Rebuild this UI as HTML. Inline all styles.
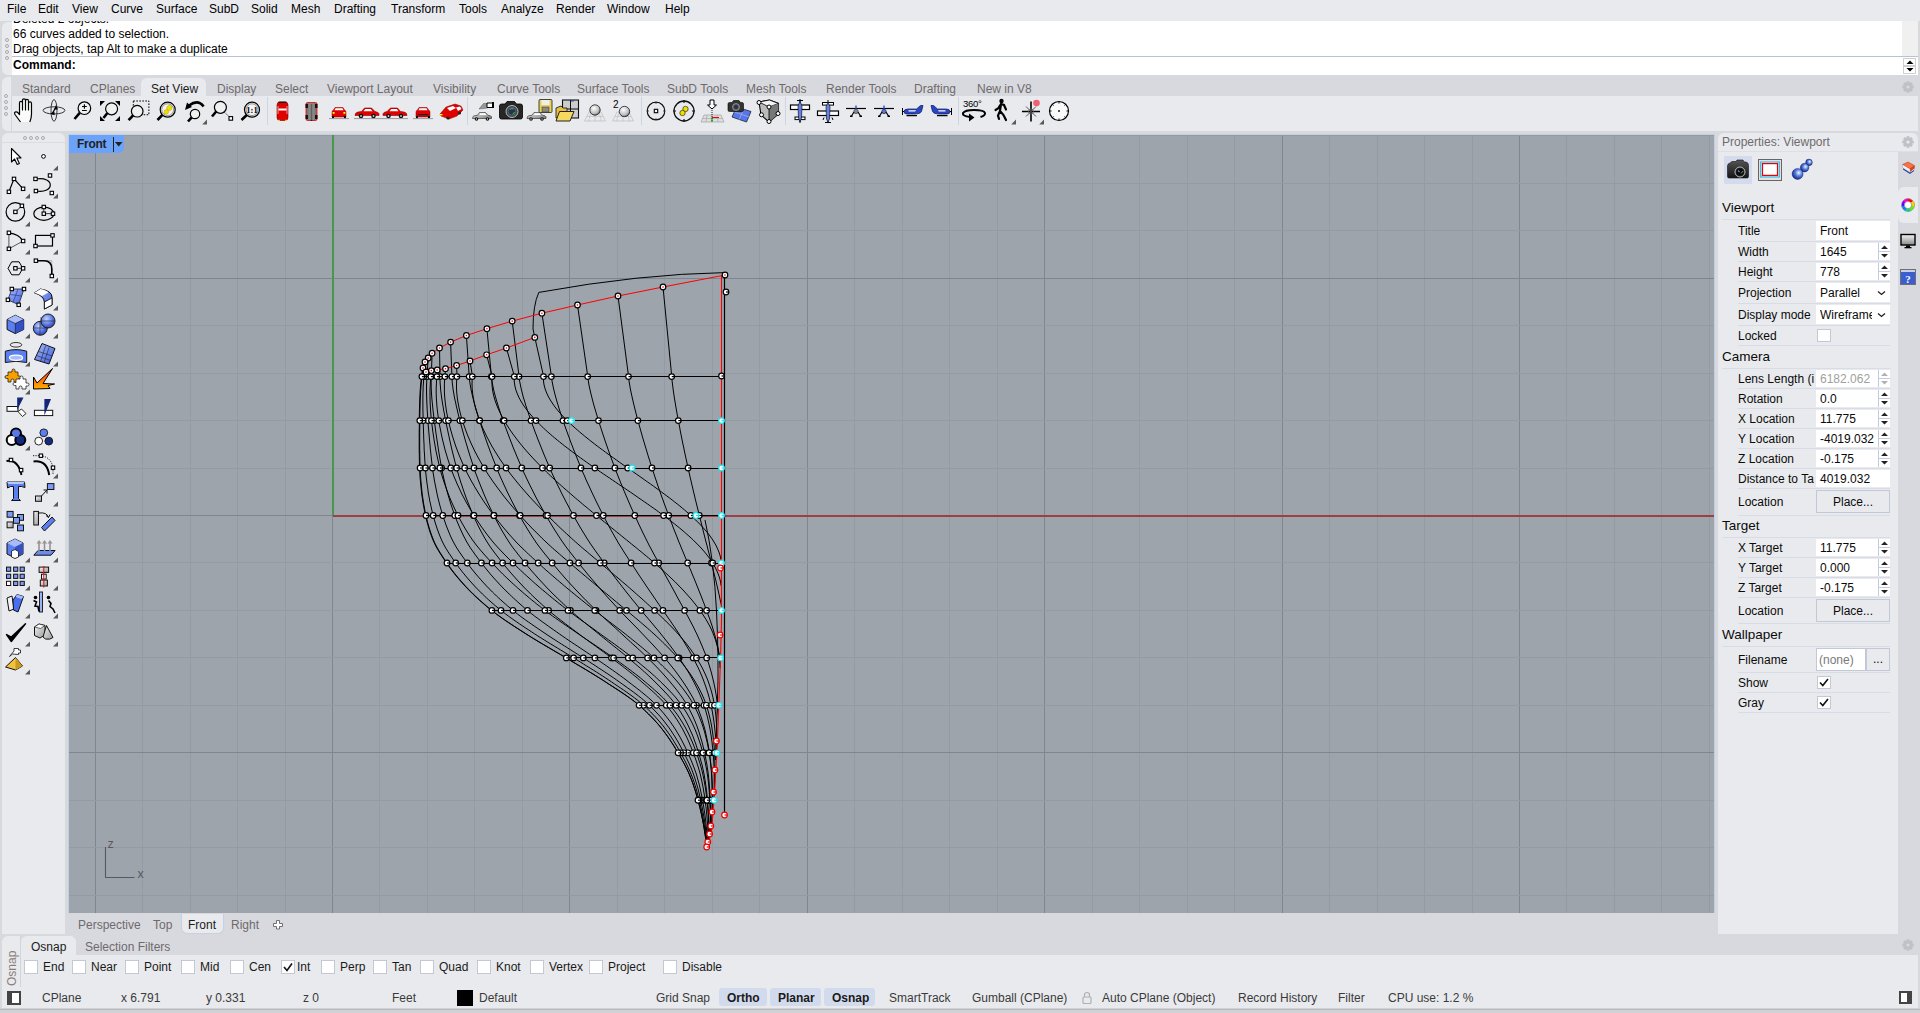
<!DOCTYPE html>
<html><head><meta charset="utf-8">
<style>
*{margin:0;padding:0;box-sizing:border-box}
html,body{width:1920px;height:1013px;overflow:hidden;background:#d8d9dd;font-family:"Liberation Sans",sans-serif;font-size:12px;color:#1a1a1a}
.a{position:absolute}
.t{position:absolute;white-space:nowrap}
svg{position:absolute;overflow:visible}
</style></head><body>

<div class="a" style="left:0px;top:0px;width:1920px;height:21px;background:#e9eaee;"></div>
<div class="t" style="left:7px;top:1.84px;font-size:12px;line-height:14px;color:#000">File</div>
<div class="t" style="left:38px;top:1.84px;font-size:12px;line-height:14px;color:#000">Edit</div>
<div class="t" style="left:72px;top:1.84px;font-size:12px;line-height:14px;color:#000">View</div>
<div class="t" style="left:111px;top:1.84px;font-size:12px;line-height:14px;color:#000">Curve</div>
<div class="t" style="left:156px;top:1.84px;font-size:12px;line-height:14px;color:#000">Surface</div>
<div class="t" style="left:209px;top:1.84px;font-size:12px;line-height:14px;color:#000">SubD</div>
<div class="t" style="left:251px;top:1.84px;font-size:12px;line-height:14px;color:#000">Solid</div>
<div class="t" style="left:291px;top:1.84px;font-size:12px;line-height:14px;color:#000">Mesh</div>
<div class="t" style="left:334px;top:1.84px;font-size:12px;line-height:14px;color:#000">Drafting</div>
<div class="t" style="left:391px;top:1.84px;font-size:12px;line-height:14px;color:#000">Transform</div>
<div class="t" style="left:459px;top:1.84px;font-size:12px;line-height:14px;color:#000">Tools</div>
<div class="t" style="left:501px;top:1.84px;font-size:12px;line-height:14px;color:#000">Analyze</div>
<div class="t" style="left:556px;top:1.84px;font-size:12px;line-height:14px;color:#000">Render</div>
<div class="t" style="left:607px;top:1.84px;font-size:12px;line-height:14px;color:#000">Window</div>
<div class="t" style="left:665px;top:1.84px;font-size:12px;line-height:14px;color:#000">Help</div>
<div class="a" style="left:2px;top:22px;width:11px;height:53px;background:#e9eaee;border-radius:6px 0 0 6px"></div>
<div class="a" style="left:12px;top:21px;width:1906px;height:54px;background:#fff;overflow:hidden">
<div class="t" style="left:1px;top:-8.66px;font-size:12px;line-height:14px;color:#000">Deleted 2 objects.</div>
<div class="t" style="left:1px;top:6.34px;font-size:12px;line-height:14px;color:#000">66 curves added to selection.</div>
<div class="t" style="left:1px;top:21.34px;font-size:12px;line-height:14px;color:#000">Drag objects, tap Alt to make a duplicate</div>
</div>
<div class="a" style="left:1902px;top:21px;width:16px;height:35px;background:#f0f0f0;"></div>
<div class="a" style="left:12px;top:56px;width:1906px;height:1px;background:#b9c1d6;"></div>
<div class="t" style="left:13px;top:58.34px;font-size:12px;line-height:14px;color:#000;font-weight:bold">Command:</div>
<div class="a" style="left:5px;top:37.5px;width:4px;height:4px;border:1px solid #a8a8ae;border-radius:50%"></div>
<div class="a" style="left:5px;top:43.5px;width:4px;height:4px;border:1px solid #a8a8ae;border-radius:50%"></div>
<div class="a" style="left:5px;top:49.5px;width:4px;height:4px;border:1px solid #a8a8ae;border-radius:50%"></div>
<div class="a" style="left:5px;top:55.5px;width:4px;height:4px;border:1px solid #a8a8ae;border-radius:50%"></div>
<div class="a" style="left:1903px;top:58px;width:13px;height:8px;background:#fff;border:1px solid #d0d0d0"></div>
<div class="a" style="left:1903px;top:66px;width:13px;height:8px;background:#fff;border:1px solid #d0d0d0"></div>
<svg style="left:1906px;top:60px" width="8" height="12"><path d="M0.5 4L4 0.5L7.5 4Z M0.5 8L4 11.5L7.5 8Z" fill="#000"/></svg>
<div class="a" style="left:2px;top:77px;width:10px;height:54px;background:#e9eaee;border-radius:6px 0 0 6px"></div>
<div class="a" style="left:11px;top:75px;width:1907px;height:21px;background:#d8d9de;"></div>
<div class="a" style="left:11px;top:96px;width:1907px;height:35px;background:#e9eaee;"></div>
<div class="a" style="left:11px;top:96px;width:1px;height:35px;background:#d3d5dc;"></div>
<div class="a" style="left:141px;top:78px;width:65px;height:18px;background:#e9eaee;border-radius:6px 6px 0 0"></div>
<div class="a" style="left:4px;top:93.5px;width:4px;height:4px;border:1px solid #a8a8ae;border-radius:50%"></div>
<div class="a" style="left:4px;top:99.5px;width:4px;height:4px;border:1px solid #a8a8ae;border-radius:50%"></div>
<div class="a" style="left:4px;top:105.5px;width:4px;height:4px;border:1px solid #a8a8ae;border-radius:50%"></div>
<div class="a" style="left:4px;top:111.5px;width:4px;height:4px;border:1px solid #a8a8ae;border-radius:50%"></div>
<div class="t" style="left:22px;top:81.84px;font-size:12px;line-height:14px;color:#6e6a6c">Standard</div>
<div class="t" style="left:90px;top:81.84px;font-size:12px;line-height:14px;color:#6e6a6c">CPlanes</div>
<div class="t" style="left:151px;top:81.84px;font-size:12px;line-height:14px;color:#1a1a1a">Set View</div>
<div class="t" style="left:217px;top:81.84px;font-size:12px;line-height:14px;color:#6e6a6c">Display</div>
<div class="t" style="left:275px;top:81.84px;font-size:12px;line-height:14px;color:#6e6a6c">Select</div>
<div class="t" style="left:327px;top:81.84px;font-size:12px;line-height:14px;color:#6e6a6c">Viewport Layout</div>
<div class="t" style="left:433px;top:81.84px;font-size:12px;line-height:14px;color:#6e6a6c">Visibility</div>
<div class="t" style="left:497px;top:81.84px;font-size:12px;line-height:14px;color:#6e6a6c">Curve Tools</div>
<div class="t" style="left:577px;top:81.84px;font-size:12px;line-height:14px;color:#6e6a6c">Surface Tools</div>
<div class="t" style="left:667px;top:81.84px;font-size:12px;line-height:14px;color:#6e6a6c">SubD Tools</div>
<div class="t" style="left:746px;top:81.84px;font-size:12px;line-height:14px;color:#6e6a6c">Mesh Tools</div>
<div class="t" style="left:826px;top:81.84px;font-size:12px;line-height:14px;color:#6e6a6c">Render Tools</div>
<div class="t" style="left:914px;top:81.84px;font-size:12px;line-height:14px;color:#6e6a6c">Drafting</div>
<div class="t" style="left:977px;top:81.84px;font-size:12px;line-height:14px;color:#6e6a6c">New in V8</div>
<svg style="left:1902px;top:81px" width="12" height="12"><path fill-rule="evenodd" d="M11.72 4.54 L11.72 7.46 L10.02 7.51 L9.92 7.77 L11.07 9.01 L9.01 11.07 L7.77 9.92 L7.51 10.02 L7.46 11.72 L4.54 11.72 L4.49 10.02 L4.23 9.92 L2.99 11.07 L0.93 9.01 L2.08 7.77 L1.98 7.51 L0.28 7.46 L0.28 4.54 L1.98 4.49 L2.08 4.23 L0.93 2.99 L2.99 0.93 L4.23 2.08 L4.49 1.98 L4.54 0.28 L7.46 0.28 L7.51 1.98 L7.77 2.08 L9.01 0.93 L11.07 2.99 L9.92 4.23 L10.02 4.49Z M7.6 6A1.6 1.6 0 1 0 4.4 6A1.6 1.6 0 1 0 7.6 6Z" fill="#c0c1c6"/></svg>
<div class="a" style="left:2px;top:133px;width:63px;height:801px;background:#e9eaee;border-radius:6px 6px 0 0"></div>
<div class="a" style="left:2px;top:142px;width:63px;height:1px;background:#dcdde2;"></div>
<div class="a" style="left:23px;top:136px;width:4px;height:4px;border:1px solid #a8a8ae;border-radius:50%"></div>
<div class="a" style="left:29px;top:136px;width:4px;height:4px;border:1px solid #a8a8ae;border-radius:50%"></div>
<div class="a" style="left:35px;top:136px;width:4px;height:4px;border:1px solid #a8a8ae;border-radius:50%"></div>
<div class="a" style="left:41px;top:136px;width:4px;height:4px;border:1px solid #a8a8ae;border-radius:50%"></div>
<div class="a" style="left:1718px;top:133px;width:200px;height:18px;background:#e9eaee;border-radius:6px 6px 0 0"></div>
<div class="a" style="left:1718px;top:151px;width:180px;height:783px;background:#e9eaee;"></div>
<div class="a" style="left:1898px;top:151px;width:20px;height:783px;background:#d8d9de;"></div>
<div class="a" style="left:1898px;top:187px;width:20px;height:36px;background:#e9eaee;border-radius:6px 0 0 6px"></div>
<div class="t" style="left:1722px;top:134.84px;font-size:12px;line-height:14px;color:#6e6a6c">Properties: Viewport</div>
<svg style="left:1902px;top:136px" width="12" height="12"><path fill-rule="evenodd" d="M11.72 4.54 L11.72 7.46 L10.02 7.51 L9.92 7.77 L11.07 9.01 L9.01 11.07 L7.77 9.92 L7.51 10.02 L7.46 11.72 L4.54 11.72 L4.49 10.02 L4.23 9.92 L2.99 11.07 L0.93 9.01 L2.08 7.77 L1.98 7.51 L0.28 7.46 L0.28 4.54 L1.98 4.49 L2.08 4.23 L0.93 2.99 L2.99 0.93 L4.23 2.08 L4.49 1.98 L4.54 0.28 L7.46 0.28 L7.51 1.98 L7.77 2.08 L9.01 0.93 L11.07 2.99 L9.92 4.23 L10.02 4.49Z M7.6 6A1.6 1.6 0 1 0 4.4 6A1.6 1.6 0 1 0 7.6 6Z" fill="#c0c1c6"/></svg>
<div class="a" style="left:68px;top:134px;width:1647px;height:780px;background:#c3cde6;"></div>
<div id="vp" class="a" style="left:69px;top:135px;width:1645px;height:778px;background:#9ea4ac;overflow:hidden"></div>
<div class="a" style="left:65px;top:913px;width:1653px;height:21px;background:#d8d9de;"></div>
<div class="a" style="left:181px;top:914px;width:43px;height:20px;background:#e9eaee;border:1px solid #c8d0e2;border-top:none;border-radius:0 0 6px 6px"></div>
<div class="t" style="left:78px;top:918.34px;font-size:12px;line-height:14px;color:#6e6a6c">Perspective</div>
<div class="t" style="left:153px;top:918.34px;font-size:12px;line-height:14px;color:#6e6a6c">Top</div>
<div class="t" style="left:188px;top:918.34px;font-size:12px;line-height:14px;color:#1a1a1a">Front</div>
<div class="t" style="left:231px;top:918.34px;font-size:12px;line-height:14px;color:#6e6a6c">Right</div>
<div class="a" style="left:2px;top:934px;width:1916px;height:53px;background:#d8d9de;"></div>
<div class="a" style="left:2px;top:936px;width:18px;height:51px;background:#e9eaee;border-radius:6px 0 0 0"></div>
<div class="a" style="left:21px;top:936px;width:55px;height:19px;background:#e9eaee;border-radius:6px 6px 0 0"></div>
<div class="a" style="left:21px;top:955px;width:1897px;height:32px;background:#e9eaee;"></div>
<div class="t" style="left:31px;top:940.34px;font-size:12px;line-height:14px;color:#1a1a1a">Osnap</div>
<div class="t" style="left:85px;top:940.34px;font-size:12px;line-height:14px;color:#6e6a6c">Selection Filters</div>
<div class="t" style="left:5px;top:986px;font-size:12px;line-height:14px;color:#8a7e78;transform:rotate(-90deg);transform-origin:0 0">Osnap</div>
<div class="a" style="left:20px;top:936px;width:1px;height:51px;background:#d3d5dc;"></div>
<div class="a" style="left:2px;top:987px;width:1916px;height:21px;background:#e9eaee;"></div>
<div class="a" style="left:0px;top:1008px;width:1920px;height:5px;background:#d0d1d5;"></div>
<div class="a" style="left:0px;top:1009px;width:1920px;height:1px;background:#b9babe;"></div>
<svg style="left:11px;top:97px" width="28" height="28" viewBox="0 0 28 28"><path d="M9.5 25L4 17.5Q2.8 15.3 4.8 14.8Q6 14.6 7.2 16L8.5 17.5V6Q8.5 4.3 10 4.3Q11.5 4.3 11.5 6V13V3.5Q11.5 1.8 13 1.8Q14.5 1.8 14.5 3.5V13V4Q14.5 2.3 16 2.3Q17.5 2.3 17.5 4V13V6.5Q17.5 4.8 19 4.8Q20.5 4.8 20.5 6.5V17Q20.5 21 18.8 25" fill="#fafafa" stroke="#000" stroke-width="1.2" stroke-linejoin="round"/></svg>
<svg style="left:40px;top:97px" width="28" height="28" viewBox="0 0 28 28"><ellipse cx="14" cy="13.4" rx="10.9" ry="3.6" fill="none" stroke="#222" stroke-width="0.9"/><ellipse cx="14" cy="13.4" rx="3" ry="10.8" fill="none" stroke="#222" stroke-width="0.9"/><path d="M16 8L17.8 12.5H14.2Z M10 16.5L14.5 14.8V18.2Z" fill="#000"/><path d="M16 10L12 17" stroke="#000" stroke-width="1.3"/></svg>
<svg style="left:68px;top:97px" width="28" height="28" viewBox="0 0 28 28"><path d="M6.5 22.0L11.99 15.61" stroke="#000" stroke-width="2.6"/><circle cx="16.4" cy="11.2" r="6.3" fill="#f0f0f0" stroke="#000" stroke-width="1.2"/><path d="M14 9.5H18.8M16.4 7.2V11.8M14 13.5H18.8" stroke="#000" stroke-width="1.1"/></svg>
<svg style="left:96px;top:97px" width="28" height="28" viewBox="0 0 28 28"><path d="M4 4H9L4 9Z M24 4H19L24 9Z M4 24H9L4 19Z M24 24H19L24 19Z" fill="#000"/><path d="M7.5 21L11.40 16.00" stroke="#000" stroke-width="2.6"/><circle cx="15.6" cy="11.8" r="6" fill="#f0f0f0" stroke="#000" stroke-width="1.2"/></svg>
<svg style="left:124px;top:97px" width="28" height="28" viewBox="0 0 28 28"><rect x="9.3" y="4" width="15.6" height="13.75" fill="none" stroke="#000" stroke-width="1" stroke-dasharray="1.6 1.4"/><path d="M4.6 23.2L9.14 18.26" stroke="#000" stroke-width="2.6"/><circle cx="13.2" cy="14.2" r="5.8" fill="#f0f0f0" stroke="#000" stroke-width="1.2"/></svg>
<svg style="left:152px;top:97px" width="28" height="28" viewBox="0 0 28 28"><path d="M5.5 23L10.45 17.95" stroke="#000" stroke-width="2.6"/><circle cx="15.7" cy="12.7" r="7.5" fill="#ececec" stroke="#000" stroke-width="1.2"/><circle cx="15.7" cy="12.7" r="5.9" fill="#f4f4f4" stroke="#555" stroke-width="0.6"/><circle cx="17.3" cy="11" r="2.6" fill="#f0e000" stroke="#bba000" stroke-width="0.5"/><circle cx="14.3" cy="14.9" r="2.3" fill="#f0e000" stroke="#bba000" stroke-width="0.5"/></svg>
<svg style="left:180px;top:97px" width="28" height="28" viewBox="0 0 28 28"><path d="M23.6 9.5Q18 2 9 8.5" fill="none" stroke="#000" stroke-width="2.6"/><path d="M5 13L7 5.5L12 10Z" fill="#000"/><path d="M8 24.5L11.71 20.29" stroke="#000" stroke-width="2.6"/><circle cx="15" cy="17" r="4.7" fill="#f0f0f0" stroke="#000" stroke-width="1.2"/><path d="M22.2 27.6H27V22.6Z" fill="#5a5a5a"/></svg>
<svg style="left:208px;top:97px" width="28" height="28" viewBox="0 0 28 28"><path d="M14 13L23 21.3" stroke="#000" stroke-width="0.9" stroke-dasharray="1.2 1.3"/><path d="M4 19.5L8.20 14.50" stroke="#000" stroke-width="2.6"/><circle cx="12.4" cy="10.3" r="6" fill="#f0f0f0" stroke="#000" stroke-width="1.2"/><rect x="21" y="19.6" width="3.6" height="3.6" fill="#fff" stroke="#000" stroke-width="1.1"/></svg>
<svg style="left:236px;top:97px" width="28" height="28" viewBox="0 0 28 28"><path d="M5.5 23L10.75 17.95" stroke="#000" stroke-width="2.6"/><circle cx="16" cy="12.7" r="7.5" fill="#ececec" stroke="#000" stroke-width="1.2"/><circle cx="16" cy="12.7" r="5.9" fill="#f4f4f4" stroke="#555" stroke-width="0.6"/><text x="16" y="16" font-family="Liberation Serif" font-weight="bold" font-size="8.5" text-anchor="middle" fill="#000">1:1</text></svg>
<svg style="left:269px;top:97px" width="28" height="28" viewBox="0 0 28 28"><rect x="8" y="5" width="11" height="18.5" rx="3" fill="#e00000" stroke="#700" stroke-width="0.6"/><rect x="9.5" y="11.5" width="8" height="2" fill="#fff"/><path d="M9.5 5.2H17.5" stroke="#111" stroke-width="1.2"/><path d="M9 9V17M18 9V17" stroke="#fff" stroke-width="0.6"/><path d="M9 23.3H11M16 23.3H18" stroke="#ff0" stroke-width="0.8"/></svg>
<svg style="left:297px;top:97px" width="28" height="28" viewBox="0 0 28 28"><rect x="9" y="5.5" width="11" height="18" rx="1.5" fill="#777" stroke="#e00" stroke-width="0.8"/><rect x="8.5" y="7" width="2.5" height="4" fill="#111"/><rect x="18" y="7" width="2.5" height="4" fill="#111"/><rect x="8.5" y="18" width="2.5" height="4" fill="#111"/><rect x="18" y="18" width="2.5" height="4" fill="#111"/><path d="M14.5 7V24" stroke="#222" stroke-width="1.4"/><rect x="11.5" y="6" width="6" height="17" fill="#999" opacity="0.5"/></svg>
<svg style="left:325px;top:97px" width="28" height="28" viewBox="0 0 28 28"><path d="M7 20V15Q7 13.5 8.5 13L10 10.5H18L19.5 13Q21 13.5 21 15V20Z" fill="#e00000" stroke="#800" stroke-width="0.5"/><path d="M10.5 11.2H17.5L18.5 13.2H9.5Z" fill="#fff"/><rect x="7.6" y="15" width="2" height="1.8" fill="#ff0"/><rect x="18.4" y="15" width="2" height="1.8" fill="#ff0"/><rect x="7" y="19" width="2" height="2.2" fill="#111"/><rect x="19" y="19" width="2" height="2.2" fill="#111"/><path d="M4 21.6H24" stroke="#777" stroke-width="0.7"/></svg>
<svg style="left:353px;top:97px" width="28" height="28" viewBox="0 0 28 28"><path d="M2 18.5Q2 15.5 5 15L8.5 14.5L11.5 11H18.5L22 14.5L25 15.5Q26.5 16.5 26 18.5Z" fill="#e00000" stroke="#800" stroke-width="0.6"/><path d="M12.2 12H17.8L19.5 14.3H10.5Z" fill="#fff"/><circle cx="8" cy="19" r="2.3" fill="#111"/><circle cx="20.5" cy="19" r="2.3" fill="#111"/><circle cx="8" cy="19" r="0.9" fill="#ccc"/><circle cx="20.5" cy="19" r="0.9" fill="#ccc"/><path d="M1 21.6H28" stroke="#777" stroke-width="0.7"/></svg>
<svg style="left:381px;top:97px" width="28" height="28" viewBox="0 0 28 28"><g transform="translate(28,0) scale(-1,1)"><path d="M2 18.5Q2 15.5 5 15L8.5 14.5L11.5 11H18.5L22 14.5L25 15.5Q26.5 16.5 26 18.5Z" fill="#e00000" stroke="#800" stroke-width="0.6"/><path d="M12.2 12H17.8L19.5 14.3H10.5Z" fill="#fff"/><circle cx="8" cy="19" r="2.3" fill="#111"/><circle cx="20.5" cy="19" r="2.3" fill="#111"/><circle cx="8" cy="19" r="0.9" fill="#ccc"/><circle cx="20.5" cy="19" r="0.9" fill="#ccc"/><path d="M1 21.6H28" stroke="#777" stroke-width="0.7"/></g></svg>
<svg style="left:409px;top:97px" width="28" height="28" viewBox="0 0 28 28"><path d="M7 20V15Q7 13.5 8.5 13L10 10.5H18L19.5 13Q21 13.5 21 15V20Z" fill="#e00000" stroke="#800" stroke-width="0.5"/><path d="M10.5 11.2H17.5L18.5 13.2H9.5Z" fill="#fff"/><rect x="8.5" y="17" width="11" height="1.3" fill="#222"/><rect x="7" y="19" width="2" height="2.2" fill="#111"/><rect x="19" y="19" width="2" height="2.2" fill="#111"/><path d="M4 21.6H24" stroke="#777" stroke-width="0.7"/></svg>
<svg style="left:437px;top:97px" width="28" height="28" viewBox="0 0 28 28"><path d="M3 17L9 10L18 7L24 9L26 13L20 19L12 22L4 19Z" fill="#e00000" stroke="#800" stroke-width="0.5"/><path d="M10 11L16 9L19 11L13 14Z" fill="#fff"/><path d="M19 10.5L23 9.5L24.5 12L21 14Z" fill="#fff"/><circle cx="11" cy="21" r="1.6" fill="#222"/><circle cx="22.5" cy="16" r="1.6" fill="#222"/><rect x="3" y="17" width="2.5" height="1.3" fill="#ff0"/></svg>
<svg style="left:469px;top:97px" width="28" height="28" viewBox="0 0 28 28"><defs><linearGradient id="gcar" x1="0" y1="0" x2="1" y2="1"><stop offset="0" stop-color="#eee"/><stop offset="1" stop-color="#777"/></linearGradient></defs><g transform="translate(2.5,13.5) scale(1.0)"><path d="M1 8Q1 5.5 3 5.2L6 4.8L8 2H14L16.5 4.8L19 5.3Q20.5 6 20 8Z" fill="url(#gcar)" stroke="#222" stroke-width="0.6"/><path d="M8.8 2.8H13.5L15 4.6H8Z" fill="#fff"/><circle cx="5" cy="8.5" r="1.8" fill="#111"/><circle cx="16" cy="8.5" r="1.8" fill="#111"/><circle cx="5" cy="8.5" r="0.7" fill="#ddd"/><circle cx="16" cy="8.5" r="0.7" fill="#ddd"/></g><path d="M10 12L14.5 6.5H21L18.5 11Z" fill="#999" stroke="#555" stroke-width="0.5"/><path d="M18 6H24V10.5H18Z" fill="#fff" stroke="#000" stroke-width="1"/><rect x="23" y="5" width="2" height="6" fill="#000"/></svg>
<svg style="left:497px;top:97px" width="28" height="28" viewBox="0 0 28 28"><path d="M2.5 9Q2.5 7 4.5 7H8L10 4.5H17.5L19.5 7H23.5Q25.5 7 25.5 9V20Q25.5 22 23.5 22H4.5Q2.5 22 2.5 20Z" fill="#262626" stroke="#000" stroke-width="0.8"/><circle cx="15" cy="14.5" r="6" fill="#444" stroke="#bbb" stroke-width="1"/><circle cx="15" cy="14.5" r="3.8" fill="#1a3a4a" stroke="#888" stroke-width="0.5"/><path d="M13 12.5A3 3 0 0 1 16.5 12" stroke="#7ad" stroke-width="0.8" fill="none"/><path d="M15.5 17A2.5 2.5 0 0 0 17.5 15" stroke="#4c6" stroke-width="0.8" fill="none"/></svg>
<svg style="left:525px;top:97px" width="28" height="28" viewBox="0 0 28 28"><rect x="14" y="2.5" width="13" height="13" rx="1" fill="#e8d060" stroke="#332" stroke-width="0.9"/><rect x="16.5" y="3" width="8" height="5" fill="#eee"/><rect x="17" y="10" width="7" height="5" fill="#888" stroke="#333" stroke-width="0.5"/><rect x="18" y="11" width="2" height="2" fill="#a90"/><g transform="translate(1,13.5) scale(1.0)"><path d="M1 8Q1 5.5 3 5.2L6 4.8L8 2H14L16.5 4.8L19 5.3Q20.5 6 20 8Z" fill="url(#gcar)" stroke="#222" stroke-width="0.6"/><path d="M8.8 2.8H13.5L15 4.6H8Z" fill="#fff"/><circle cx="5" cy="8.5" r="1.8" fill="#111"/><circle cx="16" cy="8.5" r="1.8" fill="#111"/><circle cx="5" cy="8.5" r="0.7" fill="#ddd"/><circle cx="16" cy="8.5" r="0.7" fill="#ddd"/></g></svg>
<svg style="left:553px;top:97px" width="28" height="28" viewBox="0 0 28 28"><rect x="9.5" y="3" width="16" height="18" fill="#ccc" stroke="#111" stroke-width="1.1"/><path d="M17.5 3V21M9.5 12H25.5" stroke="#111" stroke-width="1"/><rect x="18" y="3.5" width="3" height="1" fill="#24c"/><path d="M3 11L8 9L10 11H14V21H3Z" fill="#e8c040" stroke="#222" stroke-width="0.9"/><path d="M3 24L6.5 14.5H21L17 24Z" fill="#f5d860" stroke="#222" stroke-width="1"/></svg>
<svg style="left:581px;top:97px" width="28" height="28" viewBox="0 0 28 28"><defs><radialGradient id="sph" cx="0.4" cy="0.35" r="0.7"><stop offset="0" stop-color="#fff"/><stop offset="0.7" stop-color="#bbb"/><stop offset="1" stop-color="#555"/></radialGradient></defs><path d="M3.5 24H24.5L20 15H8Z" fill="none" stroke="#bbb" stroke-width="0.7"/><path d="M6 19.5H22M10 15L7.5 24M14 15V24M18 15L20.5 24" stroke="#bbb" stroke-width="0.6"/><circle cx="14" cy="13" r="5.2" fill="url(#sph)" stroke="#222" stroke-width="0.8"/></svg>
<svg style="left:609px;top:97px" width="28" height="28" viewBox="0 0 28 28"><path d="M3.5 24H24.5L20 15H8Z" fill="none" stroke="#bbb" stroke-width="0.7"/><path d="M6 19.5H22M10 15L7.5 24M14 15V24M18 15L20.5 24" stroke="#bbb" stroke-width="0.6"/><circle cx="15.5" cy="14.5" r="5.2" fill="url(#sph)" stroke="#222" stroke-width="0.8"/><text x="4" y="11" font-family="Liberation Sans" font-size="10" fill="#000">2</text></svg>
<svg style="left:642px;top:97px" width="28" height="28" viewBox="0 0 28 28"><circle cx="14" cy="14" r="8.8" fill="none" stroke="#111" stroke-width="1.2"/><rect x="12.3" y="12.3" width="3.4" height="3.4" fill="#fff" stroke="#000" stroke-width="1.1"/><path d="M14 5.5V7M14 21V22.5M5.5 14H7M21 14H22.5" stroke="#111" stroke-width="0.7"/></svg>
<svg style="left:670px;top:97px" width="28" height="28" viewBox="0 0 28 28"><circle cx="14" cy="14" r="10" fill="none" stroke="#111" stroke-width="1.3"/><path d="M14 3V6M14 22V25M3 14H6M22 14H25" stroke="#111" stroke-width="1.2"/><circle cx="15.5" cy="12" r="2.7" fill="#f0e000" stroke="#111" stroke-width="0.6"/><circle cx="12.5" cy="16" r="2.7" fill="#f0e000" stroke="#111" stroke-width="0.6"/></svg>
<svg style="left:698px;top:97px" width="28" height="28" viewBox="0 0 28 28"><path d="M3 25L6 18H23L26 25Z" fill="#ddd" stroke="#999" stroke-width="0.6"/><path d="M4.5 21.5H24.5M9 18L8 25M14 18V25M19 18L20 25" stroke="#999" stroke-width="0.5"/><path d="M14 9V24" stroke="#111" stroke-width="0.9" stroke-dasharray="1 1"/><path d="M14 20.5V25" stroke="#0a0" stroke-width="1"/><path d="M14 20.5H21" stroke="#e00" stroke-width="1"/><path d="M12 3H16V8H18.5L14 12L9.5 8H12Z" fill="#fff" stroke="#000" stroke-width="1"/></svg>
<svg style="left:726px;top:97px" width="28" height="28" viewBox="0 0 28 28"><path d="M6 20L10.5 10L25 14.5L20.5 25Z" fill="#5577ee" stroke="#223" stroke-width="0.8"/><path d="M8.3 15L22.8 19.8M17.8 12.3L13.2 22.5" stroke="#aac" stroke-width="0.8"/><path d="M2 7Q2 5.5 3.5 5.5H6L7.5 3.5H13L14.5 5.5H16Q17.5 5.5 17.5 7V13Q17.5 14.5 16 14.5H3.5Q2 14.5 2 13Z" fill="#333" stroke="#000" stroke-width="0.6"/><circle cx="10" cy="10" r="3.5" fill="#555" stroke="#aaa" stroke-width="0.7"/><circle cx="10" cy="10" r="2" fill="#235"/></svg>
<svg style="left:754px;top:97px" width="28" height="28" viewBox="0 0 28 28"><path d="M5 5L15.5 3L24.5 6.5V17L15 25L7 18Z" fill="#bbb" stroke="#000" stroke-width="1.1"/><path d="M5 5L15.5 3L24.5 6.5L15 10Z" fill="#f4f4f4" stroke="#000" stroke-width="0.8"/><path d="M15 10L24.5 6.5V17L15 25Z" fill="#777"/><path d="M15 10V25" stroke="#000" stroke-width="0.8"/><circle cx="5" cy="5.5" r="2" fill="#fff" stroke="#000" stroke-width="1"/><circle cx="15" cy="10" r="2" fill="#fff" stroke="#000" stroke-width="1"/><circle cx="7.5" cy="17.8" r="2" fill="#fff" stroke="#000" stroke-width="1"/><circle cx="24" cy="16.5" r="2" fill="#fff" stroke="#000" stroke-width="1"/><circle cx="15" cy="24.5" r="2" fill="#fff" stroke="#000" stroke-width="1"/></svg>
<svg style="left:786px;top:97px" width="28" height="28" viewBox="0 0 28 28"><path d="M14 2V26" stroke="#000" stroke-width="1"/><rect x="4.5" y="8" width="19" height="4.5" fill="#fff" stroke="#000" stroke-width="1.2"/><rect x="9" y="20" width="10" height="2.6" fill="#fff" stroke="#000" stroke-width="1"/><path d="M14 4L16 9L15.5 21L14 25L12.5 21L12 9Z" fill="#6680e8" stroke="#000" stroke-width="0.6"/><path d="M11 3.5H17" stroke="#000" stroke-width="1"/></svg>
<svg style="left:814px;top:97px" width="28" height="28" viewBox="0 0 28 28"><path d="M14 3V26" stroke="#000" stroke-width="1"/><rect x="3.5" y="14" width="21" height="4.5" fill="#fff" stroke="#000" stroke-width="1.2"/><rect x="8.5" y="5.5" width="11" height="2.6" fill="#fff" stroke="#000" stroke-width="1"/><path d="M14 5L16 10L15.5 22L14 25L12.5 22L12 10Z" fill="#6680e8" stroke="#000" stroke-width="0.6"/><path d="M11 25.5H17M10 20.5L9 23M18 20.5L19 23" stroke="#000" stroke-width="1"/></svg>
<svg style="left:842px;top:97px" width="28" height="28" viewBox="0 0 28 28"><path d="M4 11.5H24" stroke="#000" stroke-width="1.2"/><path d="M14 8.5V12" stroke="#24c" stroke-width="1.3"/><circle cx="14" cy="14.5" r="2.2" fill="#888" stroke="#446" stroke-width="0.7"/><path d="M9.5 19L12 15M18.5 19L16 15" stroke="#000" stroke-width="1.2"/><path d="M8 19.2H10.5M17.5 19.2H20" stroke="#000" stroke-width="1.4"/></svg>
<svg style="left:870px;top:97px" width="28" height="28" viewBox="0 0 28 28"><path d="M4 11.5H24" stroke="#000" stroke-width="1.2"/><path d="M14 8.5V12" stroke="#24c" stroke-width="1.3"/><circle cx="14" cy="14.5" r="2.2" fill="#5577ee" stroke="#223" stroke-width="0.7"/><path d="M9.5 19L12 15M18.5 19L16 15" stroke="#000" stroke-width="1.2"/><path d="M8 19.2H10.5M17.5 19.2H20" stroke="#000" stroke-width="1.4"/></svg>
<svg style="left:899px;top:97px" width="28" height="28" viewBox="0 0 28 28"><path d="M5 14.5Q5 12 9 12H17.5L21.5 8.5H24L22.5 14.5Q21.5 17 15 17H8Q5 17 5 14.5Z" fill="#2a45c0" stroke="#0a1660" stroke-width="0.7"/><path d="M9.5 13.2H17L16.2 14.6H9.5Z" fill="#fff"/><path d="M7.5 18.6H18" stroke="#000" stroke-width="1.3"/><path d="M3.5 11V18" stroke="#000" stroke-width="1"/><path d="M3.5 14.5H5" stroke="#000" stroke-width="1"/></svg>
<svg style="left:927px;top:97px" width="28" height="28" viewBox="0 0 28 28"><g transform="translate(28,0) scale(-1,1)"><path d="M5 14.5Q5 12 9 12H17.5L21.5 8.5H24L22.5 14.5Q21.5 17 15 17H8Q5 17 5 14.5Z" fill="#2a45c0" stroke="#0a1660" stroke-width="0.7"/><path d="M9.5 13.2H17L16.2 14.6H9.5Z" fill="#fff"/><path d="M7.5 18.6H18" stroke="#000" stroke-width="1.3"/><path d="M3.5 11V18" stroke="#000" stroke-width="1"/><path d="M3.5 14.5H5" stroke="#000" stroke-width="1"/></g></svg>
<svg style="left:960px;top:97px" width="28" height="28" viewBox="0 0 28 28"><text x="3" y="10" font-family="Liberation Sans" font-size="9.5" fill="#000" letter-spacing="-0.3">360°</text><path d="M10 20Q2 19 3 16Q5 13 14 13Q24 13 25 16Q25.5 18.5 20.5 20" fill="none" stroke="#000" stroke-width="2"/><path d="M9 16.5L14.5 20.5L9 24.5Z" fill="#000"/></svg>
<svg style="left:989px;top:97px" width="28" height="28" viewBox="0 0 28 28"><circle cx="12.5" cy="4" r="2.2" fill="#000"/><path d="M12 7L9 11.5L6.5 13M12 7L15 8L17 12.5M12 7L11 14L9 18.5L10 22M11 14L14.5 18L17 23" fill="none" stroke="#000" stroke-width="2.2" stroke-linecap="round"/><path d="M22.2 27.6H27V22.6Z" fill="#5a5a5a"/></svg>
<svg style="left:1017px;top:97px" width="28" height="28" viewBox="0 0 28 28"><path d="M14 4.5V24.5M5 14.5H23" stroke="#000" stroke-width="1.6"/><path d="M9 9.5L19 19.5M19 9.5L9 19.5" stroke="#555" stroke-width="1"/><circle cx="14" cy="14.5" r="2.5" fill="none" stroke="#666" stroke-width="0.8"/><circle cx="19.5" cy="6" r="3.3" fill="#f06070"/><path d="M22.2 27.6H27V22.6Z" fill="#5a5a5a"/></svg>
<svg style="left:1045px;top:97px" width="28" height="28" viewBox="0 0 28 28"><circle cx="14" cy="14" r="9.5" fill="#fafafa" stroke="#000" stroke-width="1.2"/><circle cx="14" cy="14" r="0.9" fill="#000"/><path d="M14 4.5V6.5M14 21.5V23.5M4.5 14H6.5M21.5 14H23.5M20.7 7.3L19.5 8.5M7.3 7.3L8.5 8.5M20.7 20.7L19.5 19.5M7.3 20.7L8.5 19.5" stroke="#000" stroke-width="1"/></svg>
<div class="a" style="left:267px;top:97px;width:1px;height:28px;background:#cdd4e2;"></div>
<div class="a" style="left:467px;top:97px;width:1px;height:28px;background:#cdd4e2;"></div>
<div class="a" style="left:641px;top:97px;width:1px;height:28px;background:#cdd4e2;"></div>
<div class="a" style="left:785px;top:97px;width:1px;height:28px;background:#cdd4e2;"></div>
<div class="a" style="left:958px;top:97px;width:1px;height:28px;background:#cdd4e2;"></div>
<svg style="left:0;top:0" width="0" height="0"><defs><linearGradient id="bg1" x1="0" y1="0" x2="1" y2="1"><stop offset="0" stop-color="#a9bdfb"/><stop offset="1" stop-color="#3a5ad8"/></linearGradient><radialGradient id="bs1" cx="0.4" cy="0.35" r="0.7"><stop offset="0" stop-color="#c5d3ff"/><stop offset="0.6" stop-color="#5877e6"/><stop offset="1" stop-color="#2a3fa0"/></radialGradient><linearGradient id="og1" x1="0" y1="0" x2="0" y2="1"><stop offset="0" stop-color="#ff3000"/><stop offset="1" stop-color="#ffb000"/></linearGradient><linearGradient id="gg1" x1="0" y1="0" x2="1" y2="1"><stop offset="0" stop-color="#f4f4f4"/><stop offset="1" stop-color="#9a9a9a"/></linearGradient></defs></svg>
<svg style="left:2px;top:143px" width="28" height="28" viewBox="0 0 28 28"><path d="M9.5 5.5V19L12.6 16L15.2 21.5L17.4 20.5L14.8 15H19Z" fill="#fff" stroke="#000" stroke-width="1.1" stroke-linejoin="round"/></svg>
<svg style="left:30px;top:143px" width="28" height="28" viewBox="0 0 28 28"><circle cx="13.5" cy="13.4" r="1.9" fill="#fff" stroke="#000" stroke-width="1"/><path d="M23 27.5H28V22.5Z" fill="#5a5a5a"/></svg>
<svg style="left:2px;top:171px" width="28" height="28" viewBox="0 0 28 28"><path d="M6.9 20.8L12 7.9L21.1 17.8" fill="none" stroke="#000" stroke-width="1.2"/><rect x="5.20" y="19.10" width="3.4" height="3.4" fill="#fff" stroke="#000" stroke-width="1.1"/><rect x="10.30" y="6.20" width="3.4" height="3.4" fill="#fff" stroke="#000" stroke-width="1.1"/><rect x="19.40" y="16.10" width="3.4" height="3.4" fill="#fff" stroke="#000" stroke-width="1.1"/><path d="M23 27.5H28V22.5Z" fill="#5a5a5a"/></svg>
<svg style="left:30px;top:171px" width="28" height="28" viewBox="0 0 28 28"><path d="M6 8C25 5 25 23 6 20" fill="none" stroke="#000" stroke-width="1.2"/><rect x="3.80" y="6.20" width="3.4" height="3.4" fill="#fff" stroke="#000" stroke-width="1.1"/><rect x="18.30" y="2.80" width="3.4" height="3.4" fill="#fff" stroke="#000" stroke-width="1.1"/><rect x="4.20" y="18.30" width="3.4" height="3.4" fill="#fff" stroke="#000" stroke-width="1.1"/><rect x="20.10" y="20.30" width="3.4" height="3.4" fill="#fff" stroke="#000" stroke-width="1.1"/><path d="M23 27.5H28V22.5Z" fill="#5a5a5a"/></svg>
<svg style="left:2px;top:199px" width="28" height="28" viewBox="0 0 28 28"><circle cx="13.4" cy="12.9" r="9.3" fill="none" stroke="#000" stroke-width="1.2"/><path d="M13.4 12.9L19.9 6.8" stroke="#000" stroke-width="0.8"/><rect x="11.70" y="11.20" width="3.4" height="3.4" fill="#fff" stroke="#000" stroke-width="1.1"/><rect x="18.20" y="5.10" width="3.4" height="3.4" fill="#fff" stroke="#000" stroke-width="1.1"/><path d="M23 27.5H28V22.5Z" fill="#5a5a5a"/></svg>
<svg style="left:30px;top:199px" width="28" height="28" viewBox="0 0 28 28"><ellipse cx="13.8" cy="14.7" rx="10" ry="6.6" fill="none" stroke="#000" stroke-width="1.2"/><path d="M13.8 8V14.7H23" stroke="#000" stroke-width="0.8" fill="none"/><rect x="12.10" y="6.30" width="3.4" height="3.4" fill="#fff" stroke="#000" stroke-width="1.1"/><rect x="12.10" y="13.00" width="3.4" height="3.4" fill="#fff" stroke="#000" stroke-width="1.1"/><rect x="21.30" y="13.00" width="3.4" height="3.4" fill="#fff" stroke="#000" stroke-width="1.1"/><path d="M23 27.5H28V22.5Z" fill="#5a5a5a"/></svg>
<svg style="left:2px;top:227px" width="28" height="28" viewBox="0 0 28 28"><path d="M6.9 5.8V21.8L21.1 14" fill="none" stroke="#333" stroke-width="0.8"/><path d="M6.9 5.8Q17 7 21.1 14" fill="none" stroke="#000" stroke-width="1.2"/><rect x="5.20" y="4.10" width="3.4" height="3.4" fill="#fff" stroke="#000" stroke-width="1.1"/><rect x="19.40" y="12.30" width="3.4" height="3.4" fill="#fff" stroke="#000" stroke-width="1.1"/><rect x="5.20" y="20.10" width="3.4" height="3.4" fill="#fff" stroke="#000" stroke-width="1.1"/><path d="M23 27.5H28V22.5Z" fill="#5a5a5a"/></svg>
<svg style="left:30px;top:227px" width="28" height="28" viewBox="0 0 28 28"><rect x="5.5" y="8.4" width="17" height="10.6" fill="none" stroke="#000" stroke-width="1.2"/><rect x="3.80" y="17.30" width="3.4" height="3.4" fill="#fff" stroke="#000" stroke-width="1.1"/><rect x="20.80" y="6.70" width="3.4" height="3.4" fill="#fff" stroke="#000" stroke-width="1.1"/><path d="M23 27.5H28V22.5Z" fill="#5a5a5a"/></svg>
<svg style="left:2px;top:255px" width="28" height="28" viewBox="0 0 28 28"><path d="M6 13.3L9.7 6.8H17.1L20.8 13.3L17.1 19.8H9.7Z" fill="none" stroke="#000" stroke-width="1"/><path d="M13.4 13.3H21.1" stroke="#000" stroke-width="0.8"/><rect x="11.70" y="11.60" width="3.4" height="3.4" fill="#fff" stroke="#000" stroke-width="1.1"/><rect x="19.40" y="11.60" width="3.4" height="3.4" fill="#fff" stroke="#000" stroke-width="1.1"/><path d="M23 27.5H28V22.5Z" fill="#5a5a5a"/></svg>
<svg style="left:30px;top:255px" width="28" height="28" viewBox="0 0 28 28"><path d="M6 5.7H21.8V21" fill="none" stroke="#999" stroke-width="0.7"/><path d="M6 5.7H14Q21.8 5.7 21.8 14V21" fill="none" stroke="#000" stroke-width="1.6"/><rect x="4.20" y="4.00" width="3.4" height="3.4" fill="#fff" stroke="#000" stroke-width="1.1"/><rect x="20.10" y="19.30" width="3.4" height="3.4" fill="#fff" stroke="#000" stroke-width="1.1"/><path d="M23 27.5H28V22.5Z" fill="#5a5a5a"/></svg>
<svg style="left:2px;top:283px" width="28" height="28" viewBox="0 0 28 28"><path d="M9.8 6L22 6L16.7 21.8L5.9 16.8Z" fill="url(#bg1)" stroke="#223" stroke-width="0.8"/><path d="M8 11.5L19.5 13M16 6L11 19.5" stroke="#2a3a90" stroke-width="0.7" fill="none"/><rect x="8.10" y="4.30" width="3.4" height="3.4" fill="#fff" stroke="#000" stroke-width="1.1"/><rect x="20.30" y="4.30" width="3.4" height="3.4" fill="#fff" stroke="#000" stroke-width="1.1"/><rect x="4.20" y="15.10" width="3.4" height="3.4" fill="#fff" stroke="#000" stroke-width="1.1"/><rect x="15.00" y="20.10" width="3.4" height="3.4" fill="#fff" stroke="#000" stroke-width="1.1"/><path d="M23 27.5H28V22.5Z" fill="#5a5a5a"/></svg>
<svg style="left:30px;top:283px" width="28" height="28" viewBox="0 0 28 28"><path d="M4.5 9.8L10.5 6Q22 8 22 14V22L14.4 26V19Q14 13 4.5 9.8Z" fill="url(#bg1)" stroke="#000" stroke-width="1"/><path d="M4.5 9.8L10.5 6Q16 7 18.5 9.5L12 13Q9 11 4.5 9.8Z" fill="#fff"/><path d="M14.4 19L22 15V22L14.4 26Z" fill="#fff" stroke="#000" stroke-width="0.8"/><path d="M23 27.5H28V22.5Z" fill="#5a5a5a"/></svg>
<svg style="left:2px;top:311px" width="28" height="28" viewBox="0 0 28 28"><path d="M5.1 8.5L13.3 4.2L21.7 8.5V18.5L13.3 22.6L5.1 18.5Z" fill="#5b7ff0" stroke="#111" stroke-width="1"/><path d="M5.1 8.5L13.3 4.2L21.7 8.5L13.3 12.5Z" fill="#a9bcfa"/><path d="M13.3 12.5L21.7 8.5V18.5L13.3 22.6Z" fill="#3350c4"/><path d="M5.1 8.5L13.3 12.5L21.7 8.5M13.3 12.5V22.6" stroke="#111" stroke-width="0.6" fill="none"/><path d="M23 27.5H28V22.5Z" fill="#5a5a5a"/></svg>
<svg style="left:30px;top:311px" width="28" height="28" viewBox="0 0 28 28"><circle cx="10.3" cy="17.3" r="7" fill="url(#bs1)" stroke="#111" stroke-width="0.9"/><circle cx="18" cy="10" r="7" fill="url(#bs1)" stroke="#111" stroke-width="0.9"/><path d="M11 6V16M11.5 10H24.5M4 17H16.5M10 10.5V24" stroke="#223" stroke-width="0.6" fill="none"/><path d="M23 27.5H28V22.5Z" fill="#5a5a5a"/></svg>
<svg style="left:2px;top:339px" width="28" height="28" viewBox="0 0 28 28"><ellipse cx="14" cy="5.8" rx="5.8" ry="2.3" fill="none" stroke="#222" stroke-width="0.9"/><path d="M3.3 12.2Q14 9 24.7 12.2V23.5Q14 21 3.3 23.5Z" fill="#5b7ff0" stroke="#111" stroke-width="1"/><ellipse cx="14" cy="18.8" rx="6.5" ry="2.6" fill="#a9bcfa" stroke="#fff" stroke-width="1.3"/><path d="M23 27.5H28V22.5Z" fill="#5a5a5a"/></svg>
<svg style="left:30px;top:339px" width="28" height="28" viewBox="0 0 28 28"><path d="M4.5 20.5L12 4.5L25 9.5L19 25Z" fill="url(#bg1)" stroke="#111" stroke-width="1"/><path d="M8.5 12.5L22 17M15.5 7L10.5 22.5M6.5 16.5L20.5 21.5M19 8.5L14 24" stroke="#223" stroke-width="0.6" fill="none"/><path d="M23 27.5H28V22.5Z" fill="#5a5a5a"/></svg>
<svg style="left:2px;top:367px" width="28" height="28" viewBox="0 0 28 28"><path d="M6 5H10V3.5A1.5 1.5 0 0 1 13 3.5V5H16V9H17.5A1.5 1.5 0 0 1 17.5 12H16V15H12V13.5A1.5 1.5 0 0 0 9 13.5V15H6V11.5H4.5A1.5 1.5 0 0 1 4.5 8.5H6Z" fill="#f5a000" stroke="#222" stroke-width="0.8"/><path d="M14 12H18V10.5A1.5 1.5 0 0 1 21 10.5V12H24V16H25.5A1.5 1.5 0 0 1 25.5 19H24V22H20V20.5A1.5 1.5 0 0 0 17 20.5V22H14V18.5H12.5A1.5 1.5 0 0 1 12.5 15.5H14Z" fill="#fff" stroke="#222" stroke-width="0.8"/><path d="M23 27.5H28V22.5Z" fill="#5a5a5a"/></svg>
<svg style="left:30px;top:367px" width="28" height="28" viewBox="0 0 28 28"><path d="M3.5 22V10L7 16L22.5 1.5L13 16.5L24.5 17L18 18.5L20 21.5Z" fill="url(#og1)" stroke="#000" stroke-width="1"/></svg>
<svg style="left:2px;top:395px" width="28" height="28" viewBox="0 0 28 28"><rect x="5" y="11.5" width="11" height="4.8" fill="#fff" stroke="#111" stroke-width="1"/><path d="M15.2 2.5H21.5L15.2 15Z" fill="#14267a"/><path d="M16 16.5L19.5 14L24 18.5L20.5 21.5Z" fill="#fff" stroke="#111" stroke-width="0.9"/></svg>
<svg style="left:30px;top:395px" width="28" height="28" viewBox="0 0 28 28"><rect x="4.4" y="15.3" width="18.3" height="5.3" fill="#fff" stroke="#111" stroke-width="1"/><path d="M14.4 4H21L14.4 20.6Z" fill="#14267a"/></svg>
<svg style="left:2px;top:423px" width="28" height="28" viewBox="0 0 28 28"><circle cx="14" cy="10.5" r="5" fill="#5878e8" stroke="#000" stroke-width="2"/><circle cx="9.7" cy="17" r="5" fill="#fff" stroke="#000" stroke-width="2"/><circle cx="18.3" cy="17" r="5" fill="#142a80" stroke="#000" stroke-width="2"/><circle cx="14" cy="10.5" r="3.6" fill="#5878e8"/><path d="M23 27.5H28V22.5Z" fill="#5a5a5a"/></svg>
<svg style="left:30px;top:423px" width="28" height="28" viewBox="0 0 28 28"><circle cx="13.8" cy="9.8" r="3.9" fill="#5b7ff0" stroke="#111" stroke-width="0.9"/><circle cx="8.7" cy="18.1" r="3.9" fill="#fff" stroke="#111" stroke-width="0.9"/><circle cx="18.8" cy="18.1" r="3.9" fill="#142a80" stroke="#111" stroke-width="0.9"/></svg>
<svg style="left:2px;top:451px" width="28" height="28" viewBox="0 0 28 28"><path d="M4.5 10Q16 8 19.5 24" fill="none" stroke="#000" stroke-width="1.8"/><rect x="7.30" y="7.30" width="3.4" height="3.4" fill="#fff" stroke="#000" stroke-width="1.1"/><rect x="17.40" y="17.40" width="3.4" height="3.4" fill="#fff" stroke="#000" stroke-width="1.1"/></svg>
<svg style="left:30px;top:451px" width="28" height="28" viewBox="0 0 28 28"><path d="M3.5 10.5Q17 9 19.2 24" fill="none" stroke="#000" stroke-width="2"/><path d="M3 4.7H10.9Q21 6 23 16.7V24" fill="none" stroke="#000" stroke-width="0.9" stroke-dasharray="1.2 1.2"/><rect x="9.20" y="3.00" width="3.4" height="3.4" fill="#fff" stroke="#000" stroke-width="1.1"/><rect x="21.30" y="15.00" width="3.4" height="3.4" fill="#fff" stroke="#000" stroke-width="1.1"/><path d="M23 27.5H28V22.5Z" fill="#5a5a5a"/></svg>
<svg style="left:2px;top:479px" width="28" height="28" viewBox="0 0 28 28"><path d="M5 3H22.5L23 8.5L19.5 7.5H16.5V19.5L18.5 21.5H9.5L11.5 19.5V7.5H8.5L5.5 9Z" fill="#5b7ff0" stroke="#111" stroke-width="1" stroke-linejoin="round"/><path d="M5 3H22.5L21 5H6.5Z" fill="#b9c8ff"/></svg>
<svg style="left:30px;top:479px" width="28" height="28" viewBox="0 0 28 28"><rect x="5.5" y="17" width="6" height="5.3" fill="url(#gg1)" stroke="#111" stroke-width="1"/><rect x="17.4" y="4.6" width="6.5" height="5.9" fill="#7d9af5" stroke="#111" stroke-width="1"/><path d="M11.5 17L17 11M13.5 11H17V14.5" fill="none" stroke="#111" stroke-width="1"/><path d="M23 27.5H28V22.5Z" fill="#5a5a5a"/></svg>
<svg style="left:2px;top:507px" width="28" height="28" viewBox="0 0 28 28"><rect x="5.1" y="4.4" width="6" height="5.8" fill="#7d9af5" stroke="#111" stroke-width="1"/><rect x="15.5" y="7.5" width="6" height="5.8" fill="#7d9af5" stroke="#111" stroke-width="1"/><rect x="11.5" y="10.5" width="6" height="5.8" fill="#7d9af5" stroke="#111" stroke-width="1"/><rect x="5.1" y="15" width="6" height="5.8" fill="url(#gg1)" stroke="#111" stroke-width="1"/><rect x="15.5" y="18" width="6" height="5.8" fill="#7d9af5" stroke="#111" stroke-width="1"/></svg>
<svg style="left:30px;top:507px" width="28" height="28" viewBox="0 0 28 28"><rect x="3.8" y="4.4" width="4.7" height="13.6" fill="url(#gg1)" stroke="#111" stroke-width="1"/><path d="M11.5 20.5L22 10L25 13.5L14.5 24Z" fill="#5b7ff0" stroke="#111" stroke-width="1"/><path d="M9 6Q17 5 18.5 10.5M16 8.5L18.5 10.5L20 7.5" fill="none" stroke="#111" stroke-width="1"/></svg>
<svg style="left:2px;top:535px" width="28" height="28" viewBox="0 0 28 28"><path d="M5 8L13 4L21 8V19L13 23L5 19Z" fill="#5b7ff0" stroke="#111" stroke-width="1"/><path d="M5 8L13 4L21 8L13 12Z" fill="#a9bcfa"/><path d="M13 12L21 8V19L13 23Z" fill="#3350c4"/><path d="M9.5 16L13 14.5L16.5 16.5V22L13 23.5L9.5 22Z" fill="#fff" stroke="#111" stroke-width="0.8"/><path d="M23 27.5H28V22.5Z" fill="#5a5a5a"/></svg>
<svg style="left:30px;top:535px" width="28" height="28" viewBox="0 0 28 28"><path d="M3.8 20.2L8 15.5H25.1L21 20.2Z" fill="#6a8bf2" stroke="#111" stroke-width="1"/><path d="M9 16V7M14.5 16V7M20 16V7" stroke="#9a9290" stroke-width="1.6"/><path d="M7 8.5L9 5.5L11 8.5M12.5 8.5L14.5 5.5L16.5 8.5M18 8.5L20 5.5L22 8.5" fill="#9a9290" stroke="#9a9290" stroke-width="0.8"/><path d="M23 27.5H28V22.5Z" fill="#5a5a5a"/></svg>
<svg style="left:2px;top:563px" width="28" height="28" viewBox="0 0 28 28"><rect x="4.5" y="4.1" width="4.2" height="4.2" fill="#7d9af5" stroke="#111" stroke-width="1"/><rect x="4.5" y="11.2" width="4.2" height="4.2" fill="#7d9af5" stroke="#111" stroke-width="1"/><rect x="4.5" y="18.3" width="4.2" height="4.2" fill="#fff" stroke="#111" stroke-width="1"/><rect x="11.6" y="4.1" width="4.2" height="4.2" fill="#7d9af5" stroke="#111" stroke-width="1"/><rect x="11.6" y="11.2" width="4.2" height="4.2" fill="#7d9af5" stroke="#111" stroke-width="1"/><rect x="11.6" y="18.3" width="4.2" height="4.2" fill="#7d9af5" stroke="#111" stroke-width="1"/><rect x="18.1" y="4.1" width="4.2" height="4.2" fill="#7d9af5" stroke="#111" stroke-width="1"/><rect x="18.1" y="11.2" width="4.2" height="4.2" fill="#7d9af5" stroke="#111" stroke-width="1"/><rect x="18.1" y="18.3" width="4.2" height="4.2" fill="#7d9af5" stroke="#111" stroke-width="1"/><path d="M23 27.5H28V22.5Z" fill="#5a5a5a"/></svg>
<svg style="left:30px;top:563px" width="28" height="28" viewBox="0 0 28 28"><rect x="9.1" y="4.1" width="9.5" height="5.3" fill="url(#gg1)" stroke="#111" stroke-width="1"/><rect x="11.5" y="11.2" width="4.7" height="4.8" fill="#fff" stroke="#111" stroke-width="1"/><rect x="10.3" y="17.1" width="7.1" height="5.9" fill="url(#gg1)" stroke="#111" stroke-width="1"/><path d="M13.8 3V24.5" stroke="#e01010" stroke-width="1.1"/><path d="M23 27.5H28V22.5Z" fill="#5a5a5a"/></svg>
<svg style="left:2px;top:591px" width="28" height="28" viewBox="0 0 28 28"><path d="M5 7L10 5L12 18L7 20Z" fill="#f2f2f2" stroke="#111" stroke-width="1"/><path d="M11 9L15 3.5L21.5 5.5L16 21L11.5 19Z" fill="#4a6ef0" stroke="#111" stroke-width="1"/><path d="M15 3.5L21.5 5.5L19.5 8L13.5 6Z" fill="#a9bcfa"/><path d="M23 27.5H28V22.5Z" fill="#5a5a5a"/></svg>
<svg style="left:30px;top:591px" width="28" height="28" viewBox="0 0 28 28"><rect x="9.5" y="1" width="3" height="20" fill="#9bb0f8" stroke="#111" stroke-width="0.9"/><circle cx="5.5" cy="6.5" r="1.8" fill="#000"/><circle cx="18.5" cy="6.5" r="1.8" fill="#000"/><path d="M3.5 9.5L6.5 11L5 15L8 15.5L9 20.5M18.5 9.5L21 12.5L20 15.5L23 18L25 22" fill="none" stroke="#000" stroke-width="1.6"/><path d="M23 27.5H28V22.5Z" fill="#5a5a5a"/></svg>
<svg style="left:2px;top:619px" width="28" height="28" viewBox="0 0 28 28"><path d="M4.5 15.5L9.3 22.5L23.5 4.8L9.3 18Z" fill="#000" stroke="#000" stroke-width="1.4" stroke-linejoin="round"/><path d="M23 27.5H28V22.5Z" fill="#5a5a5a"/></svg>
<svg style="left:30px;top:619px" width="28" height="28" viewBox="0 0 28 28"><path d="M4.5 8L9 5L15 6.5V16L10 19L4.5 16.5Z" fill="url(#gg1)" stroke="#111" stroke-width="1"/><path d="M4.5 8L9 5L15 6.5L10.5 9.5Z" fill="#fafafa" stroke="#111" stroke-width="0.6"/><path d="M16.5 6.5L23 18.5Q20 21 15.5 20L13 18Z" fill="url(#gg1)" stroke="#111" stroke-width="1"/><path d="M23 27.5H28V22.5Z" fill="#5a5a5a"/></svg>
<svg style="left:2px;top:647px" width="28" height="28" viewBox="0 0 28 28"><path d="M12 1.5H16.5V3H18.5V6H16.5V7.5L10.5 7L7.5 9.5L12 4Z" fill="#fff" stroke="#111" stroke-width="0.8"/><path d="M3.5 20L13.5 10.5L20.5 19L13.5 23Z" fill="#f0c040" stroke="#111" stroke-width="1" stroke-linejoin="round"/><path d="M13.5 10.5L20.5 19L13.5 23Z" fill="#c99a20"/><path d="M23 27.5H28V22.5Z" fill="#5a5a5a"/></svg>
<div class="a" style="left:69px;top:135px;width:1645px;height:778px;overflow:hidden">
<svg style="left:0;top:0" width="1645" height="778" viewBox="69 135 1645 778">
<g shape-rendering="crispEdges">
<rect x="95" y="135" width="1" height="778" fill="#80858e"/>
<rect x="142" y="135" width="1" height="778" fill="#959ba3"/>
<rect x="190" y="135" width="1" height="778" fill="#959ba3"/>
<rect x="237" y="135" width="1" height="778" fill="#959ba3"/>
<rect x="285" y="135" width="1" height="778" fill="#959ba3"/>
<rect x="332" y="135" width="1" height="778" fill="#80858e"/>
<rect x="379" y="135" width="1" height="778" fill="#959ba3"/>
<rect x="427" y="135" width="1" height="778" fill="#959ba3"/>
<rect x="474" y="135" width="1" height="778" fill="#959ba3"/>
<rect x="522" y="135" width="1" height="778" fill="#959ba3"/>
<rect x="569" y="135" width="1" height="778" fill="#80858e"/>
<rect x="617" y="135" width="1" height="778" fill="#959ba3"/>
<rect x="664" y="135" width="1" height="778" fill="#959ba3"/>
<rect x="712" y="135" width="1" height="778" fill="#959ba3"/>
<rect x="759" y="135" width="1" height="778" fill="#959ba3"/>
<rect x="807" y="135" width="1" height="778" fill="#80858e"/>
<rect x="854" y="135" width="1" height="778" fill="#959ba3"/>
<rect x="902" y="135" width="1" height="778" fill="#959ba3"/>
<rect x="949" y="135" width="1" height="778" fill="#959ba3"/>
<rect x="997" y="135" width="1" height="778" fill="#959ba3"/>
<rect x="1044" y="135" width="1" height="778" fill="#80858e"/>
<rect x="1092" y="135" width="1" height="778" fill="#959ba3"/>
<rect x="1139" y="135" width="1" height="778" fill="#959ba3"/>
<rect x="1187" y="135" width="1" height="778" fill="#959ba3"/>
<rect x="1234" y="135" width="1" height="778" fill="#959ba3"/>
<rect x="1282" y="135" width="1" height="778" fill="#80858e"/>
<rect x="1329" y="135" width="1" height="778" fill="#959ba3"/>
<rect x="1377" y="135" width="1" height="778" fill="#959ba3"/>
<rect x="1424" y="135" width="1" height="778" fill="#959ba3"/>
<rect x="1472" y="135" width="1" height="778" fill="#959ba3"/>
<rect x="1519" y="135" width="1" height="778" fill="#80858e"/>
<rect x="1566" y="135" width="1" height="778" fill="#959ba3"/>
<rect x="1614" y="135" width="1" height="778" fill="#959ba3"/>
<rect x="1661" y="135" width="1" height="778" fill="#959ba3"/>
<rect x="1709" y="135" width="1" height="778" fill="#959ba3"/>
<rect x="69" y="135" width="1645" height="1" fill="#959ba3"/>
<rect x="69" y="183" width="1645" height="1" fill="#959ba3"/>
<rect x="69" y="230" width="1645" height="1" fill="#959ba3"/>
<rect x="69" y="278" width="1645" height="1" fill="#80858e"/>
<rect x="69" y="325" width="1645" height="1" fill="#959ba3"/>
<rect x="69" y="373" width="1645" height="1" fill="#959ba3"/>
<rect x="69" y="420" width="1645" height="1" fill="#959ba3"/>
<rect x="69" y="468" width="1645" height="1" fill="#959ba3"/>
<rect x="69" y="515" width="1645" height="1" fill="#80858e"/>
<rect x="69" y="562" width="1645" height="1" fill="#959ba3"/>
<rect x="69" y="610" width="1645" height="1" fill="#959ba3"/>
<rect x="69" y="657" width="1645" height="1" fill="#959ba3"/>
<rect x="69" y="705" width="1645" height="1" fill="#959ba3"/>
<rect x="69" y="752" width="1645" height="1" fill="#80858e"/>
<rect x="69" y="800" width="1645" height="1" fill="#959ba3"/>
<rect x="69" y="847" width="1645" height="1" fill="#959ba3"/>
<rect x="69" y="895" width="1645" height="1" fill="#959ba3"/>
<rect x="332" y="135" width="2" height="381" fill="#46994a"/>
<rect x="333" y="515" width="1381" height="2" fill="#9b4043"/>
</g>
<g><path d="M423.0 368.0 L422.5 370.0 L422.1 372.0 L421.8 374.0 L421.5 376.0 L421.3 378.0 L421.1 380.0 L420.9 382.0 L420.7 384.0 L420.5 386.0 L420.4 388.0 L420.2 390.0 L420.1 392.0 L420.0 394.0 L419.9 396.0 L419.8 398.0 L419.7 400.0 L419.7 402.0 L419.6 404.0 L419.5 406.0 L419.5 408.0 L419.4 410.0 L419.4 412.0 L419.4 414.0 L419.3 416.0 L419.3 418.0 L419.3 420.0 L419.3 422.0 L419.3 424.0 L419.3 426.0 L419.3 428.0 L419.2 430.0 L419.2 432.0 L419.2 434.0 L419.2 436.0 L419.2 438.0 L419.2 440.0 L419.2 442.0 L419.2 444.0 L419.2 446.0 L419.2 448.0 L419.2 450.0 L419.2 452.0 L419.3 454.0 L419.3 456.0 L419.3 458.0 L419.4 460.0 L419.4 462.0 L419.5 464.0 L419.5 466.0 L419.6 468.0 L419.7 470.0 L419.8 472.0 L419.9 474.0 L420.0 476.0 L420.1 478.0 L420.3 480.0 L420.5 482.0 L420.7 484.0 L420.9 486.0 L421.1 488.0 L421.3 490.0 L421.5 492.0 L421.7 494.0 L422.0 496.0 L422.3 498.0 L422.6 500.0 L422.9 502.0 L423.2 504.0 L423.6 506.0 L424.0 508.0 L424.3 510.0 L424.8 512.0 L425.2 514.0 L425.6 516.0 L426.1 518.0 L426.5 520.0 L427.1 522.0 L427.6 524.0 L428.2 526.0 L428.8 528.0 L429.4 530.0 L430.0 532.0 L430.7 534.0 L431.5 536.0 L432.2 538.0 L433.0 540.0 L433.9 542.0 L434.8 544.0 L435.8 546.0 L436.9 548.0 L438.1 550.0 L439.3 552.0 L440.5 554.0 L441.8 556.0 L443.1 558.0 L444.5 560.0 L445.8 562.0 L447.2 564.0 L448.6 566.0 L450.0 568.0 L451.5 570.0 L453.1 572.0 L454.6 574.0 L456.3 576.0 L457.9 578.0 L459.6 580.0 L461.4 582.0 L463.2 584.0 L465.0 586.0 L466.9 588.0 L468.8 590.0 L470.8 592.0 L472.8 594.0 L474.9 596.0 L477.0 598.0 L479.2 600.0 L481.5 602.0 L483.8 604.0 L486.1 606.0 L488.5 608.0 L491.0 610.0 L493.5 612.0 L496.2 614.0 L498.9 616.0 L501.7 618.0 L504.6 620.0 L507.5 622.0 L510.5 624.0 L513.6 626.0 L516.7 628.0 L519.8 630.0 L522.9 632.0 L526.0 634.0 L529.2 636.0 L532.4 638.0 L535.7 640.0 L539.0 642.0 L542.4 644.0 L545.8 646.0 L549.2 648.0 L552.6 650.0 L556.0 652.0 L559.5 654.0 L562.8 656.0 L566.2 658.0 L569.5 660.0 L572.8 662.0 L576.2 664.0 L579.6 666.0 L582.9 668.0 L586.3 670.0 L589.6 672.0 L592.9 674.0 L596.1 676.0 L599.3 678.0 L602.5 680.0 L605.5 682.0 L608.6 684.0 L611.7 686.0 L614.8 688.0 L617.9 690.0 L620.9 692.0 L623.9 694.0 L626.8 696.0 L629.6 698.0 L632.4 700.0 L635.0 702.0 L637.5 704.0 L639.8 706.0 L642.1 708.0 L644.3 710.0 L646.4 712.0 L648.5 714.0 L650.5 716.0 L652.4 718.0 L654.3 720.0 L656.1 722.0 L657.9 724.0 L659.6 726.0 L661.2 728.0 L662.8 730.0 L664.3 732.0 L665.8 734.0 L667.3 736.0 L668.7 738.0 L670.0 740.0 L671.3 742.0 L672.6 744.0 L673.9 746.0 L675.1 748.0 L676.3 750.0 L677.5 752.0 L678.7 754.0 L679.9 756.0 L681.0 758.0 L682.1 760.0 L683.2 762.0 L684.3 764.0 L685.4 766.0 L686.4 768.0 L687.3 770.0 L688.3 772.0 L689.2 774.0 L690.0 776.0 L690.8 778.0 L691.6 780.0 L692.3 782.0 L693.0 784.0 L693.7 786.0 L694.4 788.0 L695.0 790.0 L695.6 792.0 L696.2 794.0 L696.8 796.0 L697.4 798.0 L697.9 800.0 L698.5 802.0 L699.0 804.0 L699.5 806.0 L700.0 808.0 L700.5 810.0 L700.9 812.0 L701.4 814.0 L701.8 816.0 L702.2 818.0 L702.6 820.0 L703.0 822.0 L703.4 824.0 L703.7 826.0 L704.1 828.0 L704.4 830.0 L704.7 832.0 L705.0 834.0 L705.3 836.0 L705.7 838.0 L706.0 840.0 L706.4 842.0 L706.7 844.0 L707.1 846.0 L707.5 848.0" fill="none" stroke="#000" stroke-width="1"/>
<path d="M663.0 287.0 L671.7 376.0 L671.8 378.0 L672.0 380.0 L672.2 382.0 L672.5 384.0 L672.7 386.0 L673.0 388.0 L673.2 390.0 L673.5 392.0 L673.8 394.0 L674.1 396.0 L674.4 398.0 L674.7 400.0 L675.1 402.0 L675.4 404.0 L675.7 406.0 L676.1 408.0 L676.4 410.0 L676.8 412.0 L677.1 414.0 L677.5 416.0 L677.9 418.0 L678.2 420.0 L678.6 422.0 L679.0 424.0 L679.4 426.0 L679.8 428.0 L680.1 430.0 L680.5 432.0 L680.9 434.0 L681.3 436.0 L681.7 438.0 L682.1 440.0 L682.5 442.0 L682.9 444.0 L683.4 446.0 L683.8 448.0 L684.2 450.0 L684.6 452.0 L685.0 454.0 L685.5 456.0 L685.9 458.0 L686.3 460.0 L686.8 462.0 L687.2 464.0 L687.6 466.0 L688.1 468.0 L688.5 470.0 L689.0 472.0 L689.4 474.0 L689.9 476.0 L690.3 478.0 L690.8 480.0 L691.3 482.0 L691.7 484.0 L692.2 486.0 L692.7 488.0 L693.1 490.0 L693.6 492.0 L694.1 494.0 L694.6 496.0 L695.0 498.0 L695.5 500.0 L696.0 502.0 L696.5 504.0 L697.0 506.0 L697.5 508.0 L698.0 510.0 L698.5 512.0 L699.0 514.0 L699.5 516.0 L700.0 518.0 L700.5 520.0 L701.0 522.0 L701.5 524.0 L702.0 526.0 L702.5 528.0 L703.0 530.0 L703.5 532.0 L704.0 534.0 L704.5 536.0 L705.0 538.0 L705.5 540.0 L706.0 542.0 L706.6 544.0 L707.1 546.0 L707.6 548.0 L708.1 550.0 L708.6 552.0 L709.2 554.0 L709.7 556.0 L710.2 558.0 L710.7 560.0 L711.2 562.0 L711.7 564.0 L712.2 566.0 L712.7 568.0 L713.2 570.0 L713.7 572.0 L714.2 574.0 L714.7 576.0 L715.2 578.0 L715.7 580.0 L716.2 582.0 L716.6 584.0 L717.1 586.0 L717.6 588.0 L718.0 590.0 L718.5 592.0 L718.9 594.0 L719.4 596.0 L719.8 598.0 L720.2 600.0 L720.7 602.0 L721.1 604.0 L721.5 606.0" fill="none" stroke="#000" stroke-width="1"/>
<path d="M618.0 296.0 L628.5 376.0 L628.7 378.0 L628.9 380.0 L629.2 382.0 L629.5 384.0 L629.9 386.0 L630.2 388.0 L630.6 390.0 L631.0 392.0 L631.4 394.0 L631.9 396.0 L632.3 398.0 L632.8 400.0 L633.2 402.0 L633.7 404.0 L634.2 406.0 L634.7 408.0 L635.2 410.0 L635.7 412.0 L636.2 414.0 L636.7 416.0 L637.2 418.0 L637.8 420.0 L638.3 422.0 L638.9 424.0 L639.4 426.0 L640.0 428.0 L640.5 430.0 L641.1 432.0 L641.7 434.0 L642.2 436.0 L642.8 438.0 L643.4 440.0 L644.0 442.0 L644.6 444.0 L645.2 446.0 L645.8 448.0 L646.4 450.0 L647.0 452.0 L647.6 454.0 L648.2 456.0 L648.8 458.0 L649.5 460.0 L650.1 462.0 L650.7 464.0 L651.4 466.0 L652.0 468.0 L652.7 470.0 L653.3 472.0 L654.0 474.0 L654.6 476.0 L655.3 478.0 L656.0 480.0 L656.7 482.0 L657.3 484.0 L658.0 486.0 L658.7 488.0 L659.4 490.0 L660.1 492.0 L660.8 494.0 L661.5 496.0 L662.2 498.0 L663.0 500.0 L663.7 502.0 L664.4 504.0 L665.2 506.0 L665.9 508.0 L666.6 510.0 L667.4 512.0 L668.1 514.0 L668.9 516.0 L669.6 518.0 L670.4 520.0 L671.1 522.0 L671.9 524.0 L672.7 526.0 L673.4 528.0 L674.2 530.0 L675.0 532.0 L675.8 534.0 L676.6 536.0 L677.4 538.0 L678.1 540.0 L678.9 542.0 L679.8 544.0 L680.6 546.0 L681.4 548.0 L682.2 550.0 L683.1 552.0 L683.9 554.0 L684.7 556.0 L685.6 558.0 L686.4 560.0 L687.3 562.0 L688.1 564.0 L688.9 566.0 L689.7 568.0 L690.6 570.0 L691.4 572.0 L692.2 574.0 L693.0 576.0 L693.9 578.0 L694.7 580.0 L695.5 582.0 L696.3 584.0 L697.1 586.0 L697.9 588.0 L698.7 590.0 L699.5 592.0 L700.3 594.0 L701.1 596.0 L701.9 598.0 L702.6 600.0 L703.4 602.0 L704.2 604.0 L704.9 606.0 L705.7 608.0 L706.4 610.0 L707.2 612.0 L707.9 614.0 L708.6 616.0 L709.4 618.0 L710.1 620.0 L710.8 622.0 L711.4 624.0 L712.1 626.0 L712.7 628.0 L713.3 630.0 L713.9 632.0 L714.5 634.0 L715.1 636.0 L715.6 638.0 L716.1 640.0 L716.6 642.0 L717.1 644.0 L717.5 646.0 L718.0 648.0 L718.4 650.0 L718.8 652.0 L719.2 654.0 L719.6 656.0 L720.0 658.0 L720.3 660.0" fill="none" stroke="#000" stroke-width="1"/>
<path d="M577.5 305.0 L587.7 376.0 L587.9 378.0 L588.2 380.0 L588.5 382.0 L588.8 384.0 L589.2 386.0 L589.6 388.0 L590.1 390.0 L590.5 392.0 L591.0 394.0 L591.5 396.0 L592.0 398.0 L592.5 400.0 L593.0 402.0 L593.6 404.0 L594.1 406.0 L594.7 408.0 L595.3 410.0 L595.9 412.0 L596.5 414.0 L597.1 416.0 L597.7 418.0 L598.3 420.0 L598.9 422.0 L599.6 424.0 L600.2 426.0 L600.9 428.0 L601.5 430.0 L602.2 432.0 L602.8 434.0 L603.5 436.0 L604.2 438.0 L604.8 440.0 L605.5 442.0 L606.2 444.0 L606.9 446.0 L607.6 448.0 L608.3 450.0 L609.0 452.0 L609.7 454.0 L610.5 456.0 L611.2 458.0 L611.9 460.0 L612.7 462.0 L613.4 464.0 L614.2 466.0 L614.9 468.0 L615.7 470.0 L616.4 472.0 L617.2 474.0 L618.0 476.0 L618.8 478.0 L619.6 480.0 L620.4 482.0 L621.2 484.0 L622.0 486.0 L622.9 488.0 L623.7 490.0 L624.5 492.0 L625.4 494.0 L626.2 496.0 L627.1 498.0 L627.9 500.0 L628.8 502.0 L629.7 504.0 L630.5 506.0 L631.4 508.0 L632.3 510.0 L633.2 512.0 L634.1 514.0 L635.0 516.0 L635.9 518.0 L636.9 520.0 L637.8 522.0 L638.7 524.0 L639.7 526.0 L640.6 528.0 L641.6 530.0 L642.5 532.0 L643.5 534.0 L644.5 536.0 L645.5 538.0 L646.5 540.0 L647.5 542.0 L648.5 544.0 L649.5 546.0 L650.6 548.0 L651.7 550.0 L652.7 552.0 L653.8 554.0 L654.9 556.0 L656.0 558.0 L657.1 560.0 L658.2 562.0 L659.2 564.0 L660.3 566.0 L661.4 568.0 L662.5 570.0 L663.6 572.0 L664.7 574.0 L665.8 576.0 L666.9 578.0 L668.0 580.0 L669.1 582.0 L670.2 584.0 L671.3 586.0 L672.4 588.0 L673.5 590.0 L674.6 592.0 L675.7 594.0 L676.7 596.0 L677.8 598.0 L678.9 600.0 L680.0 602.0 L681.1 604.0 L682.2 606.0 L683.3 608.0 L684.4 610.0 L685.4 612.0 L686.5 614.0 L687.6 616.0 L688.7 618.0 L689.7 620.0 L690.8 622.0 L691.8 624.0 L692.9 626.0 L693.9 628.0 L694.8 630.0 L695.8 632.0 L696.8 634.0 L697.7 636.0 L698.6 638.0 L699.5 640.0 L700.4 642.0 L701.2 644.0 L702.1 646.0 L702.9 648.0 L703.7 650.0 L704.5 652.0 L705.3 654.0 L706.0 656.0 L706.7 658.0 L707.4 660.0 L708.1 662.0 L708.8 664.0 L709.4 666.0 L710.0 668.0 L710.6 670.0 L711.2 672.0 L711.7 674.0 L712.2 676.0 L712.7 678.0 L713.2 680.0 L713.7 682.0 L714.1 684.0 L714.5 686.0 L714.9 688.0 L715.3 690.0 L715.6 692.0 L716.0 694.0 L716.3 696.0 L716.6 698.0 L716.8 700.0 L717.1 702.0 L717.3 704.0 L717.5 706.0 L717.7 708.0 L717.9 710.0 L718.1 712.0 L718.3 714.0" fill="none" stroke="#000" stroke-width="1"/>
<path d="M541.9 313.2 L551.4 376.0 L551.6 378.0 L551.9 380.0 L552.2 382.0 L552.6 384.0 L553.0 386.0 L553.4 388.0 L553.9 390.0 L554.4 392.0 L554.9 394.0 L555.4 396.0 L556.0 398.0 L556.5 400.0 L557.1 402.0 L557.7 404.0 L558.3 406.0 L558.9 408.0 L559.5 410.0 L560.2 412.0 L560.8 414.0 L561.5 416.0 L562.2 418.0 L562.8 420.0 L563.5 422.0 L564.2 424.0 L564.9 426.0 L565.6 428.0 L566.3 430.0 L567.1 432.0 L567.8 434.0 L568.5 436.0 L569.3 438.0 L570.0 440.0 L570.7 442.0 L571.5 444.0 L572.3 446.0 L573.0 448.0 L573.8 450.0 L574.6 452.0 L575.4 454.0 L576.2 456.0 L577.0 458.0 L577.8 460.0 L578.6 462.0 L579.4 464.0 L580.2 466.0 L581.0 468.0 L581.9 470.0 L582.7 472.0 L583.6 474.0 L584.5 476.0 L585.3 478.0 L586.2 480.0 L587.1 482.0 L588.0 484.0 L589.0 486.0 L589.9 488.0 L590.8 490.0 L591.7 492.0 L592.7 494.0 L593.6 496.0 L594.6 498.0 L595.5 500.0 L596.5 502.0 L597.5 504.0 L598.5 506.0 L599.5 508.0 L600.5 510.0 L601.5 512.0 L602.5 514.0 L603.6 516.0 L604.6 518.0 L605.6 520.0 L606.7 522.0 L607.8 524.0 L608.8 526.0 L609.9 528.0 L611.0 530.0 L612.1 532.0 L613.3 534.0 L614.4 536.0 L615.5 538.0 L616.7 540.0 L617.8 542.0 L619.0 544.0 L620.3 546.0 L621.5 548.0 L622.8 550.0 L624.0 552.0 L625.3 554.0 L626.6 556.0 L627.9 558.0 L629.2 560.0 L630.5 562.0 L631.8 564.0 L633.1 566.0 L634.4 568.0 L635.7 570.0 L637.0 572.0 L638.3 574.0 L639.6 576.0 L641.0 578.0 L642.3 580.0 L643.7 582.0 L645.0 584.0 L646.3 586.0 L647.7 588.0 L649.0 590.0 L650.4 592.0 L651.8 594.0 L653.1 596.0 L654.5 598.0 L655.9 600.0 L657.2 602.0 L658.6 604.0 L660.0 606.0 L661.3 608.0 L662.7 610.0 L664.1 612.0 L665.5 614.0 L666.9 616.0 L668.3 618.0 L669.7 620.0 L671.1 622.0 L672.4 624.0 L673.8 626.0 L675.1 628.0 L676.5 630.0 L677.8 632.0 L679.1 634.0 L680.3 636.0 L681.6 638.0 L682.9 640.0 L684.1 642.0 L685.3 644.0 L686.5 646.0 L687.7 648.0 L688.9 650.0 L690.0 652.0 L691.1 654.0 L692.2 656.0 L693.3 658.0 L694.3 660.0 L695.3 662.0 L696.3 664.0 L697.3 666.0 L698.3 668.0 L699.2 670.0 L700.1 672.0 L700.9 674.0 L701.8 676.0 L702.6 678.0 L703.4 680.0 L704.1 682.0 L704.8 684.0 L705.6 686.0 L706.2 688.0 L706.9 690.0 L707.5 692.0 L708.2 694.0 L708.7 696.0 L709.3 698.0 L709.8 700.0 L710.3 702.0 L710.8 704.0 L711.2 706.0 L711.6 708.0 L712.0 710.0 L712.4 712.0 L712.7 714.0 L713.1 716.0 L713.4 718.0 L713.7 720.0 L714.0 722.0 L714.2 724.0 L714.5 726.0 L714.7 728.0 L714.9 730.0 L715.1 732.0 L715.3 734.0 L715.5 736.0 L715.6 738.0 L715.8 740.0 L715.9 742.0 L716.0 744.0 L716.1 746.0 L716.2 748.0 L716.3 750.0 L716.4 752.0 L716.4 754.0 L716.5 756.0 L716.5 758.0" fill="none" stroke="#000" stroke-width="1"/>
<path d="M512.2 321.1 L519.0 376.0 L519.2 378.0 L519.4 380.0 L519.8 382.0 L520.2 384.0 L520.6 386.0 L521.0 388.0 L521.5 390.0 L522.0 392.0 L522.5 394.0 L523.0 396.0 L523.6 398.0 L524.2 400.0 L524.8 402.0 L525.4 404.0 L526.0 406.0 L526.7 408.0 L527.3 410.0 L528.0 412.0 L528.7 414.0 L529.3 416.0 L530.0 418.0 L530.7 420.0 L531.5 422.0 L532.2 424.0 L532.9 426.0 L533.7 428.0 L534.4 430.0 L535.1 432.0 L535.9 434.0 L536.7 436.0 L537.4 438.0 L538.2 440.0 L539.0 442.0 L539.8 444.0 L540.6 446.0 L541.4 448.0 L542.2 450.0 L543.0 452.0 L543.8 454.0 L544.6 456.0 L545.5 458.0 L546.3 460.0 L547.2 462.0 L548.0 464.0 L548.9 466.0 L549.7 468.0 L550.6 470.0 L551.5 472.0 L552.4 474.0 L553.3 476.0 L554.3 478.0 L555.2 480.0 L556.2 482.0 L557.1 484.0 L558.1 486.0 L559.1 488.0 L560.1 490.0 L561.0 492.0 L562.0 494.0 L563.0 496.0 L564.1 498.0 L565.1 500.0 L566.1 502.0 L567.2 504.0 L568.3 506.0 L569.3 508.0 L570.4 510.0 L571.5 512.0 L572.6 514.0 L573.7 516.0 L574.8 518.0 L576.0 520.0 L577.1 522.0 L578.3 524.0 L579.4 526.0 L580.6 528.0 L581.8 530.0 L583.0 532.0 L584.3 534.0 L585.5 536.0 L586.7 538.0 L588.0 540.0 L589.3 542.0 L590.6 544.0 L592.0 546.0 L593.4 548.0 L594.8 550.0 L596.2 552.0 L597.7 554.0 L599.1 556.0 L600.6 558.0 L602.0 560.0 L603.5 562.0 L604.9 564.0 L606.4 566.0 L607.9 568.0 L609.4 570.0 L610.9 572.0 L612.4 574.0 L613.9 576.0 L615.4 578.0 L617.0 580.0 L618.5 582.0 L620.1 584.0 L621.6 586.0 L623.2 588.0 L624.8 590.0 L626.3 592.0 L627.9 594.0 L629.5 596.0 L631.1 598.0 L632.7 600.0 L634.4 602.0 L636.0 604.0 L637.6 606.0 L639.2 608.0 L640.9 610.0 L642.5 612.0 L644.2 614.0 L645.9 616.0 L647.6 618.0 L649.3 620.0 L651.0 622.0 L652.7 624.0 L654.3 626.0 L656.0 628.0 L657.7 630.0 L659.3 632.0 L660.9 634.0 L662.5 636.0 L664.1 638.0 L665.7 640.0 L667.3 642.0 L668.8 644.0 L670.4 646.0 L671.9 648.0 L673.4 650.0 L674.9 652.0 L676.3 654.0 L677.8 656.0 L679.2 658.0 L680.5 660.0 L681.9 662.0 L683.2 664.0 L684.5 666.0 L685.8 668.0 L687.1 670.0 L688.3 672.0 L689.5 674.0 L690.6 676.0 L691.7 678.0 L692.8 680.0 L693.9 682.0 L694.9 684.0 L695.9 686.0 L696.9 688.0 L697.9 690.0 L698.8 692.0 L699.7 694.0 L700.5 696.0 L701.4 698.0 L702.2 700.0 L702.9 702.0 L703.6 704.0 L704.3 706.0 L704.9 708.0 L705.5 710.0 L706.1 712.0 L706.6 714.0 L707.2 716.0 L707.7 718.0 L708.1 720.0 L708.6 722.0 L709.0 724.0 L709.4 726.0 L709.8 728.0 L710.2 730.0 L710.5 732.0 L710.8 734.0 L711.2 736.0 L711.4 738.0 L711.7 740.0 L712.0 742.0 L712.2 744.0 L712.4 746.0 L712.7 748.0 L712.9 750.0 L713.0 752.0 L713.2 754.0 L713.4 756.0 L713.5 758.0 L713.6 760.0 L713.8 762.0 L713.9 764.0 L714.0 766.0 L714.0 768.0 L714.1 770.0 L714.1 772.0 L714.2 774.0 L714.2 776.0 L714.2 778.0 L714.2 780.0 L714.2 782.0 L714.2 784.0 L714.2 786.0 L714.2 788.0 L714.1 790.0 L714.1 792.0 L714.0 794.0 L714.0 796.0 L713.9 798.0" fill="none" stroke="#000" stroke-width="1"/>
<path d="M486.9 328.7 L491.4 376.0 L491.6 378.0 L491.8 380.0 L492.1 382.0 L492.5 384.0 L492.9 386.0 L493.3 388.0 L493.7 390.0 L494.2 392.0 L494.7 394.0 L495.3 396.0 L495.8 398.0 L496.4 400.0 L497.0 402.0 L497.6 404.0 L498.2 406.0 L498.8 408.0 L499.5 410.0 L500.1 412.0 L500.8 414.0 L501.5 416.0 L502.2 418.0 L502.9 420.0 L503.6 422.0 L504.3 424.0 L505.0 426.0 L505.8 428.0 L506.5 430.0 L507.3 432.0 L508.0 434.0 L508.8 436.0 L509.5 438.0 L510.3 440.0 L511.1 442.0 L511.9 444.0 L512.6 446.0 L513.4 448.0 L514.2 450.0 L515.1 452.0 L515.9 454.0 L516.7 456.0 L517.6 458.0 L518.4 460.0 L519.3 462.0 L520.1 464.0 L521.0 466.0 L521.8 468.0 L522.7 470.0 L523.6 472.0 L524.5 474.0 L525.5 476.0 L526.4 478.0 L527.4 480.0 L528.3 482.0 L529.3 484.0 L530.3 486.0 L531.3 488.0 L532.3 490.0 L533.3 492.0 L534.3 494.0 L535.3 496.0 L536.3 498.0 L537.4 500.0 L538.5 502.0 L539.6 504.0 L540.7 506.0 L541.8 508.0 L542.9 510.0 L544.0 512.0 L545.1 514.0 L546.3 516.0 L547.4 518.0 L548.6 520.0 L549.8 522.0 L551.0 524.0 L552.2 526.0 L553.5 528.0 L554.7 530.0 L556.0 532.0 L557.3 534.0 L558.6 536.0 L559.9 538.0 L561.2 540.0 L562.6 542.0 L564.0 544.0 L565.4 546.0 L566.9 548.0 L568.4 550.0 L570.0 552.0 L571.5 554.0 L573.1 556.0 L574.7 558.0 L576.3 560.0 L577.8 562.0 L579.4 564.0 L581.0 566.0 L582.6 568.0 L584.3 570.0 L585.9 572.0 L587.5 574.0 L589.2 576.0 L590.9 578.0 L592.6 580.0 L594.3 582.0 L596.0 584.0 L597.7 586.0 L599.5 588.0 L601.2 590.0 L603.0 592.0 L604.7 594.0 L606.5 596.0 L608.3 598.0 L610.1 600.0 L612.0 602.0 L613.8 604.0 L615.6 606.0 L617.5 608.0 L619.4 610.0 L621.2 612.0 L623.1 614.0 L625.1 616.0 L627.0 618.0 L629.0 620.0 L631.0 622.0 L632.9 624.0 L634.9 626.0 L636.9 628.0 L638.8 630.0 L640.7 632.0 L642.6 634.0 L644.5 636.0 L646.4 638.0 L648.3 640.0 L650.2 642.0 L652.1 644.0 L654.0 646.0 L655.8 648.0 L657.6 650.0 L659.5 652.0 L661.2 654.0 L663.0 656.0 L664.7 658.0 L666.4 660.0 L668.1 662.0 L669.7 664.0 L671.3 666.0 L672.9 668.0 L674.5 670.0 L676.0 672.0 L677.5 674.0 L679.0 676.0 L680.4 678.0 L681.8 680.0 L683.2 682.0 L684.5 684.0 L685.8 686.0 L687.1 688.0 L688.3 690.0 L689.5 692.0 L690.7 694.0 L691.9 696.0 L693.0 698.0 L694.0 700.0 L695.0 702.0 L696.0 704.0 L696.8 706.0 L697.7 708.0 L698.5 710.0 L699.3 712.0 L700.0 714.0 L700.8 716.0 L701.4 718.0 L702.1 720.0 L702.7 722.0 L703.3 724.0 L703.9 726.0 L704.5 728.0 L705.0 730.0 L705.5 732.0 L705.9 734.0 L706.4 736.0 L706.8 738.0 L707.2 740.0 L707.6 742.0 L708.0 744.0 L708.4 746.0 L708.7 748.0 L709.0 750.0 L709.3 752.0 L709.6 754.0 L709.9 756.0 L710.1 758.0 L710.4 760.0 L710.6 762.0 L710.8 764.0 L711.0 766.0 L711.2 768.0 L711.4 770.0 L711.5 772.0 L711.7 774.0 L711.8 776.0 L711.9 778.0 L712.0 780.0 L712.1 782.0 L712.1 784.0 L712.2 786.0 L712.2 788.0 L712.3 790.0 L712.3 792.0 L712.3 794.0 L712.3 796.0 L712.3 798.0 L712.3 800.0 L712.3 802.0 L712.3 804.0 L712.2 806.0 L712.2 808.0 L712.2 810.0 L712.1 812.0 L712.1 814.0 L712.0 816.0 L712.0 818.0 L711.9 820.0 L711.8 822.0 L711.6 824.0 L711.5 826.0 L711.3 828.0 L711.1 830.0 L710.9 832.0" fill="none" stroke="#000" stroke-width="1"/>
<path d="M466.4 335.5 L469.2 376.0 L469.3 378.0 L469.5 380.0 L469.8 382.0 L470.1 384.0 L470.4 386.0 L470.8 388.0 L471.1 390.0 L471.6 392.0 L472.0 394.0 L472.5 396.0 L473.0 398.0 L473.5 400.0 L474.0 402.0 L474.6 404.0 L475.1 406.0 L475.7 408.0 L476.3 410.0 L476.9 412.0 L477.5 414.0 L478.1 416.0 L478.7 418.0 L479.4 420.0 L480.0 422.0 L480.7 424.0 L481.3 426.0 L482.0 428.0 L482.7 430.0 L483.3 432.0 L484.0 434.0 L484.7 436.0 L485.4 438.0 L486.1 440.0 L486.8 442.0 L487.5 444.0 L488.2 446.0 L489.0 448.0 L489.7 450.0 L490.4 452.0 L491.2 454.0 L492.0 456.0 L492.7 458.0 L493.5 460.0 L494.3 462.0 L495.1 464.0 L495.9 466.0 L496.7 468.0 L497.5 470.0 L498.3 472.0 L499.2 474.0 L500.0 476.0 L500.9 478.0 L501.8 480.0 L502.7 482.0 L503.6 484.0 L504.5 486.0 L505.5 488.0 L506.4 490.0 L507.3 492.0 L508.3 494.0 L509.3 496.0 L510.3 498.0 L511.3 500.0 L512.3 502.0 L513.3 504.0 L514.4 506.0 L515.4 508.0 L516.5 510.0 L517.6 512.0 L518.7 514.0 L519.8 516.0 L520.9 518.0 L522.1 520.0 L523.2 522.0 L524.4 524.0 L525.6 526.0 L526.8 528.0 L528.0 530.0 L529.3 532.0 L530.5 534.0 L531.8 536.0 L533.1 538.0 L534.5 540.0 L535.8 542.0 L537.2 544.0 L538.7 546.0 L540.2 548.0 L541.8 550.0 L543.3 552.0 L544.9 554.0 L546.5 556.0 L548.2 558.0 L549.8 560.0 L551.4 562.0 L553.1 564.0 L554.7 566.0 L556.4 568.0 L558.1 570.0 L559.8 572.0 L561.5 574.0 L563.3 576.0 L565.0 578.0 L566.8 580.0 L568.6 582.0 L570.4 584.0 L572.3 586.0 L574.1 588.0 L576.0 590.0 L577.9 592.0 L579.8 594.0 L581.7 596.0 L583.6 598.0 L585.6 600.0 L587.6 602.0 L589.6 604.0 L591.6 606.0 L593.6 608.0 L595.7 610.0 L597.8 612.0 L599.9 614.0 L602.0 616.0 L604.2 618.0 L606.4 620.0 L608.6 622.0 L610.8 624.0 L613.1 626.0 L615.3 628.0 L617.5 630.0 L619.7 632.0 L621.9 634.0 L624.0 636.0 L626.2 638.0 L628.4 640.0 L630.6 642.0 L632.8 644.0 L635.0 646.0 L637.2 648.0 L639.4 650.0 L641.5 652.0 L643.6 654.0 L645.7 656.0 L647.7 658.0 L649.7 660.0 L651.7 662.0 L653.7 664.0 L655.7 666.0 L657.6 668.0 L659.5 670.0 L661.4 672.0 L663.2 674.0 L665.0 676.0 L666.8 678.0 L668.5 680.0 L670.2 682.0 L671.8 684.0 L673.5 686.0 L675.1 688.0 L676.7 690.0 L678.2 692.0 L679.7 694.0 L681.2 696.0 L682.6 698.0 L683.9 700.0 L685.2 702.0 L686.4 704.0 L687.6 706.0 L688.7 708.0 L689.7 710.0 L690.7 712.0 L691.7 714.0 L692.7 716.0 L693.6 718.0 L694.4 720.0 L695.3 722.0 L696.1 724.0 L696.9 726.0 L697.6 728.0 L698.3 730.0 L699.0 732.0 L699.6 734.0 L700.2 736.0 L700.8 738.0 L701.4 740.0 L702.0 742.0 L702.5 744.0 L703.0 746.0 L703.5 748.0 L703.9 750.0 L704.4 752.0 L704.8 754.0 L705.2 756.0 L705.6 758.0 L706.0 760.0 L706.4 762.0 L706.8 764.0 L707.1 766.0 L707.4 768.0 L707.7 770.0 L708.0 772.0 L708.2 774.0 L708.5 776.0 L708.7 778.0 L708.9 780.0 L709.1 782.0 L709.2 784.0 L709.4 786.0 L709.5 788.0 L709.7 790.0 L709.8 792.0 L709.9 794.0 L710.0 796.0 L710.1 798.0 L710.2 800.0 L710.2 802.0 L710.3 804.0 L710.4 806.0 L710.4 808.0 L710.5 810.0 L710.5 812.0 L710.5 814.0 L710.5 816.0 L710.5 818.0 L710.5 820.0 L710.5 822.0 L710.4 824.0 L710.4 826.0 L710.3 828.0 L710.2 830.0 L710.0 832.0 L709.8 834.0 L709.6 836.0 L709.3 838.0 L709.0 840.0 L708.6 842.0 L708.3 844.0 L707.9 846.0" fill="none" stroke="#000" stroke-width="1"/>
<path d="M450.6 342.1 L451.9 376.0 L451.9 378.0 L452.1 380.0 L452.2 382.0 L452.4 384.0 L452.7 386.0 L452.9 388.0 L453.2 390.0 L453.5 392.0 L453.9 394.0 L454.2 396.0 L454.6 398.0 L455.0 400.0 L455.5 402.0 L455.9 404.0 L456.3 406.0 L456.8 408.0 L457.3 410.0 L457.7 412.0 L458.2 414.0 L458.7 416.0 L459.2 418.0 L459.7 420.0 L460.3 422.0 L460.8 424.0 L461.3 426.0 L461.9 428.0 L462.4 430.0 L463.0 432.0 L463.5 434.0 L464.1 436.0 L464.7 438.0 L465.2 440.0 L465.8 442.0 L466.4 444.0 L467.0 446.0 L467.6 448.0 L468.2 450.0 L468.8 452.0 L469.4 454.0 L470.0 456.0 L470.7 458.0 L471.3 460.0 L472.0 462.0 L472.6 464.0 L473.3 466.0 L474.0 468.0 L474.6 470.0 L475.3 472.0 L476.0 474.0 L476.8 476.0 L477.5 478.0 L478.3 480.0 L479.1 482.0 L479.9 484.0 L480.7 486.0 L481.5 488.0 L482.3 490.0 L483.1 492.0 L483.9 494.0 L484.8 496.0 L485.6 498.0 L486.5 500.0 L487.4 502.0 L488.3 504.0 L489.3 506.0 L490.2 508.0 L491.2 510.0 L492.2 512.0 L493.1 514.0 L494.1 516.0 L495.1 518.0 L496.2 520.0 L497.2 522.0 L498.3 524.0 L499.4 526.0 L500.5 528.0 L501.6 530.0 L502.8 532.0 L504.0 534.0 L505.2 536.0 L506.4 538.0 L507.7 540.0 L509.0 542.0 L510.3 544.0 L511.7 546.0 L513.2 548.0 L514.7 550.0 L516.3 552.0 L517.8 554.0 L519.4 556.0 L521.0 558.0 L522.6 560.0 L524.3 562.0 L525.9 564.0 L527.5 566.0 L529.2 568.0 L530.9 570.0 L532.6 572.0 L534.4 574.0 L536.2 576.0 L537.9 578.0 L539.8 580.0 L541.6 582.0 L543.5 584.0 L545.3 586.0 L547.2 588.0 L549.2 590.0 L551.1 592.0 L553.1 594.0 L555.1 596.0 L557.2 598.0 L559.3 600.0 L561.4 602.0 L563.5 604.0 L565.6 606.0 L567.8 608.0 L570.0 610.0 L572.2 612.0 L574.5 614.0 L576.8 616.0 L579.2 618.0 L581.6 620.0 L584.0 622.0 L586.5 624.0 L588.9 626.0 L591.4 628.0 L593.9 630.0 L596.3 632.0 L598.8 634.0 L601.2 636.0 L603.7 638.0 L606.2 640.0 L608.7 642.0 L611.2 644.0 L613.7 646.0 L616.2 648.0 L618.7 650.0 L621.2 652.0 L623.6 654.0 L626.0 656.0 L628.4 658.0 L630.8 660.0 L633.1 662.0 L635.4 664.0 L637.8 666.0 L640.1 668.0 L642.3 670.0 L644.6 672.0 L646.8 674.0 L648.9 676.0 L651.0 678.0 L653.1 680.0 L655.1 682.0 L657.1 684.0 L659.1 686.0 L661.1 688.0 L663.0 690.0 L664.9 692.0 L666.8 694.0 L668.6 696.0 L670.4 698.0 L672.0 700.0 L673.6 702.0 L675.2 704.0 L676.6 706.0 L678.0 708.0 L679.3 710.0 L680.6 712.0 L681.8 714.0 L683.0 716.0 L684.2 718.0 L685.3 720.0 L686.4 722.0 L687.4 724.0 L688.4 726.0 L689.3 728.0 L690.2 730.0 L691.1 732.0 L692.0 734.0 L692.8 736.0 L693.6 738.0 L694.3 740.0 L695.0 742.0 L695.8 744.0 L696.4 746.0 L697.1 748.0 L697.7 750.0 L698.4 752.0 L699.0 754.0 L699.6 756.0 L700.1 758.0 L700.7 760.0 L701.2 762.0 L701.8 764.0 L702.3 766.0 L702.7 768.0 L703.2 770.0 L703.6 772.0 L704.0 774.0 L704.4 776.0 L704.7 778.0 L705.0 780.0 L705.4 782.0 L705.6 784.0 L705.9 786.0 L706.2 788.0 L706.4 790.0 L706.7 792.0 L706.9 794.0 L707.1 796.0 L707.3 798.0 L707.5 800.0 L707.7 802.0 L707.8 804.0 L708.0 806.0 L708.1 808.0 L708.3 810.0 L708.4 812.0 L708.5 814.0 L708.6 816.0 L708.7 818.0 L708.8 820.0 L708.9 822.0 L708.9 824.0 L708.9 826.0 L708.9 828.0 L708.9 830.0 L708.9 832.0 L708.8 834.0 L708.7 836.0 L708.5 838.0 L708.3 840.0 L708.1 842.0 L707.9 844.0 L707.7 846.0 L707.5 848.0" fill="none" stroke="#000" stroke-width="1"/>
<path d="M439.5 348.0 L440.0 376.0 L440.0 378.0 L440.0 380.0 L440.1 382.0 L440.2 384.0 L440.4 386.0 L440.5 388.0 L440.7 390.0 L440.9 392.0 L441.2 394.0 L441.4 396.0 L441.7 398.0 L442.0 400.0 L442.3 402.0 L442.6 404.0 L443.0 406.0 L443.3 408.0 L443.6 410.0 L444.0 412.0 L444.4 414.0 L444.7 416.0 L445.1 418.0 L445.5 420.0 L445.9 422.0 L446.3 424.0 L446.7 426.0 L447.2 428.0 L447.6 430.0 L448.0 432.0 L448.4 434.0 L448.9 436.0 L449.3 438.0 L449.7 440.0 L450.2 442.0 L450.6 444.0 L451.1 446.0 L451.5 448.0 L452.0 450.0 L452.5 452.0 L453.0 454.0 L453.5 456.0 L454.0 458.0 L454.5 460.0 L455.0 462.0 L455.5 464.0 L456.0 466.0 L456.6 468.0 L457.1 470.0 L457.7 472.0 L458.3 474.0 L458.8 476.0 L459.5 478.0 L460.1 480.0 L460.7 482.0 L461.4 484.0 L462.1 486.0 L462.7 488.0 L463.4 490.0 L464.1 492.0 L464.8 494.0 L465.5 496.0 L466.2 498.0 L467.0 500.0 L467.8 502.0 L468.6 504.0 L469.4 506.0 L470.2 508.0 L471.0 510.0 L471.9 512.0 L472.8 514.0 L473.6 516.0 L474.5 518.0 L475.4 520.0 L476.4 522.0 L477.3 524.0 L478.3 526.0 L479.3 528.0 L480.3 530.0 L481.4 532.0 L482.5 534.0 L483.6 536.0 L484.7 538.0 L485.9 540.0 L487.1 542.0 L488.4 544.0 L489.7 546.0 L491.1 548.0 L492.6 550.0 L494.0 552.0 L495.6 554.0 L497.1 556.0 L498.7 558.0 L500.2 560.0 L501.8 562.0 L503.4 564.0 L505.0 566.0 L506.7 568.0 L508.4 570.0 L510.1 572.0 L511.8 574.0 L513.6 576.0 L515.4 578.0 L517.2 580.0 L519.0 582.0 L520.9 584.0 L522.8 586.0 L524.7 588.0 L526.7 590.0 L528.7 592.0 L530.7 594.0 L532.8 596.0 L534.9 598.0 L537.0 600.0 L539.2 602.0 L541.4 604.0 L543.6 606.0 L545.9 608.0 L548.2 610.0 L550.5 612.0 L552.9 614.0 L555.4 616.0 L557.9 618.0 L560.5 620.0 L563.1 622.0 L565.7 624.0 L568.3 626.0 L571.0 628.0 L573.7 630.0 L576.3 632.0 L579.0 634.0 L581.6 636.0 L584.3 638.0 L587.1 640.0 L589.8 642.0 L592.6 644.0 L595.4 646.0 L598.1 648.0 L600.9 650.0 L603.6 652.0 L606.3 654.0 L609.0 656.0 L611.7 658.0 L614.3 660.0 L616.9 662.0 L619.6 664.0 L622.2 666.0 L624.8 668.0 L627.3 670.0 L629.9 672.0 L632.4 674.0 L634.8 676.0 L637.3 678.0 L639.6 680.0 L641.9 682.0 L644.2 684.0 L646.5 686.0 L648.8 688.0 L651.1 690.0 L653.3 692.0 L655.5 694.0 L657.6 696.0 L659.6 698.0 L661.6 700.0 L663.4 702.0 L665.2 704.0 L666.9 706.0 L668.5 708.0 L670.1 710.0 L671.6 712.0 L673.1 714.0 L674.5 716.0 L675.8 718.0 L677.2 720.0 L678.4 722.0 L679.7 724.0 L680.8 726.0 L682.0 728.0 L683.1 730.0 L684.1 732.0 L685.1 734.0 L686.1 736.0 L687.1 738.0 L688.0 740.0 L688.9 742.0 L689.7 744.0 L690.6 746.0 L691.4 748.0 L692.2 750.0 L693.0 752.0 L693.7 754.0 L694.5 756.0 L695.2 758.0 L695.9 760.0 L696.6 762.0 L697.2 764.0 L697.9 766.0 L698.5 768.0 L699.1 770.0 L699.7 772.0 L700.2 774.0 L700.7 776.0 L701.1 778.0 L701.6 780.0 L702.0 782.0 L702.4 784.0 L702.8 786.0 L703.2 788.0 L703.5 790.0 L703.8 792.0 L704.2 794.0 L704.5 796.0 L704.8 798.0 L705.0 800.0 L705.3 802.0 L705.6 804.0 L705.8 806.0 L706.1 808.0 L706.3 810.0 L706.5 812.0 L706.7 814.0 L706.9 816.0 L707.1 818.0 L707.2 820.0 L707.4 822.0 L707.5 824.0 L707.6 826.0 L707.7 828.0 L707.8 830.0 L707.8 832.0 L707.8 834.0 L707.8 836.0 L707.8 838.0 L707.7 840.0 L707.7 842.0 L707.6 844.0 L707.6 846.0 L707.5 848.0" fill="none" stroke="#000" stroke-width="1"/>
<path d="M432.1 353.2 L431.3 376.0 L431.2 378.0 L431.2 380.0 L431.1 382.0 L431.2 384.0 L431.2 386.0 L431.2 388.0 L431.3 390.0 L431.4 392.0 L431.5 394.0 L431.7 396.0 L431.8 398.0 L432.0 400.0 L432.2 402.0 L432.4 404.0 L432.6 406.0 L432.8 408.0 L433.0 410.0 L433.2 412.0 L433.5 414.0 L433.7 416.0 L433.9 418.0 L434.2 420.0 L434.5 422.0 L434.7 424.0 L435.0 426.0 L435.3 428.0 L435.5 430.0 L435.8 432.0 L436.1 434.0 L436.4 436.0 L436.7 438.0 L437.0 440.0 L437.3 442.0 L437.6 444.0 L437.9 446.0 L438.2 448.0 L438.5 450.0 L438.8 452.0 L439.1 454.0 L439.5 456.0 L439.8 458.0 L440.2 460.0 L440.5 462.0 L440.9 464.0 L441.3 466.0 L441.6 468.0 L442.0 470.0 L442.4 472.0 L442.8 474.0 L443.3 476.0 L443.7 478.0 L444.2 480.0 L444.7 482.0 L445.2 484.0 L445.7 486.0 L446.2 488.0 L446.7 490.0 L447.3 492.0 L447.8 494.0 L448.4 496.0 L449.0 498.0 L449.6 500.0 L450.2 502.0 L450.8 504.0 L451.5 506.0 L452.2 508.0 L452.9 510.0 L453.6 512.0 L454.3 514.0 L455.0 516.0 L455.8 518.0 L456.5 520.0 L457.3 522.0 L458.2 524.0 L459.0 526.0 L459.9 528.0 L460.8 530.0 L461.7 532.0 L462.7 534.0 L463.6 536.0 L464.7 538.0 L465.7 540.0 L466.8 542.0 L468.0 544.0 L469.2 546.0 L470.5 548.0 L471.9 550.0 L473.3 552.0 L474.7 554.0 L476.2 556.0 L477.7 558.0 L479.2 560.0 L480.7 562.0 L482.2 564.0 L483.8 566.0 L485.4 568.0 L487.0 570.0 L488.7 572.0 L490.3 574.0 L492.1 576.0 L493.8 578.0 L495.6 580.0 L497.5 582.0 L499.3 584.0 L501.2 586.0 L503.1 588.0 L505.1 590.0 L507.1 592.0 L509.2 594.0 L511.3 596.0 L513.4 598.0 L515.6 600.0 L517.8 602.0 L520.0 604.0 L522.3 606.0 L524.6 608.0 L527.0 610.0 L529.4 612.0 L531.9 614.0 L534.5 616.0 L537.2 618.0 L539.9 620.0 L542.6 622.0 L545.4 624.0 L548.2 626.0 L551.0 628.0 L553.8 630.0 L556.7 632.0 L559.5 634.0 L562.4 636.0 L565.3 638.0 L568.2 640.0 L571.2 642.0 L574.2 644.0 L577.2 646.0 L580.2 648.0 L583.2 650.0 L586.2 652.0 L589.2 654.0 L592.2 656.0 L595.1 658.0 L598.0 660.0 L600.9 662.0 L603.8 664.0 L606.7 666.0 L609.5 668.0 L612.4 670.0 L615.2 672.0 L618.0 674.0 L620.8 676.0 L623.5 678.0 L626.1 680.0 L628.7 682.0 L631.3 684.0 L633.9 686.0 L636.5 688.0 L639.1 690.0 L641.6 692.0 L644.0 694.0 L646.4 696.0 L648.8 698.0 L651.0 700.0 L653.2 702.0 L655.2 704.0 L657.1 706.0 L659.0 708.0 L660.8 710.0 L662.5 712.0 L664.2 714.0 L665.8 716.0 L667.4 718.0 L668.9 720.0 L670.4 722.0 L671.8 724.0 L673.2 726.0 L674.5 728.0 L675.8 730.0 L677.0 732.0 L678.2 734.0 L679.4 736.0 L680.5 738.0 L681.6 740.0 L682.6 742.0 L683.6 744.0 L684.6 746.0 L685.6 748.0 L686.5 750.0 L687.4 752.0 L688.3 754.0 L689.2 756.0 L690.1 758.0 L691.0 760.0 L691.8 762.0 L692.6 764.0 L693.4 766.0 L694.2 768.0 L694.9 770.0 L695.6 772.0 L696.3 774.0 L696.9 776.0 L697.4 778.0 L698.0 780.0 L698.5 782.0 L699.1 784.0 L699.6 786.0 L700.0 788.0 L700.5 790.0 L700.9 792.0 L701.3 794.0 L701.8 796.0 L702.1 798.0 L702.5 800.0 L702.9 802.0 L703.2 804.0 L703.6 806.0 L703.9 808.0 L704.2 810.0 L704.5 812.0 L704.8 814.0 L705.1 816.0 L705.3 818.0 L705.6 820.0 L705.8 822.0 L706.0 824.0 L706.2 826.0 L706.4 828.0 L706.6 830.0 L706.7 832.0 L706.8 834.0 L706.9 836.0 L707.0 838.0 L707.1 840.0 L707.2 842.0 L707.3 844.0 L707.4 846.0 L707.5 848.0" fill="none" stroke="#000" stroke-width="1"/>
<path d="M428.2 358.0 L427.0 376.0 L426.9 378.0 L426.7 380.0 L426.7 382.0 L426.6 384.0 L426.5 386.0 L426.5 388.0 L426.5 390.0 L426.5 392.0 L426.5 394.0 L426.6 396.0 L426.7 398.0 L426.7 400.0 L426.8 402.0 L426.9 404.0 L427.0 406.0 L427.1 408.0 L427.2 410.0 L427.3 412.0 L427.5 414.0 L427.6 416.0 L427.7 418.0 L427.9 420.0 L428.0 422.0 L428.2 424.0 L428.3 426.0 L428.5 428.0 L428.7 430.0 L428.8 432.0 L429.0 434.0 L429.2 436.0 L429.3 438.0 L429.5 440.0 L429.7 442.0 L429.9 444.0 L430.1 446.0 L430.2 448.0 L430.4 450.0 L430.7 452.0 L430.9 454.0 L431.1 456.0 L431.3 458.0 L431.5 460.0 L431.8 462.0 L432.0 464.0 L432.3 466.0 L432.5 468.0 L432.8 470.0 L433.0 472.0 L433.3 474.0 L433.7 476.0 L434.0 478.0 L434.3 480.0 L434.7 482.0 L435.1 484.0 L435.5 486.0 L435.9 488.0 L436.3 490.0 L436.7 492.0 L437.1 494.0 L437.5 496.0 L438.0 498.0 L438.5 500.0 L439.0 502.0 L439.5 504.0 L440.0 506.0 L440.6 508.0 L441.2 510.0 L441.8 512.0 L442.4 514.0 L443.0 516.0 L443.6 518.0 L444.3 520.0 L445.0 522.0 L445.7 524.0 L446.4 526.0 L447.2 528.0 L448.0 530.0 L448.8 532.0 L449.6 534.0 L450.5 536.0 L451.4 538.0 L452.4 540.0 L453.4 542.0 L454.5 544.0 L455.6 546.0 L456.8 548.0 L458.1 550.0 L459.4 552.0 L460.8 554.0 L462.2 556.0 L463.6 558.0 L465.1 560.0 L466.5 562.0 L468.0 564.0 L469.5 566.0 L471.0 568.0 L472.6 570.0 L474.2 572.0 L475.9 574.0 L477.6 576.0 L479.3 578.0 L481.1 580.0 L482.8 582.0 L484.7 584.0 L486.5 586.0 L488.5 588.0 L490.4 590.0 L492.4 592.0 L494.5 594.0 L496.5 596.0 L498.7 598.0 L500.9 600.0 L503.1 602.0 L505.4 604.0 L507.7 606.0 L510.1 608.0 L512.5 610.0 L514.9 612.0 L517.5 614.0 L520.1 616.0 L522.8 618.0 L525.6 620.0 L528.4 622.0 L531.3 624.0 L534.2 626.0 L537.1 628.0 L540.1 630.0 L543.0 632.0 L546.0 634.0 L549.0 636.0 L552.0 638.0 L555.1 640.0 L558.2 642.0 L561.4 644.0 L564.6 646.0 L567.7 648.0 L570.9 650.0 L574.1 652.0 L577.2 654.0 L580.4 656.0 L583.4 658.0 L586.5 660.0 L589.6 662.0 L592.7 664.0 L595.8 666.0 L598.8 668.0 L601.9 670.0 L604.9 672.0 L607.9 674.0 L610.9 676.0 L613.8 678.0 L616.6 680.0 L619.4 682.0 L622.2 684.0 L625.0 686.0 L627.8 688.0 L630.6 690.0 L633.3 692.0 L636.0 694.0 L638.6 696.0 L641.1 698.0 L643.5 700.0 L645.9 702.0 L648.1 704.0 L650.2 706.0 L652.2 708.0 L654.1 710.0 L656.0 712.0 L657.9 714.0 L659.7 716.0 L661.4 718.0 L663.0 720.0 L664.7 722.0 L666.2 724.0 L667.7 726.0 L669.2 728.0 L670.6 730.0 L671.9 732.0 L673.2 734.0 L674.5 736.0 L675.7 738.0 L676.9 740.0 L678.1 742.0 L679.2 744.0 L680.3 746.0 L681.4 748.0 L682.4 750.0 L683.5 752.0 L684.5 754.0 L685.5 756.0 L686.5 758.0 L687.4 760.0 L688.4 762.0 L689.3 764.0 L690.2 766.0 L691.1 768.0 L691.9 770.0 L692.7 772.0 L693.4 774.0 L694.1 776.0 L694.8 778.0 L695.4 780.0 L696.0 782.0 L696.6 784.0 L697.2 786.0 L697.8 788.0 L698.3 790.0 L698.8 792.0 L699.3 794.0 L699.8 796.0 L700.2 798.0 L700.7 800.0 L701.1 802.0 L701.5 804.0 L701.9 806.0 L702.3 808.0 L702.7 810.0 L703.1 812.0 L703.4 814.0 L703.8 816.0 L704.1 818.0 L704.4 820.0 L704.7 822.0 L705.0 824.0 L705.2 826.0 L705.5 828.0 L705.7 830.0 L705.9 832.0 L706.1 834.0 L706.3 836.0 L706.5 838.0 L706.7 840.0 L706.9 842.0 L707.1 844.0 L707.3 846.0 L707.5 848.0" fill="none" stroke="#000" stroke-width="1"/>
<path d="M425.0 362.0 L424.0 376.0 L423.8 378.0 L423.6 380.0 L423.5 382.0 L423.4 384.0 L423.2 386.0 L423.1 388.0 L423.1 390.0 L423.0 392.0 L422.9 394.0 L422.9 396.0 L422.9 398.0 L422.9 400.0 L422.9 402.0 L422.9 404.0 L422.9 406.0 L422.9 408.0 L422.9 410.0 L423.0 412.0 L423.0 414.0 L423.1 416.0 L423.1 418.0 L423.2 420.0 L423.2 422.0 L423.3 424.0 L423.3 426.0 L423.4 428.0 L423.5 430.0 L423.5 432.0 L423.6 434.0 L423.7 436.0 L423.7 438.0 L423.8 440.0 L423.9 442.0 L424.0 444.0 L424.1 446.0 L424.1 448.0 L424.2 450.0 L424.3 452.0 L424.5 454.0 L424.6 456.0 L424.7 458.0 L424.8 460.0 L424.9 462.0 L425.1 464.0 L425.2 466.0 L425.4 468.0 L425.5 470.0 L425.7 472.0 L425.9 474.0 L426.1 476.0 L426.3 478.0 L426.6 480.0 L426.8 482.0 L427.1 484.0 L427.4 486.0 L427.7 488.0 L428.0 490.0 L428.2 492.0 L428.6 494.0 L428.9 496.0 L429.3 498.0 L429.6 500.0 L430.0 502.0 L430.5 504.0 L430.9 506.0 L431.4 508.0 L431.8 510.0 L432.3 512.0 L432.8 514.0 L433.3 516.0 L433.9 518.0 L434.4 520.0 L435.0 522.0 L435.6 524.0 L436.3 526.0 L436.9 528.0 L437.6 530.0 L438.4 532.0 L439.1 534.0 L439.9 536.0 L440.7 538.0 L441.6 540.0 L442.5 542.0 L443.5 544.0 L444.6 546.0 L445.7 548.0 L447.0 550.0 L448.2 552.0 L449.5 554.0 L450.9 556.0 L452.2 558.0 L453.6 560.0 L455.0 562.0 L456.4 564.0 L457.9 566.0 L459.3 568.0 L460.9 570.0 L462.4 572.0 L464.1 574.0 L465.7 576.0 L467.4 578.0 L469.1 580.0 L470.9 582.0 L472.7 584.0 L474.5 586.0 L476.4 588.0 L478.4 590.0 L480.4 592.0 L482.4 594.0 L484.5 596.0 L486.6 598.0 L488.8 600.0 L491.1 602.0 L493.3 604.0 L495.7 606.0 L498.1 608.0 L500.5 610.0 L503.0 612.0 L505.6 614.0 L508.3 616.0 L511.1 618.0 L513.9 620.0 L516.8 622.0 L519.7 624.0 L522.7 626.0 L525.7 628.0 L528.8 630.0 L531.8 632.0 L534.8 634.0 L537.9 636.0 L541.1 638.0 L544.3 640.0 L547.5 642.0 L550.8 644.0 L554.1 646.0 L557.4 648.0 L560.7 650.0 L564.0 652.0 L567.3 654.0 L570.6 656.0 L573.8 658.0 L577.0 660.0 L580.3 662.0 L583.5 664.0 L586.7 666.0 L590.0 668.0 L593.2 670.0 L596.4 672.0 L599.5 674.0 L602.6 676.0 L605.7 678.0 L608.7 680.0 L611.7 682.0 L614.6 684.0 L617.6 686.0 L620.6 688.0 L623.5 690.0 L626.4 692.0 L629.2 694.0 L632.0 696.0 L634.7 698.0 L637.3 700.0 L639.8 702.0 L642.2 704.0 L644.4 706.0 L646.5 708.0 L648.6 710.0 L650.7 712.0 L652.6 714.0 L654.5 716.0 L656.4 718.0 L658.1 720.0 L659.9 722.0 L661.5 724.0 L663.2 726.0 L664.7 728.0 L666.2 730.0 L667.7 732.0 L669.1 734.0 L670.5 736.0 L671.8 738.0 L673.1 740.0 L674.3 742.0 L675.5 744.0 L676.7 746.0 L677.9 748.0 L679.0 750.0 L680.2 752.0 L681.3 754.0 L682.3 756.0 L683.4 758.0 L684.5 760.0 L685.5 762.0 L686.5 764.0 L687.5 766.0 L688.4 768.0 L689.3 770.0 L690.2 772.0 L691.0 774.0 L691.8 776.0 L692.6 778.0 L693.3 780.0 L694.0 782.0 L694.6 784.0 L695.3 786.0 L695.9 788.0 L696.5 790.0 L697.0 792.0 L697.6 794.0 L698.1 796.0 L698.7 798.0 L699.2 800.0 L699.6 802.0 L700.1 804.0 L700.6 806.0 L701.0 808.0 L701.5 810.0 L701.9 812.0 L702.3 814.0 L702.7 816.0 L703.0 818.0 L703.4 820.0 L703.7 822.0 L704.1 824.0 L704.4 826.0 L704.7 828.0 L705.0 830.0 L705.2 832.0 L705.5 834.0 L705.7 836.0 L706.0 838.0 L706.3 840.0 L706.6 842.0 L706.9 844.0 L707.2 846.0 L707.5 848.0" fill="none" stroke="#000" stroke-width="1"/>
<path d="M423.0 368.0 L422.0 376.0 L421.8 378.0 L421.6 380.0 L421.4 382.0 L421.2 384.0 L421.0 386.0 L420.9 388.0 L420.7 390.0 L420.6 392.0 L420.5 394.0 L420.4 396.0 L420.3 398.0 L420.2 400.0 L420.2 402.0 L420.1 404.0 L420.1 406.0 L420.0 408.0 L420.0 410.0 L419.9 412.0 L419.9 414.0 L419.8 416.0 L419.8 418.0 L419.8 420.0 L419.8 422.0 L419.8 424.0 L419.8 426.0 L419.8 428.0 L419.7 430.0 L419.7 432.0 L419.7 434.0 L419.7 436.0 L419.7 438.0 L419.7 440.0 L419.7 442.0 L419.7 444.0 L419.7 446.0 L419.7 448.0 L419.7 450.0 L419.8 452.0 L419.8 454.0 L419.8 456.0 L419.9 458.0 L419.9 460.0 L419.9 462.0 L420.0 464.0 L420.0 466.0 L420.1 468.0 L420.2 470.0 L420.3 472.0 L420.4 474.0 L420.5 476.0 L420.7 478.0 L420.8 480.0 L421.0 482.0 L421.2 484.0 L421.4 486.0 L421.6 488.0 L421.8 490.0 L422.0 492.0 L422.2 494.0 L422.5 496.0 L422.8 498.0 L423.1 500.0 L423.4 502.0 L423.7 504.0 L424.1 506.0 L424.5 508.0 L424.8 510.0 L425.2 512.0 L425.7 514.0 L426.1 516.0 L426.6 518.0 L427.0 520.0 L427.5 522.0 L428.1 524.0 L428.7 526.0 L429.2 528.0 L429.9 530.0 L430.5 532.0 L431.2 534.0 L431.9 536.0 L432.7 538.0 L433.5 540.0 L434.3 542.0 L435.3 544.0 L436.3 546.0 L437.4 548.0 L438.5 550.0 L439.7 552.0 L441.0 554.0 L442.3 556.0 L443.6 558.0 L444.9 560.0 L446.3 562.0 L447.6 564.0 L449.0 566.0 L450.5 568.0 L452.0 570.0 L453.5 572.0 L455.1 574.0 L456.7 576.0 L458.4 578.0 L460.1 580.0 L461.8 582.0 L463.6 584.0 L465.4 586.0 L467.3 588.0 L469.2 590.0 L471.2 592.0 L473.2 594.0 L475.3 596.0 L477.5 598.0 L479.6 600.0 L481.9 602.0 L484.2 604.0 L486.5 606.0 L488.9 608.0 L491.4 610.0 L493.9 612.0 L496.5 614.0 L499.3 616.0 L502.1 618.0 L504.9 620.0 L507.9 622.0 L510.9 624.0 L513.9 626.0 L517.0 628.0 L520.1 630.0 L523.2 632.0 L526.3 634.0 L529.5 636.0 L532.7 638.0 L536.0 640.0 L539.3 642.0 L542.7 644.0 L546.1 646.0 L549.5 648.0 L552.9 650.0 L556.3 652.0 L559.7 654.0 L563.1 656.0 L566.4 658.0 L569.7 660.0 L573.1 662.0 L576.4 664.0 L579.8 666.0 L583.2 668.0 L586.5 670.0 L589.8 672.0 L593.1 674.0 L596.3 676.0 L599.5 678.0 L602.7 680.0 L605.7 682.0 L608.8 684.0 L611.9 686.0 L615.0 688.0 L618.1 690.0 L621.1 692.0 L624.1 694.0 L627.0 696.0 L629.8 698.0 L632.5 700.0 L635.1 702.0 L637.6 704.0 L639.9 706.0 L642.2 708.0 L644.4 710.0 L646.5 712.0 L648.6 714.0 L650.6 716.0 L652.5 718.0 L654.4 720.0 L656.2 722.0 L658.0 724.0 L659.7 726.0 L661.3 728.0 L662.9 730.0 L664.4 732.0 L665.9 734.0 L667.3 736.0 L668.7 738.0 L670.1 740.0 L671.4 742.0 L672.7 744.0 L674.0 746.0 L675.2 748.0 L676.4 750.0 L677.6 752.0 L678.8 754.0 L679.9 756.0 L681.1 758.0 L682.2 760.0 L683.3 762.0 L684.4 764.0 L685.4 766.0 L686.4 768.0 L687.4 770.0 L688.3 772.0 L689.2 774.0 L690.0 776.0 L690.8 778.0 L691.6 780.0 L692.3 782.0 L693.1 784.0 L693.7 786.0 L694.4 788.0 L695.1 790.0 L695.7 792.0 L696.3 794.0 L696.9 796.0 L697.4 798.0 L698.0 800.0 L698.5 802.0 L699.0 804.0 L699.5 806.0 L700.0 808.0 L700.5 810.0 L700.9 812.0 L701.4 814.0 L701.8 816.0 L702.2 818.0 L702.6 820.0 L703.0 822.0 L703.4 824.0 L703.7 826.0 L704.1 828.0 L704.4 830.0 L704.7 832.0 L705.0 834.0 L705.3 836.0 L705.7 838.0 L706.0 840.0 L706.4 842.0 L706.7 844.0 L707.1 846.0 L707.5 848.0" fill="none" stroke="#000" stroke-width="1"/>
<path d="M534.8 337.4 L543.5 376.0 L543.4 378.0 L543.5 380.0 L543.6 382.0 L543.9 384.0 L544.3 386.0 L544.9 388.0 L545.5 390.0 L546.3 392.0 L547.1 394.0 L548.1 396.0 L549.1 398.0 L550.3 400.0 L551.6 402.0 L552.9 404.0 L554.3 406.0 L555.8 408.0 L557.4 410.0 L559.1 412.0 L560.9 414.0 L562.7 416.0 L564.6 418.0 L566.6 420.0 L568.6 422.0 L570.7 424.0 L572.9 426.0 L575.1 428.0 L577.4 430.0 L579.7 432.0 L582.1 434.0 L584.5 436.0 L587.0 438.0 L589.5 440.0 L592.0 442.0 L594.6 444.0 L597.2 446.0 L599.9 448.0 L602.6 450.0 L605.3 452.0 L608.0 454.0 L610.8 456.0 L613.6 458.0 L616.4 460.0 L619.2 462.0 L622.0 464.0 L624.9 466.0 L627.7 468.0 L630.5 470.0 L633.4 472.0 L636.3 474.0 L639.1 476.0 L642.0 478.0 L644.8 480.0 L647.6 482.0 L650.5 484.0 L653.3 486.0 L656.0 488.0 L658.8 490.0 L661.5 492.0 L664.2 494.0 L666.9 496.0 L669.6 498.0 L672.2 500.0 L674.7 502.0 L677.3 504.0 L679.8 506.0 L682.2 508.0 L684.6 510.0 L686.9 512.0 L689.2 514.0 L691.4 516.0 L693.6 518.0 L695.7 520.0 L697.7 522.0 L699.7 524.0 L701.6 526.0 L703.4 528.0 L705.2 530.0 L706.9 532.0 L708.5 534.0 L710.0 536.0 L711.4 538.0 L712.8 540.0 L714.0 542.0 L715.2 544.0 L716.3 546.0 L717.2 548.0 L718.1 550.0 L718.9 552.0 L719.6 554.0 L720.2 556.0 L720.6 558.0 L721.0 560.0 L721.3 562.0" fill="none" stroke="#000" stroke-width="1"/>
<path d="M506.4 348.0 L514.3 376.0 L514.2 378.0 L514.2 380.0 L514.3 382.0 L514.6 384.0 L514.9 386.0 L515.4 388.0 L515.9 390.0 L516.6 392.0 L517.4 394.0 L518.3 396.0 L519.2 398.0 L520.3 400.0 L521.4 402.0 L522.7 404.0 L524.0 406.0 L525.4 408.0 L526.9 410.0 L528.4 412.0 L530.1 414.0 L531.8 416.0 L533.6 418.0 L535.4 420.0 L537.3 422.0 L539.3 424.0 L541.4 426.0 L543.5 428.0 L545.6 430.0 L547.8 432.0 L550.1 434.0 L552.4 436.0 L554.8 438.0 L557.2 440.0 L559.7 442.0 L562.2 444.0 L564.7 446.0 L567.3 448.0 L569.9 450.0 L572.6 452.0 L575.2 454.0 L578.0 456.0 L580.7 458.0 L583.5 460.0 L586.3 462.0 L589.1 464.0 L592.0 466.0 L594.9 468.0 L597.7 470.0 L600.6 472.0 L603.6 474.0 L606.5 476.0 L609.5 478.0 L612.4 480.0 L615.4 482.0 L618.3 484.0 L621.3 486.0 L624.3 488.0 L627.2 490.0 L630.2 492.0 L633.1 494.0 L636.0 496.0 L638.9 498.0 L641.8 500.0 L644.7 502.0 L647.6 504.0 L650.4 506.0 L653.3 508.0 L656.1 510.0 L658.8 512.0 L661.6 514.0 L664.2 516.0 L666.9 518.0 L669.5 520.0 L672.1 522.0 L674.6 524.0 L677.1 526.0 L679.6 528.0 L682.0 530.0 L684.3 532.0 L686.6 534.0 L688.9 536.0 L691.1 538.0 L693.2 540.0 L695.2 542.0 L697.2 544.0 L699.2 546.0 L701.1 548.0 L702.9 550.0 L704.6 552.0 L706.2 554.0 L707.8 556.0 L709.3 558.0 L710.7 560.0 L712.0 562.0 L713.3 564.0 L714.4 566.0 L715.5 568.0 L716.5 570.0 L717.4 572.0 L718.2 574.0 L718.9 576.0 L719.6 578.0 L720.1 580.0 L720.6 582.0 L720.9 584.0 L721.2 586.0" fill="none" stroke="#000" stroke-width="1"/>
<path d="M486.6 354.8 L492.1 376.0 L492.0 378.0 L491.9 380.0 L491.9 382.0 L492.0 384.0 L492.1 386.0 L492.3 388.0 L492.6 390.0 L492.9 392.0 L493.3 394.0 L493.8 396.0 L494.3 398.0 L494.9 400.0 L495.6 402.0 L496.3 404.0 L497.1 406.0 L497.9 408.0 L498.8 410.0 L499.7 412.0 L500.7 414.0 L501.7 416.0 L502.7 418.0 L503.9 420.0 L505.0 422.0 L506.3 424.0 L507.5 426.0 L508.8 428.0 L510.1 430.0 L511.5 432.0 L512.9 434.0 L514.4 436.0 L515.9 438.0 L517.4 440.0 L519.0 442.0 L520.6 444.0 L522.2 446.0 L523.9 448.0 L525.6 450.0 L527.4 452.0 L529.1 454.0 L531.0 456.0 L532.8 458.0 L534.7 460.0 L536.6 462.0 L538.5 464.0 L540.5 466.0 L542.5 468.0 L544.5 470.0 L546.5 472.0 L548.6 474.0 L550.7 476.0 L552.9 478.0 L555.0 480.0 L557.2 482.0 L559.4 484.0 L561.7 486.0 L563.9 488.0 L566.2 490.0 L568.5 492.0 L570.8 494.0 L573.1 496.0 L575.4 498.0 L577.8 500.0 L580.2 502.0 L582.5 504.0 L584.9 506.0 L587.4 508.0 L589.8 510.0 L592.2 512.0 L594.6 514.0 L597.1 516.0 L599.5 518.0 L602.0 520.0 L604.4 522.0 L606.9 524.0 L609.3 526.0 L611.8 528.0 L614.3 530.0 L616.7 532.0 L619.2 534.0 L621.7 536.0 L624.1 538.0 L626.6 540.0 L629.1 542.0 L631.5 544.0 L634.0 546.0 L636.5 548.0 L638.9 550.0 L641.4 552.0 L643.8 554.0 L646.2 556.0 L648.6 558.0 L651.0 560.0 L653.3 562.0 L655.6 564.0 L657.9 566.0 L660.2 568.0 L662.4 570.0 L664.6 572.0 L666.8 574.0 L668.9 576.0 L671.0 578.0 L673.1 580.0 L675.2 582.0 L677.2 584.0 L679.1 586.0 L681.1 588.0 L683.0 590.0 L684.8 592.0 L686.6 594.0 L688.4 596.0 L690.2 598.0 L691.9 600.0 L693.5 602.0 L695.1 604.0 L696.7 606.0 L698.2 608.0 L699.7 610.0 L701.1 612.0 L702.5 614.0 L703.8 616.0 L705.1 618.0 L706.3 620.0 L707.5 622.0 L708.6 624.0 L709.7 626.0 L710.7 628.0 L711.6 630.0 L712.5 632.0 L713.4 634.0 L714.1 636.0 L714.8 638.0 L715.5 640.0 L716.1 642.0 L716.7 644.0 L717.2 646.0 L717.7 648.0 L718.1 650.0 L718.5 652.0 L718.8 654.0 L719.1 656.0 L719.3 658.0 L719.5 660.0 L719.7 662.0 L719.9 664.0 L720.0 666.0 L720.0 668.0" fill="none" stroke="#000" stroke-width="1"/>
<path d="M470.0 361.0 L472.4 376.0 L472.2 378.0 L472.1 380.0 L472.1 382.0 L472.0 384.0 L472.1 386.0 L472.1 388.0 L472.3 390.0 L472.5 392.0 L472.7 394.0 L473.0 396.0 L473.3 398.0 L473.7 400.0 L474.1 402.0 L474.5 404.0 L475.0 406.0 L475.5 408.0 L476.1 410.0 L476.7 412.0 L477.3 414.0 L478.0 416.0 L478.7 418.0 L479.4 420.0 L480.2 422.0 L481.0 424.0 L481.9 426.0 L482.7 428.0 L483.6 430.0 L484.6 432.0 L485.5 434.0 L486.5 436.0 L487.5 438.0 L488.6 440.0 L489.6 442.0 L490.7 444.0 L491.8 446.0 L493.0 448.0 L494.2 450.0 L495.4 452.0 L496.7 454.0 L497.9 456.0 L499.2 458.0 L500.5 460.0 L501.9 462.0 L503.3 464.0 L504.7 466.0 L506.1 468.0 L507.5 470.0 L509.0 472.0 L510.5 474.0 L512.1 476.0 L513.7 478.0 L515.3 480.0 L516.9 482.0 L518.6 484.0 L520.2 486.0 L521.9 488.0 L523.7 490.0 L525.4 492.0 L527.2 494.0 L528.9 496.0 L530.8 498.0 L532.6 500.0 L534.5 502.0 L536.4 504.0 L538.3 506.0 L540.2 508.0 L542.1 510.0 L544.1 512.0 L546.1 514.0 L548.1 516.0 L550.1 518.0 L552.1 520.0 L554.2 522.0 L556.2 524.0 L558.3 526.0 L560.4 528.0 L562.5 530.0 L564.7 532.0 L566.8 534.0 L569.0 536.0 L571.2 538.0 L573.4 540.0 L575.6 542.0 L577.9 544.0 L580.2 546.0 L582.5 548.0 L584.9 550.0 L587.3 552.0 L589.6 554.0 L592.0 556.0 L594.4 558.0 L596.8 560.0 L599.1 562.0 L601.5 564.0 L603.8 566.0 L606.2 568.0 L608.6 570.0 L610.9 572.0 L613.3 574.0 L615.6 576.0 L618.0 578.0 L620.3 580.0 L622.6 582.0 L625.0 584.0 L627.3 586.0 L629.6 588.0 L631.9 590.0 L634.2 592.0 L636.4 594.0 L638.7 596.0 L641.0 598.0 L643.2 600.0 L645.4 602.0 L647.6 604.0 L649.8 606.0 L652.0 608.0 L654.1 610.0 L656.3 612.0 L658.4 614.0 L660.5 616.0 L662.6 618.0 L664.7 620.0 L666.7 622.0 L668.7 624.0 L670.7 626.0 L672.6 628.0 L674.5 630.0 L676.4 632.0 L678.2 634.0 L679.9 636.0 L681.6 638.0 L683.3 640.0 L685.0 642.0 L686.6 644.0 L688.1 646.0 L689.6 648.0 L691.1 650.0 L692.5 652.0 L693.9 654.0 L695.2 656.0 L696.5 658.0 L697.7 660.0 L698.9 662.0 L700.1 664.0 L701.2 666.0 L702.3 668.0 L703.3 670.0 L704.2 672.0 L705.2 674.0 L706.0 676.0 L706.9 678.0 L707.7 680.0 L708.4 682.0 L709.1 684.0 L709.8 686.0 L710.4 688.0 L711.0 690.0 L711.6 692.0 L712.1 694.0 L712.6 696.0 L713.1 698.0 L713.5 700.0 L713.9 702.0 L714.3 704.0 L714.6 706.0 L714.9 708.0 L715.2 710.0 L715.4 712.0 L715.7 714.0 L715.9 716.0 L716.1 718.0 L716.2 720.0 L716.4 722.0 L716.5 724.0 L716.6 726.0 L716.7 728.0 L716.8 730.0 L716.9 732.0 L716.9 734.0 L717.0 736.0 L717.0 738.0 L717.0 740.0 L717.0 742.0 L717.0 744.0 L717.0 746.0" fill="none" stroke="#000" stroke-width="1"/>
<path d="M456.6 365.5 L457.0 376.0 L456.8 378.0 L456.7 380.0 L456.6 382.0 L456.5 384.0 L456.5 386.0 L456.5 388.0 L456.6 390.0 L456.7 392.0 L456.9 394.0 L457.1 396.0 L457.3 398.0 L457.6 400.0 L457.9 402.0 L458.3 404.0 L458.7 406.0 L459.1 408.0 L459.5 410.0 L460.0 412.0 L460.5 414.0 L461.0 416.0 L461.6 418.0 L462.2 420.0 L462.8 422.0 L463.5 424.0 L464.2 426.0 L464.9 428.0 L465.6 430.0 L466.4 432.0 L467.1 434.0 L467.9 436.0 L468.8 438.0 L469.6 440.0 L470.5 442.0 L471.4 444.0 L472.3 446.0 L473.3 448.0 L474.2 450.0 L475.2 452.0 L476.3 454.0 L477.3 456.0 L478.4 458.0 L479.5 460.0 L480.6 462.0 L481.8 464.0 L483.0 466.0 L484.2 468.0 L485.4 470.0 L486.6 472.0 L487.9 474.0 L489.2 476.0 L490.6 478.0 L491.9 480.0 L493.3 482.0 L494.8 484.0 L496.2 486.0 L497.7 488.0 L499.2 490.0 L500.7 492.0 L502.2 494.0 L503.7 496.0 L505.3 498.0 L506.9 500.0 L508.6 502.0 L510.2 504.0 L511.9 506.0 L513.6 508.0 L515.4 510.0 L517.1 512.0 L518.9 514.0 L520.7 516.0 L522.5 518.0 L524.3 520.0 L526.1 522.0 L528.0 524.0 L529.9 526.0 L531.8 528.0 L533.8 530.0 L535.8 532.0 L537.8 534.0 L539.8 536.0 L541.8 538.0 L543.9 540.0 L546.0 542.0 L548.1 544.0 L550.3 546.0 L552.5 548.0 L554.8 550.0 L557.1 552.0 L559.4 554.0 L561.7 556.0 L564.0 558.0 L566.4 560.0 L568.7 562.0 L571.0 564.0 L573.3 566.0 L575.7 568.0 L578.0 570.0 L580.4 572.0 L582.8 574.0 L585.2 576.0 L587.6 578.0 L589.9 580.0 L592.3 582.0 L594.7 584.0 L597.1 586.0 L599.5 588.0 L601.9 590.0 L604.3 592.0 L606.8 594.0 L609.2 596.0 L611.6 598.0 L614.0 600.0 L616.4 602.0 L618.8 604.0 L621.2 606.0 L623.6 608.0 L626.0 610.0 L628.4 612.0 L630.8 614.0 L633.2 616.0 L635.6 618.0 L638.0 620.0 L640.3 622.0 L642.7 624.0 L645.0 626.0 L647.3 628.0 L649.6 630.0 L651.8 632.0 L654.0 634.0 L656.2 636.0 L658.3 638.0 L660.4 640.0 L662.5 642.0 L664.6 644.0 L666.6 646.0 L668.6 648.0 L670.5 650.0 L672.4 652.0 L674.3 654.0 L676.1 656.0 L677.8 658.0 L679.5 660.0 L681.2 662.0 L682.8 664.0 L684.4 666.0 L685.9 668.0 L687.4 670.0 L688.9 672.0 L690.3 674.0 L691.6 676.0 L692.9 678.0 L694.2 680.0 L695.4 682.0 L696.5 684.0 L697.7 686.0 L698.8 688.0 L699.8 690.0 L700.8 692.0 L701.8 694.0 L702.7 696.0 L703.6 698.0 L704.4 700.0 L705.2 702.0 L705.9 704.0 L706.6 706.0 L707.2 708.0 L707.8 710.0 L708.4 712.0 L708.9 714.0 L709.4 716.0 L709.9 718.0 L710.4 720.0 L710.8 722.0 L711.2 724.0 L711.6 726.0 L711.9 728.0 L712.2 730.0 L712.5 732.0 L712.8 734.0 L713.1 736.0 L713.3 738.0 L713.5 740.0 L713.7 742.0 L713.9 744.0 L714.1 746.0 L714.2 748.0 L714.4 750.0 L714.5 752.0 L714.6 754.0 L714.7 756.0 L714.8 758.0 L714.8 760.0 L714.9 762.0 L714.9 764.0 L714.9 766.0 L714.9 768.0 L714.9 770.0 L714.9 772.0 L714.9 774.0 L714.9 776.0 L714.8 778.0 L714.8 780.0 L714.7 782.0 L714.6 784.0 L714.6 786.0 L714.5 788.0 L714.4 790.0 L714.3 792.0" fill="none" stroke="#000" stroke-width="1"/>
<path d="M445.5 368.7 L445.0 376.0 L444.8 378.0 L444.6 380.0 L444.5 382.0 L444.4 384.0 L444.4 386.0 L444.4 388.0 L444.4 390.0 L444.4 392.0 L444.5 394.0 L444.6 396.0 L444.8 398.0 L445.0 400.0 L445.2 402.0 L445.4 404.0 L445.7 406.0 L446.0 408.0 L446.3 410.0 L446.6 412.0 L447.0 414.0 L447.4 416.0 L447.8 418.0 L448.2 420.0 L448.7 422.0 L449.2 424.0 L449.7 426.0 L450.2 428.0 L450.7 430.0 L451.3 432.0 L451.9 434.0 L452.4 436.0 L453.1 438.0 L453.7 440.0 L454.4 442.0 L455.0 444.0 L455.7 446.0 L456.4 448.0 L457.2 450.0 L457.9 452.0 L458.7 454.0 L459.5 456.0 L460.3 458.0 L461.2 460.0 L462.0 462.0 L462.9 464.0 L463.8 466.0 L464.7 468.0 L465.7 470.0 L466.6 472.0 L467.6 474.0 L468.7 476.0 L469.7 478.0 L470.8 480.0 L471.9 482.0 L473.1 484.0 L474.2 486.0 L475.4 488.0 L476.6 490.0 L477.8 492.0 L479.0 494.0 L480.3 496.0 L481.6 498.0 L482.9 500.0 L484.2 502.0 L485.6 504.0 L487.0 506.0 L488.4 508.0 L489.8 510.0 L491.3 512.0 L492.8 514.0 L494.3 516.0 L495.8 518.0 L497.3 520.0 L498.9 522.0 L500.5 524.0 L502.1 526.0 L503.8 528.0 L505.5 530.0 L507.2 532.0 L508.9 534.0 L510.7 536.0 L512.5 538.0 L514.3 540.0 L516.1 542.0 L518.1 544.0 L520.1 546.0 L522.1 548.0 L524.2 550.0 L526.3 552.0 L528.4 554.0 L530.6 556.0 L532.7 558.0 L534.9 560.0 L537.1 562.0 L539.3 564.0 L541.5 566.0 L543.7 568.0 L545.9 570.0 L548.2 572.0 L550.5 574.0 L552.8 576.0 L555.1 578.0 L557.5 580.0 L559.8 582.0 L562.2 584.0 L564.5 586.0 L566.9 588.0 L569.3 590.0 L571.8 592.0 L574.2 594.0 L576.7 596.0 L579.1 598.0 L581.6 600.0 L584.1 602.0 L586.6 604.0 L589.1 606.0 L591.6 608.0 L594.2 610.0 L596.7 612.0 L599.3 614.0 L601.9 616.0 L604.5 618.0 L607.1 620.0 L609.8 622.0 L612.4 624.0 L615.0 626.0 L617.6 628.0 L620.2 630.0 L622.8 632.0 L625.3 634.0 L627.8 636.0 L630.3 638.0 L632.8 640.0 L635.3 642.0 L637.8 644.0 L640.2 646.0 L642.7 648.0 L645.0 650.0 L647.4 652.0 L649.7 654.0 L651.9 656.0 L654.2 658.0 L656.3 660.0 L658.5 662.0 L660.6 664.0 L662.6 666.0 L664.7 668.0 L666.7 670.0 L668.6 672.0 L670.5 674.0 L672.4 676.0 L674.1 678.0 L675.9 680.0 L677.6 682.0 L679.2 684.0 L680.8 686.0 L682.4 688.0 L684.0 690.0 L685.4 692.0 L686.9 694.0 L688.3 696.0 L689.6 698.0 L690.9 700.0 L692.1 702.0 L693.2 704.0 L694.3 706.0 L695.3 708.0 L696.3 710.0 L697.3 712.0 L698.2 714.0 L699.0 716.0 L699.8 718.0 L700.6 720.0 L701.3 722.0 L702.1 724.0 L702.7 726.0 L703.4 728.0 L704.0 730.0 L704.6 732.0 L705.1 734.0 L705.6 736.0 L706.1 738.0 L706.6 740.0 L707.1 742.0 L707.5 744.0 L707.9 746.0 L708.3 748.0 L708.6 750.0 L709.0 752.0 L709.3 754.0 L709.6 756.0 L709.9 758.0 L710.2 760.0 L710.4 762.0 L710.7 764.0 L710.9 766.0 L711.1 768.0 L711.3 770.0 L711.4 772.0 L711.6 774.0 L711.7 776.0 L711.8 778.0 L711.9 780.0 L712.0 782.0 L712.1 784.0 L712.1 786.0 L712.2 788.0 L712.2 790.0 L712.2 792.0 L712.2 794.0 L712.3 796.0 L712.3 798.0 L712.2 800.0 L712.2 802.0 L712.2 804.0 L712.2 806.0 L712.2 808.0 L712.1 810.0 L712.1 812.0 L712.0 814.0 L712.0 816.0 L711.9 818.0 L711.8 820.0 L711.7 822.0 L711.5 824.0 L711.4 826.0 L711.2 828.0 L711.1 830.0 L710.8 832.0 L710.5 834.0 L710.2 836.0" fill="none" stroke="#000" stroke-width="1"/>
<path d="M437.2 370.0 L437.0 376.0 L436.8 378.0 L436.6 380.0 L436.5 382.0 L436.4 384.0 L436.3 386.0 L436.2 388.0 L436.2 390.0 L436.2 392.0 L436.2 394.0 L436.3 396.0 L436.3 398.0 L436.5 400.0 L436.6 402.0 L436.8 404.0 L436.9 406.0 L437.1 408.0 L437.3 410.0 L437.6 412.0 L437.8 414.0 L438.1 416.0 L438.4 418.0 L438.7 420.0 L439.0 422.0 L439.3 424.0 L439.7 426.0 L440.1 428.0 L440.5 430.0 L440.9 432.0 L441.3 434.0 L441.7 436.0 L442.2 438.0 L442.6 440.0 L443.1 442.0 L443.6 444.0 L444.1 446.0 L444.6 448.0 L445.1 450.0 L445.7 452.0 L446.3 454.0 L446.9 456.0 L447.5 458.0 L448.1 460.0 L448.8 462.0 L449.4 464.0 L450.1 466.0 L450.8 468.0 L451.5 470.0 L452.2 472.0 L453.0 474.0 L453.8 476.0 L454.6 478.0 L455.5 480.0 L456.3 482.0 L457.2 484.0 L458.1 486.0 L459.1 488.0 L460.0 490.0 L460.9 492.0 L461.9 494.0 L462.9 496.0 L464.0 498.0 L465.0 500.0 L466.1 502.0 L467.2 504.0 L468.4 506.0 L469.5 508.0 L470.7 510.0 L471.9 512.0 L473.1 514.0 L474.3 516.0 L475.6 518.0 L476.9 520.0 L478.2 522.0 L479.6 524.0 L480.9 526.0 L482.3 528.0 L483.8 530.0 L485.2 532.0 L486.7 534.0 L488.2 536.0 L489.8 538.0 L491.4 540.0 L493.0 542.0 L494.7 544.0 L496.5 546.0 L498.3 548.0 L500.2 550.0 L502.1 552.0 L504.0 554.0 L506.0 556.0 L508.0 558.0 L510.0 560.0 L512.0 562.0 L514.1 564.0 L516.1 566.0 L518.2 568.0 L520.3 570.0 L522.4 572.0 L524.6 574.0 L526.8 576.0 L529.0 578.0 L531.2 580.0 L533.4 582.0 L535.7 584.0 L538.0 586.0 L540.3 588.0 L542.7 590.0 L545.1 592.0 L547.5 594.0 L549.9 596.0 L552.3 598.0 L554.8 600.0 L557.3 602.0 L559.8 604.0 L562.4 606.0 L564.9 608.0 L567.5 610.0 L570.1 612.0 L572.8 614.0 L575.5 616.0 L578.2 618.0 L581.0 620.0 L583.8 622.0 L586.6 624.0 L589.4 626.0 L592.2 628.0 L595.0 630.0 L597.7 632.0 L600.5 634.0 L603.2 636.0 L606.0 638.0 L608.7 640.0 L611.5 642.0 L614.3 644.0 L617.0 646.0 L619.7 648.0 L622.5 650.0 L625.1 652.0 L627.8 654.0 L630.4 656.0 L632.9 658.0 L635.4 660.0 L637.9 662.0 L640.4 664.0 L642.8 666.0 L645.2 668.0 L647.6 670.0 L650.0 672.0 L652.2 674.0 L654.5 676.0 L656.6 678.0 L658.8 680.0 L660.8 682.0 L662.9 684.0 L664.9 686.0 L666.9 688.0 L668.8 690.0 L670.7 692.0 L672.6 694.0 L674.4 696.0 L676.1 698.0 L677.7 700.0 L679.3 702.0 L680.8 704.0 L682.2 706.0 L683.5 708.0 L684.8 710.0 L686.1 712.0 L687.3 714.0 L688.4 716.0 L689.5 718.0 L690.6 720.0 L691.6 722.0 L692.6 724.0 L693.5 726.0 L694.4 728.0 L695.3 730.0 L696.1 732.0 L696.9 734.0 L697.6 736.0 L698.3 738.0 L699.0 740.0 L699.7 742.0 L700.3 744.0 L701.0 746.0 L701.5 748.0 L702.1 750.0 L702.7 752.0 L703.2 754.0 L703.7 756.0 L704.2 758.0 L704.7 760.0 L705.1 762.0 L705.5 764.0 L705.9 766.0 L706.3 768.0 L706.7 770.0 L707.0 772.0 L707.3 774.0 L707.6 776.0 L707.9 778.0 L708.1 780.0 L708.4 782.0 L708.6 784.0 L708.8 786.0 L708.9 788.0 L709.1 790.0 L709.3 792.0 L709.4 794.0 L709.5 796.0 L709.7 798.0 L709.8 800.0 L709.9 802.0 L709.9 804.0 L710.0 806.0 L710.1 808.0 L710.2 810.0 L710.2 812.0 L710.3 814.0 L710.3 816.0 L710.3 818.0 L710.3 820.0 L710.3 822.0 L710.3 824.0 L710.2 826.0 L710.1 828.0 L710.0 830.0 L709.9 832.0 L709.7 834.0 L709.5 836.0 L709.2 838.0 L708.9 840.0 L708.6 842.0 L708.2 844.0 L707.9 846.0" fill="none" stroke="#000" stroke-width="1"/>
<path d="M431.3 370.6 L431.0 376.0 L430.8 378.0 L430.6 380.0 L430.4 382.0 L430.3 384.0 L430.2 386.0 L430.1 388.0 L430.0 390.0 L430.0 392.0 L430.0 394.0 L430.0 396.0 L430.0 398.0 L430.1 400.0 L430.1 402.0 L430.2 404.0 L430.3 406.0 L430.4 408.0 L430.6 410.0 L430.7 412.0 L430.9 414.0 L431.0 416.0 L431.2 418.0 L431.4 420.0 L431.6 422.0 L431.9 424.0 L432.1 426.0 L432.4 428.0 L432.6 430.0 L432.9 432.0 L433.2 434.0 L433.5 436.0 L433.8 438.0 L434.1 440.0 L434.4 442.0 L434.8 444.0 L435.1 446.0 L435.5 448.0 L435.8 450.0 L436.2 452.0 L436.6 454.0 L437.1 456.0 L437.5 458.0 L438.0 460.0 L438.4 462.0 L438.9 464.0 L439.4 466.0 L439.9 468.0 L440.4 470.0 L440.9 472.0 L441.5 474.0 L442.1 476.0 L442.7 478.0 L443.4 480.0 L444.0 482.0 L444.7 484.0 L445.4 486.0 L446.1 488.0 L446.8 490.0 L447.6 492.0 L448.3 494.0 L449.1 496.0 L449.9 498.0 L450.7 500.0 L451.6 502.0 L452.5 504.0 L453.4 506.0 L454.3 508.0 L455.3 510.0 L456.2 512.0 L457.2 514.0 L458.2 516.0 L459.3 518.0 L460.3 520.0 L461.4 522.0 L462.5 524.0 L463.7 526.0 L464.8 528.0 L466.0 530.0 L467.3 532.0 L468.5 534.0 L469.8 536.0 L471.2 538.0 L472.5 540.0 L474.0 542.0 L475.5 544.0 L477.0 546.0 L478.7 548.0 L480.3 550.0 L482.1 552.0 L483.8 554.0 L485.6 556.0 L487.4 558.0 L489.3 560.0 L491.1 562.0 L493.0 564.0 L494.9 566.0 L496.8 568.0 L498.7 570.0 L500.7 572.0 L502.7 574.0 L504.8 576.0 L506.9 578.0 L509.0 580.0 L511.1 582.0 L513.3 584.0 L515.5 586.0 L517.7 588.0 L520.0 590.0 L522.3 592.0 L524.6 594.0 L527.0 596.0 L529.4 598.0 L531.8 600.0 L534.3 602.0 L536.7 604.0 L539.3 606.0 L541.8 608.0 L544.4 610.0 L547.0 612.0 L549.7 614.0 L552.5 616.0 L555.3 618.0 L558.2 620.0 L561.0 622.0 L563.9 624.0 L566.8 626.0 L569.8 628.0 L572.7 630.0 L575.6 632.0 L578.5 634.0 L581.4 636.0 L584.4 638.0 L587.3 640.0 L590.3 642.0 L593.3 644.0 L596.3 646.0 L599.2 648.0 L602.2 650.0 L605.1 652.0 L608.0 654.0 L610.9 656.0 L613.7 658.0 L616.5 660.0 L619.3 662.0 L622.0 664.0 L624.8 666.0 L627.5 668.0 L630.2 670.0 L632.8 672.0 L635.4 674.0 L638.0 676.0 L640.5 678.0 L642.9 680.0 L645.3 682.0 L647.7 684.0 L650.0 686.0 L652.4 688.0 L654.6 690.0 L656.9 692.0 L659.1 694.0 L661.2 696.0 L663.3 698.0 L665.2 700.0 L667.1 702.0 L668.9 704.0 L670.6 706.0 L672.2 708.0 L673.8 710.0 L675.3 712.0 L676.8 714.0 L678.2 716.0 L679.5 718.0 L680.8 720.0 L682.1 722.0 L683.3 724.0 L684.5 726.0 L685.6 728.0 L686.6 730.0 L687.7 732.0 L688.7 734.0 L689.6 736.0 L690.5 738.0 L691.4 740.0 L692.3 742.0 L693.1 744.0 L693.9 746.0 L694.7 748.0 L695.4 750.0 L696.2 752.0 L696.9 754.0 L697.6 756.0 L698.2 758.0 L698.9 760.0 L699.5 762.0 L700.2 764.0 L700.7 766.0 L701.3 768.0 L701.8 770.0 L702.3 772.0 L702.8 774.0 L703.2 776.0 L703.6 778.0 L704.0 780.0 L704.4 782.0 L704.7 784.0 L705.1 786.0 L705.4 788.0 L705.7 790.0 L706.0 792.0 L706.2 794.0 L706.5 796.0 L706.7 798.0 L706.9 800.0 L707.1 802.0 L707.3 804.0 L707.5 806.0 L707.7 808.0 L707.9 810.0 L708.0 812.0 L708.2 814.0 L708.3 816.0 L708.4 818.0 L708.5 820.0 L708.6 822.0 L708.7 824.0 L708.7 826.0 L708.7 828.0 L708.7 830.0 L708.7 832.0 L708.6 834.0 L708.5 836.0 L708.4 838.0 L708.3 840.0 L708.1 842.0 L707.9 844.0 L707.7 846.0 L707.5 848.0" fill="none" stroke="#000" stroke-width="1"/>
<path d="M534.8 337.4 L533 329 Q533 305 538.8 292.4 Q640 274 725 272.6" fill="none" stroke="#000" stroke-width="1"/>
<path d="M705 520 Q714 560 716.5 611 T717.5 700 L715.5 760" fill="none" stroke="#000" stroke-width="1"/>
<path d="M724.5 276 L724.5 815" fill="none" stroke="#000" stroke-width="1.2"/>
<path d="M721.5 276 L721.5 620 L720.5 660 L719 700 L717 752 L714 800 L711.5 830 L707.5 848" fill="none" stroke="#ff0000" stroke-width="1.1"/></g>
<path d="M725.0 275.0 L663.0 287.0 L618.0 296.0 L577.5 305.0 L541.9 313.2 L512.2 321.1 L486.9 328.7 L466.4 335.5 L450.6 342.1 L439.5 348.0 L432.1 353.2 L428.2 358.0 L425.0 362.0 L423.0 368.0" fill="none" stroke="#ff0000" stroke-width="1"/>
<path d="M534.8 337.4 L506.4 348.0 L486.6 354.8 L470.0 361.0 L456.6 365.5 L445.5 368.7 L437.2 370.0 L431.3 370.6 L426.0 372.0" fill="none" stroke="#ff0000" stroke-width="1"/>
<g><path d="M421.4 376.5 L722.0 376.5" fill="none" stroke="#000" stroke-width="1.15"/>
<path d="M419.3 420.5 L722.0 420.5" fill="none" stroke="#000" stroke-width="1.15"/>
<path d="M419.6 468.5 L722.0 468.5" fill="none" stroke="#000" stroke-width="1.15"/>
<path d="M425.5 515.5 L722.0 515.5" fill="none" stroke="#000" stroke-width="1.15"/>
<path d="M446.5 563.5 L722.0 563.5" fill="none" stroke="#000" stroke-width="1.15"/>
<path d="M491.5 610.5 L722.0 610.5" fill="none" stroke="#000" stroke-width="1.15"/>
<path d="M566.0 657.5 L722.0 657.5" fill="none" stroke="#000" stroke-width="1.15"/>
<path d="M639.0 705.5 L720.8 705.5" fill="none" stroke="#000" stroke-width="1.15"/>
<path d="M678.0 752.5 L719.0 752.5" fill="none" stroke="#000" stroke-width="1.15"/>
<path d="M698.0 800.5 L716.0 800.5" fill="none" stroke="#000" stroke-width="1.15"/></g>

<g><circle cx="671.7" cy="376.6" r="2.8" fill="#fff" stroke="#000" stroke-width="1.2"/><path d="M671.7 376.6H674.7" stroke="#000" stroke-width="1.2"/>
<circle cx="678.3" cy="420.6" r="2.8" fill="#fff" stroke="#000" stroke-width="1.2"/><path d="M678.3 420.6H681.3" stroke="#000" stroke-width="1.2"/>
<circle cx="688.1" cy="468.0" r="2.8" fill="#fff" stroke="#000" stroke-width="1.2"/><path d="M688.1 468.0H691.1" stroke="#000" stroke-width="1.2"/>
<circle cx="699.3" cy="515.5" r="2.8" fill="#fff" stroke="#000" stroke-width="1.2"/><path d="M699.3 515.5H702.3" stroke="#000" stroke-width="1.2"/>
<circle cx="711.5" cy="563.0" r="2.8" fill="#fff" stroke="#000" stroke-width="1.2"/><path d="M711.5 563.0H714.5" stroke="#000" stroke-width="1.2"/>
<circle cx="628.5" cy="376.6" r="2.8" fill="#fff" stroke="#000" stroke-width="1.2"/><path d="M628.5 376.6H631.5" stroke="#000" stroke-width="1.2"/>
<circle cx="637.9" cy="420.6" r="2.8" fill="#fff" stroke="#000" stroke-width="1.2"/><path d="M637.9 420.6H640.9" stroke="#000" stroke-width="1.2"/>
<circle cx="652.0" cy="468.0" r="2.8" fill="#fff" stroke="#000" stroke-width="1.2"/><path d="M652.0 468.0H655.0" stroke="#000" stroke-width="1.2"/>
<circle cx="668.7" cy="515.5" r="2.8" fill="#fff" stroke="#000" stroke-width="1.2"/><path d="M668.7 515.5H671.7" stroke="#000" stroke-width="1.2"/>
<circle cx="687.7" cy="563.0" r="2.8" fill="#fff" stroke="#000" stroke-width="1.2"/><path d="M687.7 563.0H690.7" stroke="#000" stroke-width="1.2"/>
<circle cx="706.6" cy="610.4" r="2.8" fill="#fff" stroke="#000" stroke-width="1.2"/><path d="M706.6 610.4H709.6" stroke="#000" stroke-width="1.2"/>
<circle cx="587.7" cy="376.6" r="2.8" fill="#fff" stroke="#000" stroke-width="1.2"/><path d="M587.7 376.6H590.7" stroke="#000" stroke-width="1.2"/>
<circle cx="598.5" cy="420.6" r="2.8" fill="#fff" stroke="#000" stroke-width="1.2"/><path d="M598.5 420.6H601.5" stroke="#000" stroke-width="1.2"/>
<circle cx="614.9" cy="468.0" r="2.8" fill="#fff" stroke="#000" stroke-width="1.2"/><path d="M614.9 468.0H617.9" stroke="#000" stroke-width="1.2"/>
<circle cx="634.8" cy="515.5" r="2.8" fill="#fff" stroke="#000" stroke-width="1.2"/><path d="M634.8 515.5H637.8" stroke="#000" stroke-width="1.2"/>
<circle cx="658.7" cy="563.0" r="2.8" fill="#fff" stroke="#000" stroke-width="1.2"/><path d="M658.7 563.0H661.7" stroke="#000" stroke-width="1.2"/>
<circle cx="684.6" cy="610.4" r="2.8" fill="#fff" stroke="#000" stroke-width="1.2"/><path d="M684.6 610.4H687.6" stroke="#000" stroke-width="1.2"/>
<circle cx="706.7" cy="657.9" r="2.8" fill="#fff" stroke="#000" stroke-width="1.2"/><path d="M706.7 657.9H709.7" stroke="#000" stroke-width="1.2"/>
<circle cx="551.4" cy="376.6" r="2.8" fill="#fff" stroke="#000" stroke-width="1.2"/><path d="M551.4 376.6H554.4" stroke="#000" stroke-width="1.2"/>
<circle cx="563.0" cy="420.6" r="2.8" fill="#fff" stroke="#000" stroke-width="1.2"/><path d="M563.0 420.6H566.0" stroke="#000" stroke-width="1.2"/>
<circle cx="581.0" cy="468.0" r="2.8" fill="#fff" stroke="#000" stroke-width="1.2"/><path d="M581.0 468.0H584.0" stroke="#000" stroke-width="1.2"/>
<circle cx="603.3" cy="515.5" r="2.8" fill="#fff" stroke="#000" stroke-width="1.2"/><path d="M603.3 515.5H606.3" stroke="#000" stroke-width="1.2"/>
<circle cx="631.1" cy="563.0" r="2.8" fill="#fff" stroke="#000" stroke-width="1.2"/><path d="M631.1 563.0H634.1" stroke="#000" stroke-width="1.2"/>
<circle cx="663.0" cy="610.4" r="2.8" fill="#fff" stroke="#000" stroke-width="1.2"/><path d="M663.0 610.4H666.0" stroke="#000" stroke-width="1.2"/>
<circle cx="693.2" cy="657.9" r="2.8" fill="#fff" stroke="#000" stroke-width="1.2"/><path d="M693.2 657.9H696.2" stroke="#000" stroke-width="1.2"/>
<circle cx="711.1" cy="705.3" r="2.8" fill="#fff" stroke="#000" stroke-width="1.2"/><path d="M711.1 705.3H714.1" stroke="#000" stroke-width="1.2"/>
<circle cx="519.0" cy="376.6" r="2.8" fill="#fff" stroke="#000" stroke-width="1.2"/><path d="M519.0 376.6H522.0" stroke="#000" stroke-width="1.2"/>
<circle cx="531.0" cy="420.6" r="2.8" fill="#fff" stroke="#000" stroke-width="1.2"/><path d="M531.0 420.6H534.0" stroke="#000" stroke-width="1.2"/>
<circle cx="549.7" cy="468.0" r="2.8" fill="#fff" stroke="#000" stroke-width="1.2"/><path d="M549.7 468.0H552.7" stroke="#000" stroke-width="1.2"/>
<circle cx="573.5" cy="515.5" r="2.8" fill="#fff" stroke="#000" stroke-width="1.2"/><path d="M573.5 515.5H576.5" stroke="#000" stroke-width="1.2"/>
<circle cx="604.2" cy="563.0" r="2.8" fill="#fff" stroke="#000" stroke-width="1.2"/><path d="M604.2 563.0H607.2" stroke="#000" stroke-width="1.2"/>
<circle cx="641.2" cy="610.4" r="2.8" fill="#fff" stroke="#000" stroke-width="1.2"/><path d="M641.2 610.4H644.2" stroke="#000" stroke-width="1.2"/>
<circle cx="679.1" cy="657.9" r="2.8" fill="#fff" stroke="#000" stroke-width="1.2"/><path d="M679.1 657.9H682.1" stroke="#000" stroke-width="1.2"/>
<circle cx="704.0" cy="705.3" r="2.8" fill="#fff" stroke="#000" stroke-width="1.2"/><path d="M704.0 705.3H707.0" stroke="#000" stroke-width="1.2"/>
<circle cx="713.1" cy="752.8" r="2.8" fill="#fff" stroke="#000" stroke-width="1.2"/><path d="M713.1 752.8H716.1" stroke="#000" stroke-width="1.2"/>
<circle cx="491.4" cy="376.6" r="2.8" fill="#fff" stroke="#000" stroke-width="1.2"/><path d="M491.4 376.6H494.4" stroke="#000" stroke-width="1.2"/>
<circle cx="503.1" cy="420.6" r="2.8" fill="#fff" stroke="#000" stroke-width="1.2"/><path d="M503.1 420.6H506.1" stroke="#000" stroke-width="1.2"/>
<circle cx="521.8" cy="468.0" r="2.8" fill="#fff" stroke="#000" stroke-width="1.2"/><path d="M521.8 468.0H524.8" stroke="#000" stroke-width="1.2"/>
<circle cx="546.0" cy="515.5" r="2.8" fill="#fff" stroke="#000" stroke-width="1.2"/><path d="M546.0 515.5H549.0" stroke="#000" stroke-width="1.2"/>
<circle cx="578.6" cy="563.0" r="2.8" fill="#fff" stroke="#000" stroke-width="1.2"/><path d="M578.6 563.0H581.6" stroke="#000" stroke-width="1.2"/>
<circle cx="619.7" cy="610.4" r="2.8" fill="#fff" stroke="#000" stroke-width="1.2"/><path d="M619.7 610.4H622.7" stroke="#000" stroke-width="1.2"/>
<circle cx="664.6" cy="657.9" r="2.8" fill="#fff" stroke="#000" stroke-width="1.2"/><path d="M664.6 657.9H667.6" stroke="#000" stroke-width="1.2"/>
<circle cx="696.5" cy="705.3" r="2.8" fill="#fff" stroke="#000" stroke-width="1.2"/><path d="M696.5 705.3H699.5" stroke="#000" stroke-width="1.2"/>
<circle cx="709.4" cy="752.8" r="2.8" fill="#fff" stroke="#000" stroke-width="1.2"/><path d="M709.4 752.8H712.4" stroke="#000" stroke-width="1.2"/>
<circle cx="469.2" cy="376.6" r="2.8" fill="#fff" stroke="#000" stroke-width="1.2"/><path d="M469.2 376.6H472.2" stroke="#000" stroke-width="1.2"/>
<circle cx="479.5" cy="420.6" r="2.8" fill="#fff" stroke="#000" stroke-width="1.2"/><path d="M479.5 420.6H482.5" stroke="#000" stroke-width="1.2"/>
<circle cx="496.7" cy="468.0" r="2.8" fill="#fff" stroke="#000" stroke-width="1.2"/><path d="M496.7 468.0H499.7" stroke="#000" stroke-width="1.2"/>
<circle cx="519.5" cy="515.5" r="2.8" fill="#fff" stroke="#000" stroke-width="1.2"/><path d="M519.5 515.5H522.5" stroke="#000" stroke-width="1.2"/>
<circle cx="552.2" cy="563.0" r="2.8" fill="#fff" stroke="#000" stroke-width="1.2"/><path d="M552.2 563.0H555.2" stroke="#000" stroke-width="1.2"/>
<circle cx="596.1" cy="610.4" r="2.8" fill="#fff" stroke="#000" stroke-width="1.2"/><path d="M596.1 610.4H599.1" stroke="#000" stroke-width="1.2"/>
<circle cx="647.6" cy="657.9" r="2.8" fill="#fff" stroke="#000" stroke-width="1.2"/><path d="M647.6 657.9H650.6" stroke="#000" stroke-width="1.2"/>
<circle cx="687.2" cy="705.3" r="2.8" fill="#fff" stroke="#000" stroke-width="1.2"/><path d="M687.2 705.3H690.2" stroke="#000" stroke-width="1.2"/>
<circle cx="704.6" cy="752.8" r="2.8" fill="#fff" stroke="#000" stroke-width="1.2"/><path d="M704.6 752.8H707.6" stroke="#000" stroke-width="1.2"/>
<circle cx="710.2" cy="800.2" r="2.8" fill="#fff" stroke="#000" stroke-width="1.2"/><path d="M710.2 800.2H713.2" stroke="#000" stroke-width="1.2"/>
<circle cx="451.9" cy="376.6" r="2.8" fill="#fff" stroke="#000" stroke-width="1.2"/><path d="M451.9 376.6H454.9" stroke="#000" stroke-width="1.2"/>
<circle cx="459.9" cy="420.6" r="2.8" fill="#fff" stroke="#000" stroke-width="1.2"/><path d="M459.9 420.6H462.9" stroke="#000" stroke-width="1.2"/>
<circle cx="474.0" cy="468.0" r="2.8" fill="#fff" stroke="#000" stroke-width="1.2"/><path d="M474.0 468.0H477.0" stroke="#000" stroke-width="1.2"/>
<circle cx="493.9" cy="515.5" r="2.8" fill="#fff" stroke="#000" stroke-width="1.2"/><path d="M493.9 515.5H496.9" stroke="#000" stroke-width="1.2"/>
<circle cx="525.1" cy="563.0" r="2.8" fill="#fff" stroke="#000" stroke-width="1.2"/><path d="M525.1 563.0H528.1" stroke="#000" stroke-width="1.2"/>
<circle cx="570.4" cy="610.4" r="2.8" fill="#fff" stroke="#000" stroke-width="1.2"/><path d="M570.4 610.4H573.4" stroke="#000" stroke-width="1.2"/>
<circle cx="628.3" cy="657.9" r="2.8" fill="#fff" stroke="#000" stroke-width="1.2"/><path d="M628.3 657.9H631.3" stroke="#000" stroke-width="1.2"/>
<circle cx="676.1" cy="705.3" r="2.8" fill="#fff" stroke="#000" stroke-width="1.2"/><path d="M676.1 705.3H679.1" stroke="#000" stroke-width="1.2"/>
<circle cx="698.6" cy="752.8" r="2.8" fill="#fff" stroke="#000" stroke-width="1.2"/><path d="M698.6 752.8H701.6" stroke="#000" stroke-width="1.2"/>
<circle cx="707.5" cy="800.2" r="2.8" fill="#fff" stroke="#000" stroke-width="1.2"/><path d="M707.5 800.2H710.5" stroke="#000" stroke-width="1.2"/>
<circle cx="440.0" cy="376.6" r="2.8" fill="#fff" stroke="#000" stroke-width="1.2"/><path d="M440.0 376.6H443.0" stroke="#000" stroke-width="1.2"/>
<circle cx="445.6" cy="420.6" r="2.8" fill="#fff" stroke="#000" stroke-width="1.2"/><path d="M445.6 420.6H448.6" stroke="#000" stroke-width="1.2"/>
<circle cx="456.6" cy="468.0" r="2.8" fill="#fff" stroke="#000" stroke-width="1.2"/><path d="M456.6 468.0H459.6" stroke="#000" stroke-width="1.2"/>
<circle cx="473.4" cy="515.5" r="2.8" fill="#fff" stroke="#000" stroke-width="1.2"/><path d="M473.4 515.5H476.4" stroke="#000" stroke-width="1.2"/>
<circle cx="502.6" cy="563.0" r="2.8" fill="#fff" stroke="#000" stroke-width="1.2"/><path d="M502.6 563.0H505.6" stroke="#000" stroke-width="1.2"/>
<circle cx="548.6" cy="610.4" r="2.8" fill="#fff" stroke="#000" stroke-width="1.2"/><path d="M548.6 610.4H551.6" stroke="#000" stroke-width="1.2"/>
<circle cx="611.5" cy="657.9" r="2.8" fill="#fff" stroke="#000" stroke-width="1.2"/><path d="M611.5 657.9H614.5" stroke="#000" stroke-width="1.2"/>
<circle cx="666.3" cy="705.3" r="2.8" fill="#fff" stroke="#000" stroke-width="1.2"/><path d="M666.3 705.3H669.3" stroke="#000" stroke-width="1.2"/>
<circle cx="693.3" cy="752.8" r="2.8" fill="#fff" stroke="#000" stroke-width="1.2"/><path d="M693.3 752.8H696.3" stroke="#000" stroke-width="1.2"/>
<circle cx="705.1" cy="800.2" r="2.8" fill="#fff" stroke="#000" stroke-width="1.2"/><path d="M705.1 800.2H708.1" stroke="#000" stroke-width="1.2"/>
<circle cx="431.3" cy="376.6" r="2.8" fill="#fff" stroke="#000" stroke-width="1.2"/><path d="M431.3 376.6H434.3" stroke="#000" stroke-width="1.2"/>
<circle cx="434.3" cy="420.6" r="2.8" fill="#fff" stroke="#000" stroke-width="1.2"/><path d="M434.3 420.6H437.3" stroke="#000" stroke-width="1.2"/>
<circle cx="441.6" cy="468.0" r="2.8" fill="#fff" stroke="#000" stroke-width="1.2"/><path d="M441.6 468.0H444.6" stroke="#000" stroke-width="1.2"/>
<circle cx="454.8" cy="515.5" r="2.8" fill="#fff" stroke="#000" stroke-width="1.2"/><path d="M454.8 515.5H457.8" stroke="#000" stroke-width="1.2"/>
<circle cx="481.4" cy="563.0" r="2.8" fill="#fff" stroke="#000" stroke-width="1.2"/><path d="M481.4 563.0H484.4" stroke="#000" stroke-width="1.2"/>
<circle cx="527.5" cy="610.4" r="2.8" fill="#fff" stroke="#000" stroke-width="1.2"/><path d="M527.5 610.4H530.5" stroke="#000" stroke-width="1.2"/>
<circle cx="594.9" cy="657.9" r="2.8" fill="#fff" stroke="#000" stroke-width="1.2"/><path d="M594.9 657.9H597.9" stroke="#000" stroke-width="1.2"/>
<circle cx="656.5" cy="705.3" r="2.8" fill="#fff" stroke="#000" stroke-width="1.2"/><path d="M656.5 705.3H659.5" stroke="#000" stroke-width="1.2"/>
<circle cx="687.8" cy="752.8" r="2.8" fill="#fff" stroke="#000" stroke-width="1.2"/><path d="M687.8 752.8H690.8" stroke="#000" stroke-width="1.2"/>
<circle cx="702.6" cy="800.2" r="2.8" fill="#fff" stroke="#000" stroke-width="1.2"/><path d="M702.6 800.2H705.6" stroke="#000" stroke-width="1.2"/>
<circle cx="427.0" cy="376.6" r="2.8" fill="#fff" stroke="#000" stroke-width="1.2"/><path d="M427.0 376.6H430.0" stroke="#000" stroke-width="1.2"/>
<circle cx="427.9" cy="420.6" r="2.8" fill="#fff" stroke="#000" stroke-width="1.2"/><path d="M427.9 420.6H430.9" stroke="#000" stroke-width="1.2"/>
<circle cx="432.5" cy="468.0" r="2.8" fill="#fff" stroke="#000" stroke-width="1.2"/><path d="M432.5 468.0H435.5" stroke="#000" stroke-width="1.2"/>
<circle cx="442.8" cy="515.5" r="2.8" fill="#fff" stroke="#000" stroke-width="1.2"/><path d="M442.8 515.5H445.8" stroke="#000" stroke-width="1.2"/>
<circle cx="467.3" cy="563.0" r="2.8" fill="#fff" stroke="#000" stroke-width="1.2"/><path d="M467.3 563.0H470.3" stroke="#000" stroke-width="1.2"/>
<circle cx="513.0" cy="610.4" r="2.8" fill="#fff" stroke="#000" stroke-width="1.2"/><path d="M513.0 610.4H516.0" stroke="#000" stroke-width="1.2"/>
<circle cx="583.3" cy="657.9" r="2.8" fill="#fff" stroke="#000" stroke-width="1.2"/><path d="M583.3 657.9H586.3" stroke="#000" stroke-width="1.2"/>
<circle cx="649.5" cy="705.3" r="2.8" fill="#fff" stroke="#000" stroke-width="1.2"/><path d="M649.5 705.3H652.5" stroke="#000" stroke-width="1.2"/>
<circle cx="683.9" cy="752.8" r="2.8" fill="#fff" stroke="#000" stroke-width="1.2"/><path d="M683.9 752.8H686.9" stroke="#000" stroke-width="1.2"/>
<circle cx="700.7" cy="800.2" r="2.8" fill="#fff" stroke="#000" stroke-width="1.2"/><path d="M700.7 800.2H703.7" stroke="#000" stroke-width="1.2"/>
<circle cx="423.9" cy="376.6" r="2.8" fill="#fff" stroke="#000" stroke-width="1.2"/><path d="M423.9 376.6H426.9" stroke="#000" stroke-width="1.2"/>
<circle cx="423.2" cy="420.6" r="2.8" fill="#fff" stroke="#000" stroke-width="1.2"/><path d="M423.2 420.6H426.2" stroke="#000" stroke-width="1.2"/>
<circle cx="425.4" cy="468.0" r="2.8" fill="#fff" stroke="#000" stroke-width="1.2"/><path d="M425.4 468.0H428.4" stroke="#000" stroke-width="1.2"/>
<circle cx="433.2" cy="515.5" r="2.8" fill="#fff" stroke="#000" stroke-width="1.2"/><path d="M433.2 515.5H436.2" stroke="#000" stroke-width="1.2"/>
<circle cx="455.7" cy="563.0" r="2.8" fill="#fff" stroke="#000" stroke-width="1.2"/><path d="M455.7 563.0H458.7" stroke="#000" stroke-width="1.2"/>
<circle cx="501.0" cy="610.4" r="2.8" fill="#fff" stroke="#000" stroke-width="1.2"/><path d="M501.0 610.4H504.0" stroke="#000" stroke-width="1.2"/>
<circle cx="573.6" cy="657.9" r="2.8" fill="#fff" stroke="#000" stroke-width="1.2"/><path d="M573.6 657.9H576.6" stroke="#000" stroke-width="1.2"/>
<circle cx="643.6" cy="705.3" r="2.8" fill="#fff" stroke="#000" stroke-width="1.2"/><path d="M643.6 705.3H646.6" stroke="#000" stroke-width="1.2"/>
<circle cx="680.6" cy="752.8" r="2.8" fill="#fff" stroke="#000" stroke-width="1.2"/><path d="M680.6 752.8H683.6" stroke="#000" stroke-width="1.2"/>
<circle cx="699.2" cy="800.2" r="2.8" fill="#fff" stroke="#000" stroke-width="1.2"/><path d="M699.2 800.2H702.2" stroke="#000" stroke-width="1.2"/>
<circle cx="421.9" cy="376.6" r="2.8" fill="#fff" stroke="#000" stroke-width="1.2"/><path d="M421.9 376.6H424.9" stroke="#000" stroke-width="1.2"/>
<circle cx="419.8" cy="420.6" r="2.8" fill="#fff" stroke="#000" stroke-width="1.2"/><path d="M419.8 420.6H422.8" stroke="#000" stroke-width="1.2"/>
<circle cx="420.1" cy="468.0" r="2.8" fill="#fff" stroke="#000" stroke-width="1.2"/><path d="M420.1 468.0H423.1" stroke="#000" stroke-width="1.2"/>
<circle cx="426.0" cy="515.5" r="2.8" fill="#fff" stroke="#000" stroke-width="1.2"/><path d="M426.0 515.5H429.0" stroke="#000" stroke-width="1.2"/>
<circle cx="447.0" cy="563.0" r="2.8" fill="#fff" stroke="#000" stroke-width="1.2"/><path d="M447.0 563.0H450.0" stroke="#000" stroke-width="1.2"/>
<circle cx="491.9" cy="610.4" r="2.8" fill="#fff" stroke="#000" stroke-width="1.2"/><path d="M491.9 610.4H494.9" stroke="#000" stroke-width="1.2"/>
<circle cx="566.3" cy="657.9" r="2.8" fill="#fff" stroke="#000" stroke-width="1.2"/><path d="M566.3 657.9H569.3" stroke="#000" stroke-width="1.2"/>
<circle cx="639.1" cy="705.3" r="2.8" fill="#fff" stroke="#000" stroke-width="1.2"/><path d="M639.1 705.3H642.1" stroke="#000" stroke-width="1.2"/>
<circle cx="678.1" cy="752.8" r="2.8" fill="#fff" stroke="#000" stroke-width="1.2"/><path d="M678.1 752.8H681.1" stroke="#000" stroke-width="1.2"/>
<circle cx="698.0" cy="800.2" r="2.8" fill="#fff" stroke="#000" stroke-width="1.2"/><path d="M698.0 800.2H701.0" stroke="#000" stroke-width="1.2"/>
<circle cx="543.5" cy="376.6" r="2.8" fill="#fff" stroke="#000" stroke-width="1.2"/><path d="M543.5 376.6H546.5" stroke="#000" stroke-width="1.2"/>
<circle cx="567.2" cy="420.6" r="2.8" fill="#fff" stroke="#000" stroke-width="1.2"/><path d="M567.2 420.6H570.2" stroke="#000" stroke-width="1.2"/>
<circle cx="627.7" cy="468.0" r="2.8" fill="#fff" stroke="#000" stroke-width="1.2"/><path d="M627.7 468.0H630.7" stroke="#000" stroke-width="1.2"/>
<circle cx="690.9" cy="515.5" r="2.8" fill="#fff" stroke="#000" stroke-width="1.2"/><path d="M690.9 515.5H693.9" stroke="#000" stroke-width="1.2"/>
<circle cx="514.3" cy="376.6" r="2.8" fill="#fff" stroke="#000" stroke-width="1.2"/><path d="M514.3 376.6H517.3" stroke="#000" stroke-width="1.2"/>
<circle cx="536.0" cy="420.6" r="2.8" fill="#fff" stroke="#000" stroke-width="1.2"/><path d="M536.0 420.6H539.0" stroke="#000" stroke-width="1.2"/>
<circle cx="594.9" cy="468.0" r="2.8" fill="#fff" stroke="#000" stroke-width="1.2"/><path d="M594.9 468.0H597.9" stroke="#000" stroke-width="1.2"/>
<circle cx="663.6" cy="515.5" r="2.8" fill="#fff" stroke="#000" stroke-width="1.2"/><path d="M663.6 515.5H666.6" stroke="#000" stroke-width="1.2"/>
<circle cx="712.7" cy="563.0" r="2.8" fill="#fff" stroke="#000" stroke-width="1.2"/><path d="M712.7 563.0H715.7" stroke="#000" stroke-width="1.2"/>
<circle cx="492.1" cy="376.6" r="2.8" fill="#fff" stroke="#000" stroke-width="1.2"/><path d="M492.1 376.6H495.1" stroke="#000" stroke-width="1.2"/>
<circle cx="504.2" cy="420.6" r="2.8" fill="#fff" stroke="#000" stroke-width="1.2"/><path d="M504.2 420.6H507.2" stroke="#000" stroke-width="1.2"/>
<circle cx="542.5" cy="468.0" r="2.8" fill="#fff" stroke="#000" stroke-width="1.2"/><path d="M542.5 468.0H545.5" stroke="#000" stroke-width="1.2"/>
<circle cx="596.5" cy="515.5" r="2.8" fill="#fff" stroke="#000" stroke-width="1.2"/><path d="M596.5 515.5H599.5" stroke="#000" stroke-width="1.2"/>
<circle cx="654.5" cy="563.0" r="2.8" fill="#fff" stroke="#000" stroke-width="1.2"/><path d="M654.5 563.0H657.5" stroke="#000" stroke-width="1.2"/>
<circle cx="699.9" cy="610.4" r="2.8" fill="#fff" stroke="#000" stroke-width="1.2"/><path d="M699.9 610.4H702.9" stroke="#000" stroke-width="1.2"/>
<circle cx="472.3" cy="376.6" r="2.8" fill="#fff" stroke="#000" stroke-width="1.2"/><path d="M472.3 376.6H475.3" stroke="#000" stroke-width="1.2"/>
<circle cx="479.7" cy="420.6" r="2.8" fill="#fff" stroke="#000" stroke-width="1.2"/><path d="M479.7 420.6H482.7" stroke="#000" stroke-width="1.2"/>
<circle cx="506.1" cy="468.0" r="2.8" fill="#fff" stroke="#000" stroke-width="1.2"/><path d="M506.1 468.0H509.1" stroke="#000" stroke-width="1.2"/>
<circle cx="547.6" cy="515.5" r="2.8" fill="#fff" stroke="#000" stroke-width="1.2"/><path d="M547.6 515.5H550.6" stroke="#000" stroke-width="1.2"/>
<circle cx="600.3" cy="563.0" r="2.8" fill="#fff" stroke="#000" stroke-width="1.2"/><path d="M600.3 563.0H603.3" stroke="#000" stroke-width="1.2"/>
<circle cx="654.6" cy="610.4" r="2.8" fill="#fff" stroke="#000" stroke-width="1.2"/><path d="M654.6 610.4H657.6" stroke="#000" stroke-width="1.2"/>
<circle cx="696.5" cy="657.9" r="2.8" fill="#fff" stroke="#000" stroke-width="1.2"/><path d="M696.5 657.9H699.5" stroke="#000" stroke-width="1.2"/>
<circle cx="714.5" cy="705.3" r="2.8" fill="#fff" stroke="#000" stroke-width="1.2"/><path d="M714.5 705.3H717.5" stroke="#000" stroke-width="1.2"/>
<circle cx="456.9" cy="376.6" r="2.8" fill="#fff" stroke="#000" stroke-width="1.2"/><path d="M456.9 376.6H459.9" stroke="#000" stroke-width="1.2"/>
<circle cx="462.4" cy="420.6" r="2.8" fill="#fff" stroke="#000" stroke-width="1.2"/><path d="M462.4 420.6H465.4" stroke="#000" stroke-width="1.2"/>
<circle cx="484.2" cy="468.0" r="2.8" fill="#fff" stroke="#000" stroke-width="1.2"/><path d="M484.2 468.0H487.2" stroke="#000" stroke-width="1.2"/>
<circle cx="520.2" cy="515.5" r="2.8" fill="#fff" stroke="#000" stroke-width="1.2"/><path d="M520.2 515.5H523.2" stroke="#000" stroke-width="1.2"/>
<circle cx="569.9" cy="563.0" r="2.8" fill="#fff" stroke="#000" stroke-width="1.2"/><path d="M569.9 563.0H572.9" stroke="#000" stroke-width="1.2"/>
<circle cx="626.5" cy="610.4" r="2.8" fill="#fff" stroke="#000" stroke-width="1.2"/><path d="M626.5 610.4H629.5" stroke="#000" stroke-width="1.2"/>
<circle cx="677.7" cy="657.9" r="2.8" fill="#fff" stroke="#000" stroke-width="1.2"/><path d="M677.7 657.9H680.7" stroke="#000" stroke-width="1.2"/>
<circle cx="706.3" cy="705.3" r="2.8" fill="#fff" stroke="#000" stroke-width="1.2"/><path d="M706.3 705.3H709.3" stroke="#000" stroke-width="1.2"/>
<circle cx="714.5" cy="752.8" r="2.8" fill="#fff" stroke="#000" stroke-width="1.2"/><path d="M714.5 752.8H717.5" stroke="#000" stroke-width="1.2"/>
<circle cx="444.9" cy="376.6" r="2.8" fill="#fff" stroke="#000" stroke-width="1.2"/><path d="M444.9 376.6H447.9" stroke="#000" stroke-width="1.2"/>
<circle cx="448.4" cy="420.6" r="2.8" fill="#fff" stroke="#000" stroke-width="1.2"/><path d="M448.4 420.6H451.4" stroke="#000" stroke-width="1.2"/>
<circle cx="464.7" cy="468.0" r="2.8" fill="#fff" stroke="#000" stroke-width="1.2"/><path d="M464.7 468.0H467.7" stroke="#000" stroke-width="1.2"/>
<circle cx="493.9" cy="515.5" r="2.8" fill="#fff" stroke="#000" stroke-width="1.2"/><path d="M493.9 515.5H496.9" stroke="#000" stroke-width="1.2"/>
<circle cx="538.2" cy="563.0" r="2.8" fill="#fff" stroke="#000" stroke-width="1.2"/><path d="M538.2 563.0H541.2" stroke="#000" stroke-width="1.2"/>
<circle cx="594.7" cy="610.4" r="2.8" fill="#fff" stroke="#000" stroke-width="1.2"/><path d="M594.7 610.4H597.7" stroke="#000" stroke-width="1.2"/>
<circle cx="654.0" cy="657.9" r="2.8" fill="#fff" stroke="#000" stroke-width="1.2"/><path d="M654.0 657.9H657.0" stroke="#000" stroke-width="1.2"/>
<circle cx="693.9" cy="705.3" r="2.8" fill="#fff" stroke="#000" stroke-width="1.2"/><path d="M693.9 705.3H696.9" stroke="#000" stroke-width="1.2"/>
<circle cx="709.1" cy="752.8" r="2.8" fill="#fff" stroke="#000" stroke-width="1.2"/><path d="M709.1 752.8H712.1" stroke="#000" stroke-width="1.2"/>
<circle cx="436.9" cy="376.6" r="2.8" fill="#fff" stroke="#000" stroke-width="1.2"/><path d="M436.9 376.6H439.9" stroke="#000" stroke-width="1.2"/>
<circle cx="438.8" cy="420.6" r="2.8" fill="#fff" stroke="#000" stroke-width="1.2"/><path d="M438.8 420.6H441.8" stroke="#000" stroke-width="1.2"/>
<circle cx="450.8" cy="468.0" r="2.8" fill="#fff" stroke="#000" stroke-width="1.2"/><path d="M450.8 468.0H453.8" stroke="#000" stroke-width="1.2"/>
<circle cx="474.0" cy="515.5" r="2.8" fill="#fff" stroke="#000" stroke-width="1.2"/><path d="M474.0 515.5H477.0" stroke="#000" stroke-width="1.2"/>
<circle cx="513.0" cy="563.0" r="2.8" fill="#fff" stroke="#000" stroke-width="1.2"/><path d="M513.0 563.0H516.0" stroke="#000" stroke-width="1.2"/>
<circle cx="568.0" cy="610.4" r="2.8" fill="#fff" stroke="#000" stroke-width="1.2"/><path d="M568.0 610.4H571.0" stroke="#000" stroke-width="1.2"/>
<circle cx="632.8" cy="657.9" r="2.8" fill="#fff" stroke="#000" stroke-width="1.2"/><path d="M632.8 657.9H635.8" stroke="#000" stroke-width="1.2"/>
<circle cx="681.7" cy="705.3" r="2.8" fill="#fff" stroke="#000" stroke-width="1.2"/><path d="M681.7 705.3H684.7" stroke="#000" stroke-width="1.2"/>
<circle cx="702.9" cy="752.8" r="2.8" fill="#fff" stroke="#000" stroke-width="1.2"/><path d="M702.9 752.8H705.9" stroke="#000" stroke-width="1.2"/>
<circle cx="709.8" cy="800.2" r="2.8" fill="#fff" stroke="#000" stroke-width="1.2"/><path d="M709.8 800.2H712.8" stroke="#000" stroke-width="1.2"/>
<circle cx="430.9" cy="376.6" r="2.8" fill="#fff" stroke="#000" stroke-width="1.2"/><path d="M430.9 376.6H433.9" stroke="#000" stroke-width="1.2"/>
<circle cx="431.5" cy="420.6" r="2.8" fill="#fff" stroke="#000" stroke-width="1.2"/><path d="M431.5 420.6H434.5" stroke="#000" stroke-width="1.2"/>
<circle cx="439.9" cy="468.0" r="2.8" fill="#fff" stroke="#000" stroke-width="1.2"/><path d="M439.9 468.0H442.9" stroke="#000" stroke-width="1.2"/>
<circle cx="458.0" cy="515.5" r="2.8" fill="#fff" stroke="#000" stroke-width="1.2"/><path d="M458.0 515.5H461.0" stroke="#000" stroke-width="1.2"/>
<circle cx="492.1" cy="563.0" r="2.8" fill="#fff" stroke="#000" stroke-width="1.2"/><path d="M492.1 563.0H495.1" stroke="#000" stroke-width="1.2"/>
<circle cx="544.9" cy="610.4" r="2.8" fill="#fff" stroke="#000" stroke-width="1.2"/><path d="M544.9 610.4H547.9" stroke="#000" stroke-width="1.2"/>
<circle cx="613.6" cy="657.9" r="2.8" fill="#fff" stroke="#000" stroke-width="1.2"/><path d="M613.6 657.9H616.6" stroke="#000" stroke-width="1.2"/>
<circle cx="670.0" cy="705.3" r="2.8" fill="#fff" stroke="#000" stroke-width="1.2"/><path d="M670.0 705.3H673.0" stroke="#000" stroke-width="1.2"/>
<circle cx="696.5" cy="752.8" r="2.8" fill="#fff" stroke="#000" stroke-width="1.2"/><path d="M696.5 752.8H699.5" stroke="#000" stroke-width="1.2"/>
<circle cx="706.9" cy="800.2" r="2.8" fill="#fff" stroke="#000" stroke-width="1.2"/><path d="M706.9 800.2H709.9" stroke="#000" stroke-width="1.2"/>
<circle cx="721.5" cy="420.6" r="2.8" fill="#fff" stroke="#19e6f0" stroke-width="1.2"/><path d="M721.5 420.6H724.5" stroke="#19e6f0" stroke-width="1.2"/>
<circle cx="721.5" cy="468.0" r="2.8" fill="#fff" stroke="#19e6f0" stroke-width="1.2"/><path d="M721.5 468.0H724.5" stroke="#19e6f0" stroke-width="1.2"/>
<circle cx="721.5" cy="515.5" r="2.8" fill="#fff" stroke="#19e6f0" stroke-width="1.2"/><path d="M721.5 515.5H724.5" stroke="#19e6f0" stroke-width="1.2"/>
<circle cx="721.5" cy="563.0" r="2.8" fill="#fff" stroke="#19e6f0" stroke-width="1.2"/><path d="M721.5 563.0H724.5" stroke="#19e6f0" stroke-width="1.2"/>
<circle cx="721.5" cy="610.4" r="2.8" fill="#fff" stroke="#19e6f0" stroke-width="1.2"/><path d="M721.5 610.4H724.5" stroke="#19e6f0" stroke-width="1.2"/>
<circle cx="720.6" cy="657.9" r="2.8" fill="#fff" stroke="#19e6f0" stroke-width="1.2"/><path d="M720.6 657.9H723.6" stroke="#19e6f0" stroke-width="1.2"/>
<circle cx="718.8" cy="705.3" r="2.8" fill="#fff" stroke="#19e6f0" stroke-width="1.2"/><path d="M718.8 705.3H721.8" stroke="#19e6f0" stroke-width="1.2"/>
<circle cx="717.0" cy="752.8" r="2.8" fill="#fff" stroke="#19e6f0" stroke-width="1.2"/><path d="M717.0 752.8H720.0" stroke="#19e6f0" stroke-width="1.2"/>
<circle cx="714.0" cy="800.2" r="2.8" fill="#fff" stroke="#19e6f0" stroke-width="1.2"/><path d="M714.0 800.2H717.0" stroke="#19e6f0" stroke-width="1.2"/>
<circle cx="721.5" cy="376.0" r="2.8" fill="#fff" stroke="#000" stroke-width="1.2"/><path d="M721.5 376.0H724.5" stroke="#000" stroke-width="1.2"/>
<circle cx="571.5" cy="420.6" r="2.8" fill="#fff" stroke="#19e6f0" stroke-width="1.2"/><path d="M571.5 420.6H574.5" stroke="#19e6f0" stroke-width="1.2"/>
<circle cx="632.0" cy="468.0" r="2.8" fill="#fff" stroke="#19e6f0" stroke-width="1.2"/><path d="M632.0 468.0H635.0" stroke="#19e6f0" stroke-width="1.2"/>
<circle cx="696.0" cy="515.5" r="2.8" fill="#fff" stroke="#19e6f0" stroke-width="1.2"/><path d="M696.0 515.5H699.0" stroke="#19e6f0" stroke-width="1.2"/>
<circle cx="663.0" cy="287.0" r="2.8" fill="#fff" stroke="#000" stroke-width="1.2"/><circle cx="663.0" cy="287.0" r="0.8" fill="#f00"/>
<circle cx="618.0" cy="296.0" r="2.8" fill="#fff" stroke="#000" stroke-width="1.2"/><circle cx="618.0" cy="296.0" r="0.8" fill="#f00"/>
<circle cx="577.5" cy="305.0" r="2.8" fill="#fff" stroke="#000" stroke-width="1.2"/><circle cx="577.5" cy="305.0" r="0.8" fill="#f00"/>
<circle cx="541.9" cy="313.2" r="2.8" fill="#fff" stroke="#000" stroke-width="1.2"/><circle cx="541.9" cy="313.2" r="0.8" fill="#f00"/>
<circle cx="512.2" cy="321.1" r="2.8" fill="#fff" stroke="#000" stroke-width="1.2"/><circle cx="512.2" cy="321.1" r="0.8" fill="#f00"/>
<circle cx="486.9" cy="328.7" r="2.8" fill="#fff" stroke="#000" stroke-width="1.2"/><circle cx="486.9" cy="328.7" r="0.8" fill="#f00"/>
<circle cx="466.4" cy="335.5" r="2.8" fill="#fff" stroke="#000" stroke-width="1.2"/><circle cx="466.4" cy="335.5" r="0.8" fill="#f00"/>
<circle cx="450.6" cy="342.1" r="2.8" fill="#fff" stroke="#000" stroke-width="1.2"/><circle cx="450.6" cy="342.1" r="0.8" fill="#f00"/>
<circle cx="439.5" cy="348.0" r="2.8" fill="#fff" stroke="#000" stroke-width="1.2"/><circle cx="439.5" cy="348.0" r="0.8" fill="#f00"/>
<circle cx="432.1" cy="353.2" r="2.8" fill="#fff" stroke="#000" stroke-width="1.2"/><circle cx="432.1" cy="353.2" r="0.8" fill="#f00"/>
<circle cx="428.2" cy="358.0" r="2.8" fill="#fff" stroke="#000" stroke-width="1.2"/><circle cx="428.2" cy="358.0" r="0.8" fill="#f00"/>
<circle cx="425.0" cy="362.0" r="2.8" fill="#fff" stroke="#000" stroke-width="1.2"/><circle cx="425.0" cy="362.0" r="0.8" fill="#f00"/>
<circle cx="423.0" cy="368.0" r="2.8" fill="#fff" stroke="#000" stroke-width="1.2"/><circle cx="423.0" cy="368.0" r="0.8" fill="#f00"/>
<circle cx="725.0" cy="275.0" r="2.8" fill="#fff" stroke="#000" stroke-width="1.2"/><circle cx="725.0" cy="275.0" r="0.8" fill="#f00"/>
<circle cx="534.8" cy="337.4" r="2.8" fill="#fff" stroke="#000" stroke-width="1.2"/><circle cx="534.8" cy="337.4" r="0.8" fill="#f00"/>
<circle cx="506.4" cy="348.0" r="2.8" fill="#fff" stroke="#000" stroke-width="1.2"/><circle cx="506.4" cy="348.0" r="0.8" fill="#f00"/>
<circle cx="486.6" cy="354.8" r="2.8" fill="#fff" stroke="#000" stroke-width="1.2"/><circle cx="486.6" cy="354.8" r="0.8" fill="#f00"/>
<circle cx="470.0" cy="361.0" r="2.8" fill="#fff" stroke="#000" stroke-width="1.2"/><circle cx="470.0" cy="361.0" r="0.8" fill="#f00"/>
<circle cx="456.6" cy="365.5" r="2.8" fill="#fff" stroke="#000" stroke-width="1.2"/><circle cx="456.6" cy="365.5" r="0.8" fill="#f00"/>
<circle cx="445.5" cy="368.7" r="2.8" fill="#fff" stroke="#000" stroke-width="1.2"/><circle cx="445.5" cy="368.7" r="0.8" fill="#f00"/>
<circle cx="437.2" cy="370.0" r="2.8" fill="#fff" stroke="#000" stroke-width="1.2"/><circle cx="437.2" cy="370.0" r="0.8" fill="#f00"/>
<circle cx="431.3" cy="370.6" r="2.8" fill="#fff" stroke="#000" stroke-width="1.2"/><circle cx="431.3" cy="370.6" r="0.8" fill="#f00"/>
<circle cx="426.0" cy="372.0" r="2.8" fill="#fff" stroke="#000" stroke-width="1.2"/><circle cx="426.0" cy="372.0" r="0.8" fill="#f00"/>
<circle cx="726.0" cy="292.0" r="2.8" fill="#fff" stroke="#000" stroke-width="1.2"/><path d="M726.0 292.0H729.0" stroke="#000" stroke-width="1.2"/>
<circle cx="720.5" cy="568.0" r="2.8" fill="#fff" stroke="#ee0000" stroke-width="1.2"/><path d="M720.5 568.0H723.5" stroke="#ee0000" stroke-width="1.2"/>
<circle cx="720.1" cy="635.0" r="2.8" fill="#fff" stroke="#ee0000" stroke-width="1.2"/><path d="M720.1 635.0H723.1" stroke="#ee0000" stroke-width="1.2"/>
<circle cx="716.4" cy="741.0" r="2.8" fill="#fff" stroke="#ee0000" stroke-width="1.2"/><path d="M716.4 741.0H719.4" stroke="#ee0000" stroke-width="1.2"/>
<circle cx="714.9" cy="770.0" r="2.8" fill="#fff" stroke="#ee0000" stroke-width="1.2"/><path d="M714.9 770.0H717.9" stroke="#ee0000" stroke-width="1.2"/>
<circle cx="713.5" cy="792.0" r="2.8" fill="#fff" stroke="#ee0000" stroke-width="1.2"/><path d="M713.5 792.0H716.5" stroke="#ee0000" stroke-width="1.2"/>
<circle cx="712.0" cy="812.0" r="2.8" fill="#fff" stroke="#ee0000" stroke-width="1.2"/><path d="M712.0 812.0H715.0" stroke="#ee0000" stroke-width="1.2"/>
<circle cx="710.8" cy="826.0" r="2.8" fill="#fff" stroke="#ee0000" stroke-width="1.2"/><path d="M710.8 826.0H713.8" stroke="#ee0000" stroke-width="1.2"/>
<circle cx="709.6" cy="834.0" r="2.8" fill="#fff" stroke="#ee0000" stroke-width="1.2"/><path d="M709.6 834.0H712.6" stroke="#ee0000" stroke-width="1.2"/>
<circle cx="707.8" cy="842.0" r="2.8" fill="#fff" stroke="#ee0000" stroke-width="1.2"/><path d="M707.8 842.0H710.8" stroke="#ee0000" stroke-width="1.2"/>
<circle cx="706.7" cy="847.0" r="2.8" fill="#fff" stroke="#ee0000" stroke-width="1.2"/><path d="M706.7 847.0H709.7" stroke="#ee0000" stroke-width="1.2"/>
<circle cx="724.5" cy="815.0" r="2.8" fill="#fff" stroke="#ee0000" stroke-width="1.2"/><path d="M724.5 815.0H727.5" stroke="#ee0000" stroke-width="1.2"/></g>
<path d="M105.5 847 L105.5 877.5 L134.5 877.5" fill="none" stroke="#58595e" stroke-width="1.1"/>
</svg>
</div>
<div class="t" style="left:107.5px;top:836.67px;font-size:12.5px;line-height:14px;color:#58595e">z</div>
<div class="t" style="left:137.5px;top:866.67px;font-size:12.5px;line-height:14px;color:#58595e">x</div>
<div class="a" style="left:69px;top:135px;width:55px;height:18px;background:#6ba3fb;border-radius:0 0 5px 0"></div>
<div class="t" style="left:77px;top:136.84px;font-size:12px;line-height:14px;color:#222;font-weight:bold;letter-spacing:-0.3px">Front</div>
<div class="a" style="left:113px;top:137px;width:1px;height:15px;background:#222;"></div>
<svg style="left:115px;top:142px" width="8" height="5"><path d="M0 0H7.5L3.75 4.5Z" fill="#222"/></svg>
<div class="a" style="left:1718px;top:151px;width:200px;height:1px;background:#dcdfe6;"></div>
<div class="a" style="left:1724px;top:156px;width:28px;height:28px;background:#d3dbec;"></div>
<svg style="left:1726px;top:158px" width="24" height="22" viewBox="0 0 24 22">
<defs><linearGradient id="camb" x1="0" y1="0" x2="0" y2="1"><stop offset="0" stop-color="#555"/><stop offset="1" stop-color="#151515"/></linearGradient></defs>
<path d="M1.5 8Q1.5 5.5 4 5L6 3.5H10L11 2H17L18 4H20Q22.5 4.5 22.5 7.5V18.5Q22.5 20 21 20H3Q1.5 20 1.5 18.5Z" fill="url(#camb)" stroke="#111" stroke-width="0.6"/>
<circle cx="14" cy="14" r="5" fill="#222" stroke="#c8c8c8" stroke-width="0.9"/><circle cx="14" cy="14" r="3.6" fill="#0c0c10"/><path d="M12 12.5L13.5 14" stroke="#6a8ad0" stroke-width="1.2"/><path d="M15 15.5L17 13" stroke="#4a9a50" stroke-width="1"/></svg>
<svg style="left:1758px;top:159px" width="24" height="22" viewBox="0 0 24 22">
<rect x="0.5" y="0.5" width="23" height="21" fill="#e6dfdb" stroke="#666" stroke-width="1"/>
<rect x="2.6" y="3" width="18.8" height="15" fill="none" stroke="#3cc0f0" stroke-width="1.2"/>
<rect x="4.5" y="4.6" width="15" height="11.8" fill="#fff" stroke="#e00" stroke-width="1.2"/></svg>
<svg style="left:1791px;top:158px" width="24" height="24" viewBox="0 0 24 24">
<defs><radialGradient id="sg" cx="0.6" cy="0.4" r="0.65"><stop offset="0" stop-color="#f4f8ff"/><stop offset="0.45" stop-color="#5a82e0"/><stop offset="1" stop-color="#0a1c80"/></radialGradient></defs>
<circle cx="18" cy="4.4" r="3.3" fill="url(#sg)" stroke="#081060" stroke-width="0.4"/><circle cx="13.6" cy="9.6" r="4.3" fill="url(#sg)" stroke="#081060" stroke-width="0.4"/><circle cx="6.6" cy="15.9" r="5.5" fill="url(#sg)" stroke="#081060" stroke-width="0.4"/></svg>
<div class="t" style="left:1722px;top:200.12px;font-size:13.5px;line-height:16px;color:#0a0a0a">Viewport</div>
<div class="a" style="left:1722px;top:219px;width:168px;height:1px;background:#d7dce6;"></div>
<div class="t" style="left:1738px;top:223.84px;font-size:12px;line-height:14px;color:#0a0a0a">Title</div>
<div class="a" style="left:1816px;top:221px;width:74px;height:19px;background:#fff;"></div>
<div class="a" style="left:1816px;top:221px;width:74px;height:19px;overflow:hidden"><div class="t" style="left:4px;top:2.84px;font-size:12px;line-height:14px;color:#0a0a0a">Front</div></div>
<div class="a" style="left:1738px;top:241px;width:152px;height:1px;background:#d7dce6;"></div>
<div class="t" style="left:1738px;top:244.84px;font-size:12px;line-height:14px;color:#0a0a0a">Width</div>
<div class="a" style="left:1816px;top:243px;width:74px;height:17px;background:#fff;"></div>
<div class="a" style="left:1816px;top:243px;width:62px;height:17px;overflow:hidden"><div class="t" style="left:4px;top:1.84px;font-size:12px;line-height:14px;color:#0a0a0a">1645</div></div>
<div class="a" style="left:1878px;top:243px;width:1px;height:17px;background:#c3cbe0;"></div>
<div class="a" style="left:1878px;top:251px;width:12px;height:1px;background:#c3cbe0;"></div>
<svg style="left:1880px;top:243px" width="10" height="17"><path d="M1 6.0L4.5 2.5L8 6.0Z M1 11.0L4.5 14.5L8 11.0Z" fill="#222"/></svg>
<div class="a" style="left:1738px;top:261px;width:152px;height:1px;background:#d7dce6;"></div>
<div class="t" style="left:1738px;top:264.84px;font-size:12px;line-height:14px;color:#0a0a0a">Height</div>
<div class="a" style="left:1816px;top:263px;width:74px;height:17px;background:#fff;"></div>
<div class="a" style="left:1816px;top:263px;width:62px;height:17px;overflow:hidden"><div class="t" style="left:4px;top:1.84px;font-size:12px;line-height:14px;color:#0a0a0a">778</div></div>
<div class="a" style="left:1878px;top:263px;width:1px;height:17px;background:#c3cbe0;"></div>
<div class="a" style="left:1878px;top:271px;width:12px;height:1px;background:#c3cbe0;"></div>
<svg style="left:1880px;top:263px" width="10" height="17"><path d="M1 6.0L4.5 2.5L8 6.0Z M1 11.0L4.5 14.5L8 11.0Z" fill="#222"/></svg>
<div class="a" style="left:1738px;top:281px;width:152px;height:1px;background:#d7dce6;"></div>
<div class="t" style="left:1738px;top:285.84px;font-size:12px;line-height:14px;color:#0a0a0a">Projection</div>
<div class="a" style="left:1816px;top:283px;width:74px;height:19px;background:#fff;"></div>
<div class="a" style="left:1816px;top:283px;width:56px;height:19px;overflow:hidden"><div class="t" style="left:4px;top:2.84px;font-size:12px;line-height:14px;color:#0a0a0a">Parallel</div></div>
<svg style="left:1877px;top:289.5px" width="9" height="6"><path d="M1 1.5L4.5 4.5L8 1.5" fill="none" stroke="#222" stroke-width="1.3"/></svg>
<div class="a" style="left:1738px;top:303px;width:152px;height:1px;background:#d7dce6;"></div>
<div class="t" style="left:1738px;top:307.84px;font-size:12px;line-height:14px;color:#0a0a0a">Display mode</div>
<div class="a" style="left:1816px;top:305px;width:74px;height:19px;background:#fff;"></div>
<div class="a" style="left:1816px;top:305px;width:56px;height:19px;overflow:hidden"><div class="t" style="left:4px;top:2.84px;font-size:12px;line-height:14px;color:#0a0a0a">Wireframe</div></div>
<svg style="left:1877px;top:311.5px" width="9" height="6"><path d="M1 1.5L4.5 4.5L8 1.5" fill="none" stroke="#222" stroke-width="1.3"/></svg>
<div class="a" style="left:1738px;top:325px;width:152px;height:1px;background:#d7dce6;"></div>
<div class="t" style="left:1738px;top:328.84px;font-size:12px;line-height:14px;color:#0a0a0a">Locked</div>
<div class="a" style="left:1817px;top:329px;width:14px;height:13px;background:#fff;border:1px solid #c3c8d3"></div>
<div class="a" style="left:1738px;top:345px;width:152px;height:1px;background:#d7dce6;"></div>
<div class="t" style="left:1722px;top:348.62px;font-size:13.5px;line-height:16px;color:#0a0a0a">Camera</div>
<div class="a" style="left:1722px;top:368px;width:168px;height:1px;background:#d7dce6;"></div>
<div class="a" style="left:1738px;top:368px;width:76px;height:20px;overflow:hidden"><div class="t" style="left:0px;top:3.84px;font-size:12px;line-height:14px;color:#0a0a0a">Lens Length (i</div></div>
<div class="a" style="left:1816px;top:370px;width:74px;height:17px;background:#fff;"></div>
<div class="t" style="left:1820px;top:371.84px;font-size:12px;line-height:14px;color:#a0a0a0">6182.062</div>
<div class="a" style="left:1878px;top:370px;width:1px;height:17px;background:#c3cbe0;"></div>
<div class="a" style="left:1878px;top:378px;width:12px;height:1px;background:#c3cbe0;"></div>
<svg style="left:1880px;top:370px" width="10" height="17"><path d="M1 6.0L4.5 2.5L8 6.0Z M1 11.0L4.5 14.5L8 11.0Z" fill="#b0b0b0"/></svg>
<div class="a" style="left:1738px;top:388px;width:152px;height:1px;background:#d7dce6;"></div>
<div class="a" style="left:1738px;top:388px;width:76px;height:20px;overflow:hidden"><div class="t" style="left:0px;top:3.84px;font-size:12px;line-height:14px;color:#0a0a0a">Rotation</div></div>
<div class="a" style="left:1816px;top:390px;width:74px;height:17px;background:#fff;"></div>
<div class="t" style="left:1820px;top:391.84px;font-size:12px;line-height:14px;color:#0a0a0a">0.0</div>
<div class="a" style="left:1878px;top:390px;width:1px;height:17px;background:#c3cbe0;"></div>
<div class="a" style="left:1878px;top:398px;width:12px;height:1px;background:#c3cbe0;"></div>
<svg style="left:1880px;top:390px" width="10" height="17"><path d="M1 6.0L4.5 2.5L8 6.0Z M1 11.0L4.5 14.5L8 11.0Z" fill="#222"/></svg>
<div class="a" style="left:1738px;top:408px;width:152px;height:1px;background:#d7dce6;"></div>
<div class="a" style="left:1738px;top:408px;width:76px;height:20px;overflow:hidden"><div class="t" style="left:0px;top:3.84px;font-size:12px;line-height:14px;color:#0a0a0a">X Location</div></div>
<div class="a" style="left:1816px;top:410px;width:74px;height:17px;background:#fff;"></div>
<div class="t" style="left:1820px;top:411.84px;font-size:12px;line-height:14px;color:#0a0a0a">11.775</div>
<div class="a" style="left:1878px;top:410px;width:1px;height:17px;background:#c3cbe0;"></div>
<div class="a" style="left:1878px;top:418px;width:12px;height:1px;background:#c3cbe0;"></div>
<svg style="left:1880px;top:410px" width="10" height="17"><path d="M1 6.0L4.5 2.5L8 6.0Z M1 11.0L4.5 14.5L8 11.0Z" fill="#222"/></svg>
<div class="a" style="left:1738px;top:428px;width:152px;height:1px;background:#d7dce6;"></div>
<div class="a" style="left:1738px;top:428px;width:76px;height:20px;overflow:hidden"><div class="t" style="left:0px;top:3.84px;font-size:12px;line-height:14px;color:#0a0a0a">Y Location</div></div>
<div class="a" style="left:1816px;top:430px;width:74px;height:17px;background:#fff;"></div>
<div class="t" style="left:1820px;top:431.84px;font-size:12px;line-height:14px;color:#0a0a0a">-4019.032</div>
<div class="a" style="left:1878px;top:430px;width:1px;height:17px;background:#c3cbe0;"></div>
<div class="a" style="left:1878px;top:438px;width:12px;height:1px;background:#c3cbe0;"></div>
<svg style="left:1880px;top:430px" width="10" height="17"><path d="M1 6.0L4.5 2.5L8 6.0Z M1 11.0L4.5 14.5L8 11.0Z" fill="#222"/></svg>
<div class="a" style="left:1738px;top:448px;width:152px;height:1px;background:#d7dce6;"></div>
<div class="a" style="left:1738px;top:448px;width:76px;height:20px;overflow:hidden"><div class="t" style="left:0px;top:3.84px;font-size:12px;line-height:14px;color:#0a0a0a">Z Location</div></div>
<div class="a" style="left:1816px;top:450px;width:74px;height:17px;background:#fff;"></div>
<div class="t" style="left:1820px;top:451.84px;font-size:12px;line-height:14px;color:#0a0a0a">-0.175</div>
<div class="a" style="left:1878px;top:450px;width:1px;height:17px;background:#c3cbe0;"></div>
<div class="a" style="left:1878px;top:458px;width:12px;height:1px;background:#c3cbe0;"></div>
<svg style="left:1880px;top:450px" width="10" height="17"><path d="M1 6.0L4.5 2.5L8 6.0Z M1 11.0L4.5 14.5L8 11.0Z" fill="#222"/></svg>
<div class="a" style="left:1738px;top:468px;width:152px;height:1px;background:#d7dce6;"></div>
<div class="a" style="left:1738px;top:468px;width:76px;height:20px;overflow:hidden"><div class="t" style="left:0px;top:3.84px;font-size:12px;line-height:14px;color:#0a0a0a">Distance to Ta</div></div>
<div class="a" style="left:1816px;top:470px;width:74px;height:17px;background:#fff;"></div>
<div class="t" style="left:1820px;top:471.84px;font-size:12px;line-height:14px;color:#0a0a0a">4019.032</div>
<div class="a" style="left:1738px;top:488px;width:152px;height:1px;background:#d7dce6;"></div>
<div class="t" style="left:1738px;top:494.84px;font-size:12px;line-height:14px;color:#0a0a0a">Location</div>
<div class="a" style="left:1816px;top:490px;width:74px;height:23px;background:#e9eaee;border:1px solid #c3c8d6"></div>
<div class="t" style="left:1833px;top:494.84px;font-size:12px;line-height:14px;color:#0a0a0a">Place...</div>
<div class="a" style="left:1738px;top:515px;width:152px;height:1px;background:#d7dce6;"></div>
<div class="t" style="left:1722px;top:518.12px;font-size:13.5px;line-height:16px;color:#0a0a0a">Target</div>
<div class="a" style="left:1722px;top:537px;width:168px;height:1px;background:#d7dce6;"></div>
<div class="t" style="left:1738px;top:540.84px;font-size:12px;line-height:14px;color:#0a0a0a">X Target</div>
<div class="a" style="left:1816px;top:539px;width:74px;height:17px;background:#fff;"></div>
<div class="t" style="left:1820px;top:540.84px;font-size:12px;line-height:14px;color:#0a0a0a">11.775</div>
<div class="a" style="left:1878px;top:539px;width:1px;height:17px;background:#c3cbe0;"></div>
<div class="a" style="left:1878px;top:547px;width:12px;height:1px;background:#c3cbe0;"></div>
<svg style="left:1880px;top:539px" width="10" height="17"><path d="M1 6.0L4.5 2.5L8 6.0Z M1 11.0L4.5 14.5L8 11.0Z" fill="#222"/></svg>
<div class="a" style="left:1738px;top:557px;width:152px;height:1px;background:#d7dce6;"></div>
<div class="t" style="left:1738px;top:560.84px;font-size:12px;line-height:14px;color:#0a0a0a">Y Target</div>
<div class="a" style="left:1816px;top:559px;width:74px;height:17px;background:#fff;"></div>
<div class="t" style="left:1820px;top:560.84px;font-size:12px;line-height:14px;color:#0a0a0a">0.000</div>
<div class="a" style="left:1878px;top:559px;width:1px;height:17px;background:#c3cbe0;"></div>
<div class="a" style="left:1878px;top:567px;width:12px;height:1px;background:#c3cbe0;"></div>
<svg style="left:1880px;top:559px" width="10" height="17"><path d="M1 6.0L4.5 2.5L8 6.0Z M1 11.0L4.5 14.5L8 11.0Z" fill="#222"/></svg>
<div class="a" style="left:1738px;top:577px;width:152px;height:1px;background:#d7dce6;"></div>
<div class="t" style="left:1738px;top:580.84px;font-size:12px;line-height:14px;color:#0a0a0a">Z Target</div>
<div class="a" style="left:1816px;top:579px;width:74px;height:17px;background:#fff;"></div>
<div class="t" style="left:1820px;top:580.84px;font-size:12px;line-height:14px;color:#0a0a0a">-0.175</div>
<div class="a" style="left:1878px;top:579px;width:1px;height:17px;background:#c3cbe0;"></div>
<div class="a" style="left:1878px;top:587px;width:12px;height:1px;background:#c3cbe0;"></div>
<svg style="left:1880px;top:579px" width="10" height="17"><path d="M1 6.0L4.5 2.5L8 6.0Z M1 11.0L4.5 14.5L8 11.0Z" fill="#222"/></svg>
<div class="a" style="left:1738px;top:597px;width:152px;height:1px;background:#d7dce6;"></div>
<div class="t" style="left:1738px;top:603.84px;font-size:12px;line-height:14px;color:#0a0a0a">Location</div>
<div class="a" style="left:1816px;top:599px;width:74px;height:23px;background:#e9eaee;border:1px solid #c3c8d6"></div>
<div class="t" style="left:1833px;top:603.84px;font-size:12px;line-height:14px;color:#0a0a0a">Place...</div>
<div class="a" style="left:1738px;top:623px;width:152px;height:1px;background:#d7dce6;"></div>
<div class="t" style="left:1722px;top:626.82px;font-size:13.5px;line-height:16px;color:#0a0a0a">Wallpaper</div>
<div class="a" style="left:1722px;top:646px;width:168px;height:1px;background:#d7dce6;"></div>
<div class="t" style="left:1738px;top:652.84px;font-size:12px;line-height:14px;color:#0a0a0a">Filename</div>
<div class="a" style="left:1816px;top:648px;width:50px;height:23px;background:#fff;border:1px solid #c3c8d6"></div>
<div class="t" style="left:1819px;top:652.84px;font-size:12px;line-height:14px;color:#7a7a7a">(none)</div>
<div class="a" style="left:1866px;top:648px;width:24px;height:23px;background:#e9eaee;border:1px solid #c3c8d6"></div>
<div class="t" style="left:1873px;top:651.84px;font-size:12px;line-height:14px;color:#0a0a0a">...</div>
<div class="a" style="left:1738px;top:672px;width:152px;height:1px;background:#d7dce6;"></div>
<div class="t" style="left:1738px;top:675.84px;font-size:12px;line-height:14px;color:#0a0a0a">Show</div>
<div class="a" style="left:1817px;top:676px;width:14px;height:13px;background:#fff;border:1px solid #c3c8d3"></div>
<svg style="left:1819px;top:678px" width="10" height="9"><path d="M1 4.5L3.8 7.5L9 1" fill="none" stroke="#111" stroke-width="1.6"/></svg>
<div class="a" style="left:1738px;top:692px;width:152px;height:1px;background:#d7dce6;"></div>
<div class="t" style="left:1738px;top:695.84px;font-size:12px;line-height:14px;color:#0a0a0a">Gray</div>
<div class="a" style="left:1817px;top:696px;width:14px;height:13px;background:#fff;border:1px solid #c3c8d3"></div>
<svg style="left:1819px;top:698px" width="10" height="9"><path d="M1 4.5L3.8 7.5L9 1" fill="none" stroke="#111" stroke-width="1.6"/></svg>
<div class="a" style="left:1738px;top:712px;width:152px;height:1px;background:#d7dce6;"></div>
<svg style="left:1899px;top:160px" width="18" height="18" viewBox="0 0 18 18">
<path d="M4 9.5L11 14L15 11L15.5 8L4 6Z" fill="#2a3fa8"/><path d="M4 8L11 12.5L15.5 9.5V7L4 5Z" fill="#fff"/><path d="M4 6.5L11 11L15.5 8L15.5 6L4 4Z" fill="#e03020"/>
<path d="M3.5 4.5L9 2L15.5 5.5L11 9Z" fill="#ff7040" stroke="#7a2a10" stroke-width="0.4"/><path d="M11 9L15.5 5.5V8.5L11 12Z" fill="#d04a20"/><path d="M3.5 4.5L11 9V12L3.5 7.5Z" fill="#f2f2f2" stroke="#888" stroke-width="0.3"/></svg>
<svg style="left:1899px;top:196px" width="18" height="18" viewBox="0 0 18 18"><circle cx="9" cy="9" r="6.4" fill="none" stroke="#333" stroke-width="0.5"/><path d="M9.00 4.00A5.0 5.0 0 0 1 13.06 6.08" fill="none" stroke="#ff0000" stroke-width="2.6"/><path d="M12.91 5.88A5.0 5.0 0 0 1 13.81 10.35" fill="none" stroke="#ffcc00" stroke-width="2.6"/><path d="M13.87 10.11A5.0 5.0 0 0 1 10.94 13.61" fill="none" stroke="#66ee00" stroke-width="2.6"/><path d="M11.17 13.50A5.0 5.0 0 0 1 6.61 13.39" fill="none" stroke="#00dd88" stroke-width="2.6"/><path d="M6.83 13.50A5.0 5.0 0 0 1 4.08 9.87" fill="none" stroke="#0088ff" stroke-width="2.6"/><path d="M4.13 10.11A5.0 5.0 0 0 1 5.25 5.69" fill="none" stroke="#6600ff" stroke-width="2.6"/><path d="M5.09 5.88A5.0 5.0 0 0 1 9.25 4.01" fill="none" stroke="#ff00cc" stroke-width="2.6"/><circle cx="9" cy="9" r="3.6" fill="#fff" stroke="#555" stroke-width="0.5"/></svg>
<svg style="left:1899px;top:232px" width="18" height="18" viewBox="0 0 18 18">
<defs><linearGradient id="mon" x1="0" y1="0" x2="0" y2="1"><stop offset="0" stop-color="#f4f4f4"/><stop offset="1" stop-color="#8a8a8a"/></linearGradient></defs>
<rect x="2" y="2.5" width="14" height="10.5" fill="url(#mon)" stroke="#000" stroke-width="1.4"/><rect x="7" y="13.5" width="4" height="1.5" fill="#000"/><rect x="5.5" y="15" width="7" height="1.3" fill="#000"/></svg>
<svg style="left:1899px;top:268px" width="18" height="18" viewBox="0 0 18 18">
<rect x="1.5" y="1.5" width="15" height="15" fill="#3a5ed0" stroke="#707070" stroke-width="1"/><rect x="2" y="2" width="14" height="2" fill="#c8d0e8"/><text x="9" y="15" font-size="11" font-weight="bold" fill="#fff" text-anchor="middle" font-family="Liberation Serif">?</text></svg>
<svg style="left:273px;top:919px" width="11" height="11"><path d="M3.5 1.5H6.5V4.5H9.5V7.5H6.5V10H3.5V7.5H0.5V4.5H3.5Z" fill="#fff" stroke="#707070" stroke-width="1"/></svg>
<div class="a" style="left:24px;top:960px;width:14px;height:14px;background:#fff;border:1px solid #c3c8d3"></div>
<div class="t" style="left:43px;top:959.84px;font-size:12px;line-height:14px;color:#1a1a1a">End</div>
<div class="a" style="left:72px;top:960px;width:14px;height:14px;background:#fff;border:1px solid #c3c8d3"></div>
<div class="t" style="left:91px;top:959.84px;font-size:12px;line-height:14px;color:#1a1a1a">Near</div>
<div class="a" style="left:125px;top:960px;width:14px;height:14px;background:#fff;border:1px solid #c3c8d3"></div>
<div class="t" style="left:144px;top:959.84px;font-size:12px;line-height:14px;color:#1a1a1a">Point</div>
<div class="a" style="left:181px;top:960px;width:14px;height:14px;background:#fff;border:1px solid #c3c8d3"></div>
<div class="t" style="left:200px;top:959.84px;font-size:12px;line-height:14px;color:#1a1a1a">Mid</div>
<div class="a" style="left:230px;top:960px;width:14px;height:14px;background:#fff;border:1px solid #c3c8d3"></div>
<div class="t" style="left:249px;top:959.84px;font-size:12px;line-height:14px;color:#1a1a1a">Cen</div>
<div class="a" style="left:281px;top:960px;width:14px;height:14px;background:#fff;border:1px solid #c3c8d3"></div>
<svg style="left:283px;top:962px" width="10" height="10"><path d="M1 5L4 8.5L9 1.5" fill="none" stroke="#111" stroke-width="1.6"/></svg>
<div class="t" style="left:297px;top:959.84px;font-size:12px;line-height:14px;color:#1a1a1a">Int</div>
<div class="a" style="left:321px;top:960px;width:14px;height:14px;background:#fff;border:1px solid #c3c8d3"></div>
<div class="t" style="left:340px;top:959.84px;font-size:12px;line-height:14px;color:#1a1a1a">Perp</div>
<div class="a" style="left:373px;top:960px;width:14px;height:14px;background:#fff;border:1px solid #c3c8d3"></div>
<div class="t" style="left:392px;top:959.84px;font-size:12px;line-height:14px;color:#1a1a1a">Tan</div>
<div class="a" style="left:420px;top:960px;width:14px;height:14px;background:#fff;border:1px solid #c3c8d3"></div>
<div class="t" style="left:439px;top:959.84px;font-size:12px;line-height:14px;color:#1a1a1a">Quad</div>
<div class="a" style="left:477px;top:960px;width:14px;height:14px;background:#fff;border:1px solid #c3c8d3"></div>
<div class="t" style="left:496px;top:959.84px;font-size:12px;line-height:14px;color:#1a1a1a">Knot</div>
<div class="a" style="left:530px;top:960px;width:14px;height:14px;background:#fff;border:1px solid #c3c8d3"></div>
<div class="t" style="left:549px;top:959.84px;font-size:12px;line-height:14px;color:#1a1a1a">Vertex</div>
<div class="a" style="left:589px;top:960px;width:14px;height:14px;background:#fff;border:1px solid #c3c8d3"></div>
<div class="t" style="left:608px;top:959.84px;font-size:12px;line-height:14px;color:#1a1a1a">Project</div>
<div class="a" style="left:663px;top:960px;width:14px;height:14px;background:#fff;border:1px solid #c3c8d3"></div>
<div class="t" style="left:682px;top:959.84px;font-size:12px;line-height:14px;color:#1a1a1a">Disable</div>
<svg style="left:7px;top:991px" width="14" height="14"><rect x="1" y="1" width="12" height="12" fill="#fff" stroke="#444" stroke-width="2"/><rect x="1" y="1" width="4" height="12" fill="#444"/></svg>
<div class="t" style="left:42px;top:990.84px;font-size:12px;line-height:14px;color:#3a3a3a">CPlane</div>
<div class="t" style="left:121px;top:990.84px;font-size:12px;line-height:14px;color:#3a3a3a">x 6.791</div>
<div class="t" style="left:206px;top:990.84px;font-size:12px;line-height:14px;color:#3a3a3a">y 0.331</div>
<div class="t" style="left:303px;top:990.84px;font-size:12px;line-height:14px;color:#3a3a3a">z 0</div>
<div class="t" style="left:392px;top:990.84px;font-size:12px;line-height:14px;color:#3a3a3a">Feet</div>
<div class="t" style="left:479px;top:990.84px;font-size:12px;line-height:14px;color:#3a3a3a">Default</div>
<div class="t" style="left:656px;top:990.84px;font-size:12px;line-height:14px;color:#3a3a3a">Grid Snap</div>
<div class="t" style="left:889px;top:990.84px;font-size:12px;line-height:14px;color:#3a3a3a">SmartTrack</div>
<div class="t" style="left:972px;top:990.84px;font-size:12px;line-height:14px;color:#3a3a3a">Gumball (CPlane)</div>
<div class="t" style="left:1102px;top:990.84px;font-size:12px;line-height:14px;color:#3a3a3a">Auto CPlane (Object)</div>
<div class="t" style="left:1238px;top:990.84px;font-size:12px;line-height:14px;color:#3a3a3a">Record History</div>
<div class="t" style="left:1338px;top:990.84px;font-size:12px;line-height:14px;color:#3a3a3a">Filter</div>
<div class="t" style="left:1388px;top:990.84px;font-size:12px;line-height:14px;color:#3a3a3a">CPU use: 1.2 %</div>
<div class="a" style="left:457px;top:990px;width:16px;height:16px;background:#000;"></div>
<div class="a" style="left:719px;top:988px;width:48px;height:18px;background:#d2daed;border-radius:3px"></div>
<div class="t" style="left:727px;top:990.84px;font-size:12px;line-height:14px;color:#1a1a1a;font-weight:bold">Ortho</div>
<div class="a" style="left:770px;top:988px;width:51px;height:18px;background:#d2daed;border-radius:3px"></div>
<div class="t" style="left:778px;top:990.84px;font-size:12px;line-height:14px;color:#1a1a1a;font-weight:bold">Planar</div>
<div class="a" style="left:824px;top:988px;width:51px;height:18px;background:#d2daed;border-radius:3px"></div>
<div class="t" style="left:832px;top:990.84px;font-size:12px;line-height:14px;color:#1a1a1a;font-weight:bold">Osnap</div>
<svg style="left:1082px;top:991px" width="10" height="13"><path d="M2.5 6V4A2.5 2.5 0 0 1 7.5 4V6" fill="none" stroke="#b0b0b4" stroke-width="1.2"/><rect x="1" y="6" width="8" height="6.5" rx="1" fill="none" stroke="#b0b0b4" stroke-width="1.2"/></svg>
<svg style="left:1899px;top:991px" width="13" height="13"><rect x="1" y="1" width="11" height="11" fill="#fff" stroke="#444" stroke-width="2"/><rect x="8" y="1" width="4" height="11" fill="#444"/></svg>
<svg style="left:1902px;top:939px" width="12" height="12"><path fill-rule="evenodd" d="M11.72 4.54 L11.72 7.46 L10.02 7.51 L9.92 7.77 L11.07 9.01 L9.01 11.07 L7.77 9.92 L7.51 10.02 L7.46 11.72 L4.54 11.72 L4.49 10.02 L4.23 9.92 L2.99 11.07 L0.93 9.01 L2.08 7.77 L1.98 7.51 L0.28 7.46 L0.28 4.54 L1.98 4.49 L2.08 4.23 L0.93 2.99 L2.99 0.93 L4.23 2.08 L4.49 1.98 L4.54 0.28 L7.46 0.28 L7.51 1.98 L7.77 2.08 L9.01 0.93 L11.07 2.99 L9.92 4.23 L10.02 4.49Z M7.6 6A1.6 1.6 0 1 0 4.4 6A1.6 1.6 0 1 0 7.6 6Z" fill="#c0c1c6"/></svg>
</body></html>
